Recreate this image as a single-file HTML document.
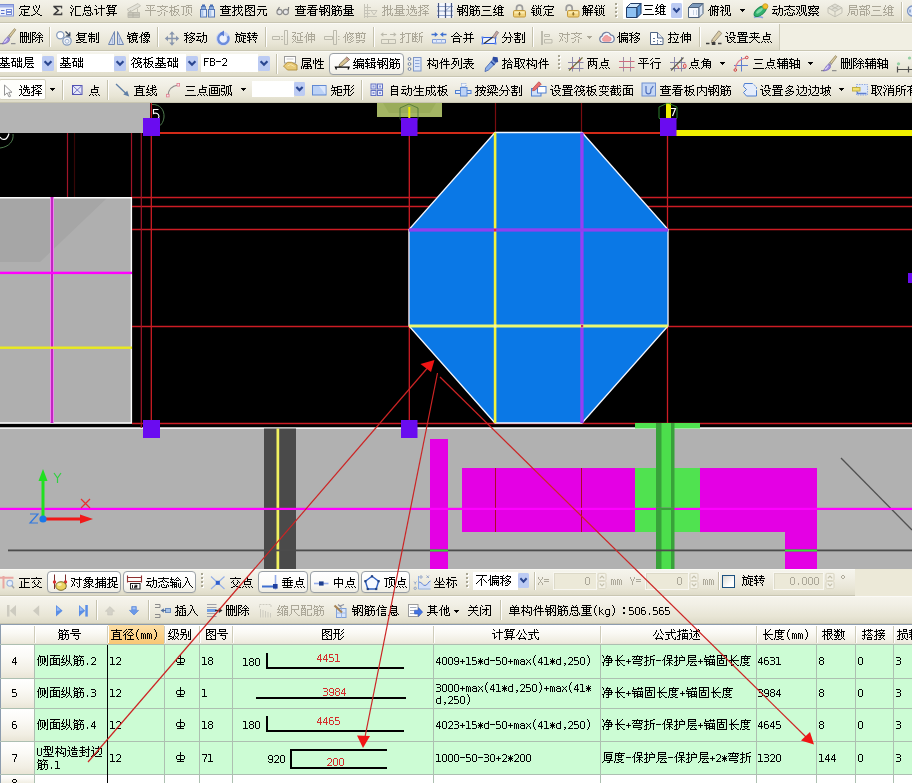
<!DOCTYPE html>
<html lang="zh-CN"><head><meta charset="utf-8"><title>GGJ - 编辑钢筋</title>
<style>
html,body{margin:0;padding:0;background:#ece9d8;overflow:hidden}
body{font-family:"Liberation Sans",sans-serif;font-size:12px}
#app{position:relative;width:912px;height:783px;overflow:hidden;background:#ece9d8}
#app div,#app span,#app svg{position:absolute}
.t{height:12px;font:12px/12px "Liberation Sans",sans-serif;color:transparent;white-space:nowrap;overflow:hidden}
.t svg{left:0;top:0;shape-rendering:crispEdges}
.k svg{fill:#000}.d svg{fill:#aca899}.r svg{fill:#d42c2c}.w svg{fill:#fff}
.i{overflow:visible}
.tb{left:0;width:912px;background:linear-gradient(#f5f4ec,#f1efe5 30%,#e8e5d5 75%,#dedbc8);border-top:1px solid #fbfaf6;border-bottom:1px solid #c9c6b2;box-sizing:border-box}
.tbend{background:#f1efe3;border-left:1px solid #cbc8b5;box-sizing:border-box}
.plain{background:#ece9d8}
.sep{border-left:1px solid #c5c2ae;border-right:1px solid #fff;box-sizing:border-box}
.grip{background:repeating-linear-gradient(#9d9a88 0,#9d9a88 1px,transparent 1px,transparent 2px,#fff 2px,#fff 3px,transparent 3px,transparent 4px);width:2px}
.combo{background:#fff}
.hot{background:linear-gradient(#fff,#fbfaf7 60%,#eeece2);border:1px solid #9aa0a6;border-radius:4px;box-sizing:border-box;box-shadow:0 1px 0 #d8d5c4}
.pressed{background:#fefefb;border:1px solid #d3d0be;border-radius:2px;box-sizing:border-box}
.inp{background:#ece9d8;border:1px solid #f8f7f1;box-sizing:border-box;box-shadow:inset 1px 1px 0 #dcd9c8}
.chk{background:linear-gradient(135deg,#dcdcd4,#fff 70%);border:1px solid #1c5180;box-sizing:border-box}
#canvas{left:0;top:103px}
.ghead{background:linear-gradient(#fff,#faf9f4 40%,#efece0 85%,#e4e0d0);border-top:1px solid #8c9cae;box-sizing:border-box}
.gsel{background:linear-gradient(#fde0a8,#f8c674)}
.gbody{background:#ccfcd4}
.growh{background:linear-gradient(#fff,#fbfaf6 35%,#f1eee3 80%,#e9e5d6)}
.gleft{background:#8c9cae}
.vl{background:#adbfb1}.hvl{background:#cfccba;box-shadow:1px 0 0 #fff}
.hl{background:#adbfb1}
.cur{background:#000}
#anno{left:0;top:0;pointer-events:none}
</style></head>
<body>
<svg width="0" height="0" style="position:absolute" aria-hidden="true"><defs>
<path id="g28" d="M3 0h1v1h-1zm-1 1h1v1h-1zm0 1h1v1h-1zm-1 1h1v1h-1zm0 1h1v1h-1zm0 1h1v1h-1zm0 1h1v1h-1zm0 1h1v1h-1zm1 1h1v1h-1zm0 1h1v1h-1zm1 1h1v1h-1z"/>
<path id="g29" d="M1 0h1v1h-1zm1 1h1v1h-1zm0 1h1v1h-1zm1 1h1v1h-1zm0 1h1v1h-1zm0 1h1v1h-1zm0 1h1v1h-1zm0 1h1v1h-1zm-1 1h1v1h-1zm0 1h1v1h-1zm-1 1h1v1h-1z"/>
<path id="g2a" d="M2 3h1v1h-1zm-2 1h1v1h-1zm2 0h1v1h-1zm2 0h1v1h-1zm-3 1h3v1h-3zm-1 1h5v1h-5zm1 1h3v1h-3zm-1 1h1v1h-1zm2 0h1v1h-1zm2 0h1v1h-1zm-2 1h1v1h-1z"/>
<path id="g2b" d="M2 4h1v1h-1zm0 1h1v1h-1zm-2 1h5v1h-5zm2 1h1v1h-1zm0 1h1v1h-1z"/>
<path id="g2c" d="M2 8h2v1h-2zm1 1h1v1h-1zm-1 1h1v1h-1z"/>
<path id="g2d" d="M0 5h5v1h-5z"/>
<path id="g2e" d="M2 8h1v1h-1zm0 1h1v1h-1z"/>
<path id="g30" d="M1 2h3v1h-3zm-1 1h1v1h-1zm4 0h1v1h-1zm-4 1h1v1h-1zm4 0h1v1h-1zm-4 1h1v1h-1zm4 0h1v1h-1zm-4 1h1v1h-1zm4 0h1v1h-1zm-4 1h1v1h-1zm4 0h1v1h-1zm-4 1h1v1h-1zm4 0h1v1h-1zm-3 1h3v1h-3z"/>
<path id="g31" d="M0 2h3v1h-3zm2 1h1v1h-1zm0 1h1v1h-1zm0 1h1v1h-1zm0 1h1v1h-1zm0 1h1v1h-1zm0 1h1v1h-1zm-2 1h5v1h-5z"/>
<path id="g32" d="M1 2h3v1h-3zm-1 1h1v1h-1zm4 0h1v1h-1zm0 1h1v1h-1zm0 1h1v1h-1zm-1 1h1v1h-1zm-1 1h1v1h-1zm-1 1h1v1h-1zm-1 1h5v1h-5z"/>
<path id="g33" d="M0 2h4v1h-4zm4 1h1v1h-1zm0 1h1v1h-1zm-3 1h3v1h-3zm3 1h1v1h-1zm0 1h1v1h-1zm0 1h1v1h-1zm-4 1h4v1h-4z"/>
<path id="g34" d="M3 2h1v1h-1zm-1 1h2v1h-2zm-1 1h1v1h-1zm2 0h1v1h-1zm-2 1h1v1h-1zm2 0h1v1h-1zm-3 1h1v1h-1zm3 0h1v1h-1zm-3 1h5v1h-5zm3 1h1v1h-1zm0 1h1v1h-1z"/>
<path id="g35" d="M0 2h4v1h-4zm0 1h1v1h-1zm0 1h1v1h-1zm0 1h4v1h-4zm4 1h1v1h-1zm0 1h1v1h-1zm0 1h1v1h-1zm-4 1h4v1h-4z"/>
<path id="g36" d="M1 2h3v1h-3zm-1 1h1v1h-1zm0 1h1v1h-1zm0 1h4v1h-4zm0 1h1v1h-1zm4 0h1v1h-1zm-4 1h1v1h-1zm4 0h1v1h-1zm-4 1h1v1h-1zm4 0h1v1h-1zm-3 1h3v1h-3z"/>
<path id="g37" d="M0 2h5v1h-5zm4 1h1v1h-1zm0 1h1v1h-1zm-1 1h1v1h-1zm0 1h1v1h-1zm-1 1h1v1h-1zm0 1h1v1h-1zm0 1h1v1h-1z"/>
<path id="g38" d="M1 2h3v1h-3zm-1 1h1v1h-1zm4 0h1v1h-1zm-4 1h1v1h-1zm4 0h1v1h-1zm-3 1h3v1h-3zm-1 1h1v1h-1zm4 0h1v1h-1zm-4 1h1v1h-1zm4 0h1v1h-1zm-4 1h1v1h-1zm4 0h1v1h-1zm-3 1h3v1h-3z"/>
<path id="g39" d="M1 2h3v1h-3zm-1 1h1v1h-1zm4 0h1v1h-1zm-4 1h1v1h-1zm4 0h1v1h-1zm-4 1h1v1h-1zm4 0h1v1h-1zm-3 1h4v1h-4zm3 1h1v1h-1zm-4 1h1v1h-1zm4 0h1v1h-1zm-3 1h3v1h-3z"/>
<path id="g3d" d="M0 4h5v1h-5zm0 2h5v1h-5z"/>
<path id="g42" d="M0 2h4v1h-4zm0 1h1v1h-1zm4 0h1v1h-1zm-4 1h1v1h-1zm4 0h1v1h-1zm-4 1h4v1h-4zm0 1h1v1h-1zm4 0h1v1h-1zm-4 1h1v1h-1zm4 0h1v1h-1zm-4 1h1v1h-1zm4 0h1v1h-1zm-4 1h4v1h-4z"/>
<path id="g46" d="M0 2h5v1h-5zm0 1h1v1h-1zm0 1h1v1h-1zm0 1h4v1h-4zm0 1h1v1h-1zm0 1h1v1h-1zm0 1h1v1h-1zm0 1h1v1h-1z"/>
<path id="g55" d="M0 2h1v1h-1zm4 0h1v1h-1zm-4 1h1v1h-1zm4 0h1v1h-1zm-4 1h1v1h-1zm4 0h1v1h-1zm-4 1h1v1h-1zm4 0h1v1h-1zm-4 1h1v1h-1zm4 0h1v1h-1zm-4 1h1v1h-1zm4 0h1v1h-1zm-4 1h1v1h-1zm4 0h1v1h-1zm-3 1h3v1h-3z"/>
<path id="g58" d="M0 2h1v1h-1zm4 0h1v1h-1zm-4 1h1v1h-1zm4 0h1v1h-1zm-3 1h1v1h-1zm2 0h1v1h-1zm-1 1h1v1h-1zm0 1h1v1h-1zm-1 1h1v1h-1zm2 0h1v1h-1zm-3 1h1v1h-1zm4 0h1v1h-1zm-4 1h1v1h-1zm4 0h1v1h-1z"/>
<path id="g59" d="M0 2h1v1h-1zm4 0h1v1h-1zm-4 1h1v1h-1zm4 0h1v1h-1zm-3 1h1v1h-1zm2 0h1v1h-1zm-2 1h1v1h-1zm2 0h1v1h-1zm-1 1h1v1h-1zm0 1h1v1h-1zm0 1h1v1h-1zm0 1h1v1h-1z"/>
<path id="g61" d="M1 4h3v1h-3zm-1 1h1v1h-1zm4 0h1v1h-1zm-3 1h4v1h-4zm-1 1h1v1h-1zm4 0h1v1h-1zm-4 1h1v1h-1zm4 0h1v1h-1zm-3 1h4v1h-4z"/>
<path id="g64" d="M4 2h1v1h-1zm0 1h1v1h-1zm-3 1h4v1h-4zm-1 1h1v1h-1zm4 0h1v1h-1zm-4 1h1v1h-1zm4 0h1v1h-1zm-4 1h1v1h-1zm4 0h1v1h-1zm-4 1h1v1h-1zm4 0h1v1h-1zm-3 1h4v1h-4z"/>
<path id="g67" d="M1 4h4v1h-4zm-1 1h1v1h-1zm4 0h1v1h-1zm-4 1h1v1h-1zm4 0h1v1h-1zm-4 1h1v1h-1zm4 0h1v1h-1zm-4 1h1v1h-1zm4 0h1v1h-1zm-3 1h4v1h-4zm3 1h1v1h-1zm-3 1h3v1h-3z"/>
<path id="g6b" d="M0 2h1v1h-1zm0 1h1v1h-1zm0 1h1v1h-1zm3 0h1v1h-1zm-3 1h1v1h-1zm2 0h1v1h-1zm-2 1h2v1h-2zm0 1h1v1h-1zm2 0h1v1h-1zm-2 1h1v1h-1zm3 0h1v1h-1zm-3 1h1v1h-1zm4 0h1v1h-1z"/>
<path id="g6d" d="M0 4h2v1h-2zm3 0h1v1h-1zm-3 1h1v1h-1zm2 0h1v1h-1zm2 0h1v1h-1zm-4 1h1v1h-1zm2 0h1v1h-1zm2 0h1v1h-1zm-4 1h1v1h-1zm2 0h1v1h-1zm2 0h1v1h-1zm-4 1h1v1h-1zm2 0h1v1h-1zm2 0h1v1h-1zm-4 1h1v1h-1zm2 0h1v1h-1zm2 0h1v1h-1z"/>
<path id="g78" d="M0 4h1v1h-1zm4 0h1v1h-1zm-3 1h1v1h-1zm2 0h1v1h-1zm-1 1h1v1h-1zm-1 1h1v1h-1zm2 0h1v1h-1zm-3 1h1v1h-1zm4 0h1v1h-1zm-4 1h1v1h-1zm4 0h1v1h-1z"/>
<path id="gb0" d="M1 2h2v1h-2zm-1 1h1v1h-1zm3 0h1v1h-1zm-3 1h1v1h-1zm3 0h1v1h-1zm-2 1h2v1h-2z"/>
<path id="g4e09" d="M1 1h9v1h-9zm1 4h7v1h-7zm-2 5h11v1h-11z"/>
<path id="g4e0d" d="M0 0h11v1h-11zm6 1h1v1h-1zm0 1h1v1h-1zm-1 1h1v1h-1zm-1 1h2v1h-2zm3 0h1v1h-1zm-4 1h1v1h-1zm2 0h1v1h-1zm3 0h1v1h-1zm-6 1h1v1h-1zm3 0h1v1h-1zm4 0h1v1h-1zm-8 1h1v1h-1zm4 0h1v1h-1zm5 0h1v1h-1zm-10 1h1v1h-1zm5 0h1v1h-1zm0 1h1v1h-1zm0 1h1v1h-1z"/>
<path id="g4e24" d="M0 0h11v1h-11zm3 1h1v1h-1zm3 0h1v1h-1zm-3 1h1v1h-1zm3 0h1v1h-1zm-5 1h9v1h-9zm0 1h1v1h-1zm2 0h1v1h-1zm3 0h1v1h-1zm3 0h1v1h-1zm-8 1h1v1h-1zm2 0h1v1h-1zm3 0h1v1h-1zm3 0h1v1h-1zm-8 1h1v1h-1zm2 0h2v1h-2zm3 0h2v1h-2zm3 0h1v1h-1zm-8 1h2v1h-2zm4 0h1v1h-1zm3 0h2v1h-2zm-7 1h1v1h-1zm3 0h1v1h-1zm5 0h1v1h-1zm-8 1h1v1h-1zm8 0h1v1h-1zm-8 1h1v1h-1zm7 0h2v1h-2z"/>
<path id="g4e2d" d="M5 0h1v1h-1zm0 1h1v1h-1zm-4 1h9v1h-9zm0 1h1v1h-1zm4 0h1v1h-1zm4 0h1v1h-1zm-8 1h1v1h-1zm4 0h1v1h-1zm4 0h1v1h-1zm-8 1h1v1h-1zm4 0h1v1h-1zm4 0h1v1h-1zm-8 1h9v1h-9zm0 1h1v1h-1zm4 0h1v1h-1zm4 0h1v1h-1zm-4 1h1v1h-1zm0 1h1v1h-1zm0 1h1v1h-1z"/>
<path id="g4e49" d="M4 0h1v1h-1zm4 0h1v1h-1zm-6 1h1v1h-1zm3 0h1v1h-1zm3 0h1v1h-1zm-6 1h1v1h-1zm3 0h1v1h-1zm3 0h1v1h-1zm-6 1h1v1h-1zm5 0h1v1h-1zm-4 1h1v1h-1zm4 0h1v1h-1zm-4 1h1v1h-1zm3 0h1v1h-1zm-2 1h1v1h-1zm2 0h1v1h-1zm-1 1h1v1h-1zm-1 1h1v1h-1zm2 0h1v1h-1zm-4 1h2v1h-2zm5 0h2v1h-2zm-7 1h2v1h-2zm9 0h2v1h-2z"/>
<path id="g4ea4" d="M5 0h1v1h-1zm-5 1h11v1h-11zm3 2h1v1h-1zm4 0h1v1h-1zm-5 1h1v1h-1zm6 0h1v1h-1zm-7 1h1v1h-1zm2 0h1v1h-1zm4 0h1v1h-1zm2 0h1v1h-1zm-6 1h1v1h-1zm4 0h1v1h-1zm-3 1h1v1h-1zm2 0h1v1h-1zm-1 1h1v1h-1zm-2 1h2v1h-2zm3 0h2v1h-2zm-5 1h2v1h-2zm7 0h3v1h-3z"/>
<path id="g4ed6" d="M3 0h1v1h-1zm4 0h1v1h-1zm-4 1h1v1h-1zm4 0h1v1h-1zm-5 1h1v1h-1zm3 0h1v1h-1zm2 0h1v1h-1zm2 0h1v1h-1zm-7 1h1v1h-1zm3 0h1v1h-1zm2 0h3v1h-3zm-6 1h2v1h-2zm3 0h4v1h-4zm5 0h1v1h-1zm-9 1h1v1h-1zm2 0h1v1h-1zm3 0h1v1h-1zm2 0h1v1h-1zm2 0h1v1h-1zm-7 1h1v1h-1zm3 0h1v1h-1zm2 0h1v1h-1zm2 0h1v1h-1zm-7 1h1v1h-1zm3 0h1v1h-1zm2 0h2v1h-2zm-5 1h1v1h-1zm3 0h1v1h-1zm2 0h1v1h-1zm3 0h1v1h-1zm-8 1h1v1h-1zm3 0h1v1h-1zm5 0h1v1h-1zm-8 1h1v1h-1zm4 0h5v1h-5z"/>
<path id="g4ef6" d="M3 0h1v1h-1zm4 0h1v1h-1zm-4 1h1v1h-1zm2 0h1v1h-1zm2 0h1v1h-1zm-5 1h1v1h-1zm3 0h1v1h-1zm2 0h1v1h-1zm-5 1h1v1h-1zm2 0h6v1h-6zm-3 1h3v1h-3zm6 0h1v1h-1zm-7 1h1v1h-1zm2 0h1v1h-1zm5 0h1v1h-1zm-5 1h1v1h-1zm2 0h7v1h-7zm-2 1h1v1h-1zm5 0h1v1h-1zm-5 1h1v1h-1zm5 0h1v1h-1zm-5 1h1v1h-1zm5 0h1v1h-1zm-5 1h1v1h-1zm5 0h1v1h-1z"/>
<path id="g4f38" d="M3 0h1v1h-1zm4 0h1v1h-1zm-4 1h1v1h-1zm4 0h1v1h-1zm-5 1h1v1h-1zm2 0h7v1h-7zm-2 1h1v1h-1zm2 0h1v1h-1zm3 0h1v1h-1zm3 0h1v1h-1zm-9 1h2v1h-2zm3 0h7v1h-7zm-4 1h1v1h-1zm2 0h1v1h-1zm2 0h1v1h-1zm3 0h1v1h-1zm3 0h1v1h-1zm-8 1h1v1h-1zm2 0h1v1h-1zm3 0h1v1h-1zm3 0h1v1h-1zm-8 1h1v1h-1zm2 0h7v1h-7zm-2 1h1v1h-1zm2 0h1v1h-1zm3 0h1v1h-1zm3 0h1v1h-1zm-8 1h1v1h-1zm5 0h1v1h-1zm-5 1h1v1h-1zm5 0h1v1h-1z"/>
<path id="g4fa7" d="M2 0h1v1h-1zm8 0h1v1h-1zm-8 1h6v1h-6zm8 0h1v1h-1zm-9 1h1v1h-1zm2 0h1v1h-1zm4 0h1v1h-1zm3 0h1v1h-1zm-9 1h1v1h-1zm2 0h1v1h-1zm2 0h1v1h-1zm2 0h2v1h-2zm3 0h1v1h-1zm-10 1h2v1h-2zm3 0h1v1h-1zm2 0h1v1h-1zm2 0h2v1h-2zm3 0h1v1h-1zm-9 1h1v1h-1zm2 0h1v1h-1zm2 0h1v1h-1zm2 0h2v1h-2zm3 0h1v1h-1zm-9 1h1v1h-1zm2 0h1v1h-1zm2 0h1v1h-1zm2 0h2v1h-2zm3 0h1v1h-1zm-9 1h1v1h-1zm2 0h1v1h-1zm2 0h1v1h-1zm2 0h1v1h-1zm3 0h1v1h-1zm-9 1h1v1h-1zm4 0h2v1h-2zm5 0h1v1h-1zm-9 1h1v1h-1zm3 0h1v1h-1zm3 0h1v1h-1zm3 0h1v1h-1zm-9 1h1v1h-1zm2 0h1v1h-1zm6 0h2v1h-2z"/>
<path id="g4fdd" d="M3 0h1v1h-1zm2 0h5v1h-5zm-2 1h1v1h-1zm2 0h1v1h-1zm4 0h1v1h-1zm-7 1h1v1h-1zm3 0h1v1h-1zm4 0h1v1h-1zm-7 1h1v1h-1zm3 0h5v1h-5zm-4 1h2v1h-2zm6 0h1v1h-1zm-7 1h1v1h-1zm2 0h1v1h-1zm2 0h7v1h-7zm-2 1h1v1h-1zm5 0h1v1h-1zm-5 1h1v1h-1zm4 0h3v1h-3zm-4 1h1v1h-1zm3 0h1v1h-1zm2 0h1v1h-1zm2 0h1v1h-1zm-7 1h1v1h-1zm2 0h1v1h-1zm3 0h1v1h-1zm3 0h1v1h-1zm-8 1h1v1h-1zm5 0h1v1h-1z"/>
<path id="g4fe1" d="M3 0h1v1h-1zm3 0h1v1h-1zm-3 1h1v1h-1zm4 0h1v1h-1zm-5 1h1v1h-1zm2 0h7v1h-7zm-2 1h1v1h-1zm-1 1h2v1h-2zm4 0h5v1h-5zm-5 1h1v1h-1zm2 0h1v1h-1zm0 1h1v1h-1zm3 0h5v1h-5zm-3 1h1v1h-1zm0 1h1v1h-1zm3 0h5v1h-5zm-3 1h1v1h-1zm3 0h1v1h-1zm4 0h1v1h-1zm-7 1h1v1h-1zm3 0h5v1h-5z"/>
<path id="g4fee" d="M3 0h1v1h-1zm3 0h1v1h-1zm-3 1h1v1h-1zm3 0h5v1h-5zm-4 1h1v1h-1zm2 0h2v1h-2zm3 0h1v1h-1zm2 0h1v1h-1zm-7 1h1v1h-1zm2 0h1v1h-1zm4 0h1v1h-1zm-7 1h2v1h-2zm3 0h1v1h-1zm2 0h2v1h-2zm3 0h1v1h-1zm-9 1h1v1h-1zm2 0h1v1h-1zm2 0h2v1h-2zm4 0h1v1h-1zm2 0h1v1h-1zm-8 1h1v1h-1zm2 0h1v1h-1zm3 0h1v1h-1zm2 0h1v1h-1zm-7 1h1v1h-1zm2 0h1v1h-1zm2 0h1v1h-1zm2 0h1v1h-1zm-6 1h1v1h-1zm2 0h1v1h-1zm3 0h1v1h-1zm3 0h1v1h-1zm-8 1h1v1h-1zm6 0h2v1h-2zm-6 1h1v1h-1zm3 0h3v1h-3z"/>
<path id="g4fef" d="M3 0h1v1h-1zm4 0h1v1h-1zm-4 1h8v1h-8zm-1 1h1v1h-1zm2 0h1v1h-1zm2 0h1v1h-1zm3 0h1v1h-1zm-7 1h1v1h-1zm2 0h1v1h-1zm2 0h1v1h-1zm3 0h1v1h-1zm-8 1h2v1h-2zm3 0h1v1h-1zm2 0h5v1h-5zm-6 1h1v1h-1zm2 0h1v1h-1zm2 0h3v1h-3zm5 0h1v1h-1zm-7 1h1v1h-1zm2 0h1v1h-1zm2 0h2v1h-2zm3 0h1v1h-1zm-7 1h1v1h-1zm2 0h1v1h-1zm2 0h1v1h-1zm2 0h2v1h-2zm-6 1h1v1h-1zm2 0h1v1h-1zm2 0h1v1h-1zm3 0h1v1h-1zm-7 1h1v1h-1zm2 0h1v1h-1zm2 0h1v1h-1zm3 0h1v1h-1zm-7 1h2v1h-2zm4 0h1v1h-1zm2 0h2v1h-2z"/>
<path id="g504f" d="M2 0h1v1h-1zm5 0h1v1h-1zm-5 1h1v1h-1zm2 0h7v1h-7zm-2 1h1v1h-1zm2 0h1v1h-1zm6 0h1v1h-1zm-8 1h1v1h-1zm2 0h7v1h-7zm-3 1h2v1h-2zm3 0h1v1h-1zm-4 1h1v1h-1zm2 0h1v1h-1zm2 0h7v1h-7zm-2 1h1v1h-1zm2 0h1v1h-1zm2 0h1v1h-1zm2 0h1v1h-1zm2 0h1v1h-1zm-8 1h1v1h-1zm2 0h7v1h-7zm-2 1h1v1h-1zm2 0h1v1h-1zm2 0h1v1h-1zm2 0h1v1h-1zm2 0h1v1h-1zm-8 1h3v1h-3zm4 0h1v1h-1zm2 0h1v1h-1zm2 0h1v1h-1zm-8 1h1v1h-1zm2 0h1v1h-1zm5 0h2v1h-2z"/>
<path id="g50cf" d="M3 0h1v1h-1zm3 0h4v1h-4zm-3 1h1v1h-1zm2 0h1v1h-1zm3 0h1v1h-1zm-6 1h1v1h-1zm2 0h7v1h-7zm-2 1h2v1h-2zm3 0h1v1h-1zm2 0h1v1h-1zm3 0h1v1h-1zm-9 1h2v1h-2zm4 0h6v1h-6zm-5 1h1v1h-1zm2 0h1v1h-1zm4 0h1v1h-1zm4 0h1v1h-1zm-8 1h1v1h-1zm2 0h2v1h-2zm3 0h1v1h-1zm2 0h1v1h-1zm-7 1h1v1h-1zm4 0h1v1h-1zm2 0h1v1h-1zm-6 1h1v1h-1zm2 0h2v1h-2zm3 0h3v1h-3zm-5 1h1v1h-1zm4 0h1v1h-1zm2 0h1v1h-1zm2 0h1v1h-1zm-8 1h1v1h-1zm2 0h2v1h-2zm3 0h2v1h-2z"/>
<path id="g5143" d="M2 1h8v1h-8zm-1 3h10v1h-10zm3 1h1v1h-1zm3 0h1v1h-1zm-3 1h1v1h-1zm3 0h1v1h-1zm-4 1h1v1h-1zm4 0h1v1h-1zm-4 1h1v1h-1zm4 0h1v1h-1zm3 0h1v1h-1zm-8 1h1v1h-1zm5 0h1v1h-1zm3 0h1v1h-1zm-9 1h1v1h-1zm7 0h3v1h-3z"/>
<path id="g5165" d="M3 0h2v1h-2zm2 1h1v1h-1zm0 1h1v1h-1zm0 1h1v1h-1zm-1 1h1v1h-1zm2 0h1v1h-1zm-2 1h1v1h-1zm2 0h1v1h-1zm-3 1h1v1h-1zm4 0h1v1h-1zm-4 1h1v1h-1zm4 0h1v1h-1zm-5 1h1v1h-1zm6 0h1v1h-1zm-7 1h1v1h-1zm8 0h1v1h-1zm-9 1h1v1h-1zm10 0h1v1h-1z"/>
<path id="g516c" d="M7 0h1v1h-1zm-4 1h1v1h-1zm4 0h1v1h-1zm-4 1h1v1h-1zm5 0h1v1h-1zm-6 1h1v1h-1zm6 0h1v1h-1zm-6 1h1v1h-1zm3 0h1v1h-1zm4 0h1v1h-1zm-8 1h1v1h-1zm4 0h1v1h-1zm5 0h1v1h-1zm-10 1h1v1h-1zm4 0h1v1h-1zm0 1h1v1h-1zm3 0h1v1h-1zm-4 1h1v1h-1zm5 0h1v1h-1zm-6 1h8v1h-8zm1 1h1v1h-1zm6 0h1v1h-1z"/>
<path id="g5173" d="M2 0h1v1h-1zm6 0h1v1h-1zm-5 1h1v1h-1zm4 0h1v1h-1zm-6 1h9v1h-9zm4 1h1v1h-1zm0 1h1v1h-1zm-5 1h10v1h-10zm5 1h1v1h-1zm-1 1h1v1h-1zm2 0h1v1h-1zm-3 1h1v1h-1zm4 0h1v1h-1zm-5 1h1v1h-1zm6 0h1v1h-1zm-8 1h2v1h-2zm9 0h2v1h-2z"/>
<path id="g5176" d="M3 0h1v1h-1zm4 0h1v1h-1zm-6 1h9v1h-9zm2 1h1v1h-1zm4 0h1v1h-1zm-4 1h5v1h-5zm0 1h1v1h-1zm4 0h1v1h-1zm-4 1h5v1h-5zm0 1h1v1h-1zm4 0h1v1h-1zm-7 1h11v1h-11zm3 1h1v1h-1zm4 0h1v1h-1zm-5 1h1v1h-1zm6 0h1v1h-1zm-8 1h2v1h-2zm9 0h1v1h-1z"/>
<path id="g5185" d="M5 0h1v1h-1zm0 1h1v1h-1zm-4 1h10v1h-10zm0 1h1v1h-1zm4 0h1v1h-1zm5 0h1v1h-1zm-9 1h1v1h-1zm4 0h1v1h-1zm5 0h1v1h-1zm-9 1h1v1h-1zm4 0h2v1h-2zm5 0h1v1h-1zm-9 1h1v1h-1zm3 0h1v1h-1zm3 0h1v1h-1zm3 0h1v1h-1zm-9 1h1v1h-1zm2 0h1v1h-1zm5 0h1v1h-1zm2 0h1v1h-1zm-9 1h1v1h-1zm9 0h1v1h-1zm-9 1h1v1h-1zm9 0h1v1h-1zm-9 1h1v1h-1zm7 0h3v1h-3z"/>
<path id="g51c0" d="M0 0h1v1h-1zm5 0h1v1h-1zm-4 1h1v1h-1zm3 0h5v1h-5zm-3 1h1v1h-1zm3 0h1v1h-1zm3 0h1v1h-1zm-4 1h7v1h-7zm-1 1h1v1h-1zm4 0h1v1h-1zm3 0h1v1h-1zm-7 1h9v1h-9zm0 1h1v1h-1zm4 0h1v1h-1zm3 0h1v1h-1zm-9 1h2v1h-2zm4 0h6v1h-6zm-3 1h1v1h-1zm5 0h1v1h-1zm-5 1h1v1h-1zm5 0h1v1h-1zm-5 1h1v1h-1zm3 0h3v1h-3z"/>
<path id="g5206" d="M3 0h1v1h-1zm4 0h1v1h-1zm-4 1h1v1h-1zm4 0h1v1h-1zm-5 1h1v1h-1zm6 0h1v1h-1zm-6 1h1v1h-1zm6 0h1v1h-1zm-7 1h1v1h-1zm8 0h1v1h-1zm-9 1h1v1h-1zm2 0h7v1h-7zm8 0h1v1h-1zm-6 1h1v1h-1zm4 0h1v1h-1zm-4 1h1v1h-1zm4 0h1v1h-1zm-5 1h1v1h-1zm5 0h1v1h-1zm-6 1h1v1h-1zm6 0h1v1h-1zm-8 1h2v1h-2zm6 0h2v1h-2z"/>
<path id="g5217" d="M1 0h6v1h-6zm9 0h1v1h-1zm-7 1h1v1h-1zm7 0h1v1h-1zm-7 1h1v1h-1zm4 0h1v1h-1zm3 0h1v1h-1zm-8 1h4v1h-4zm5 0h1v1h-1zm3 0h1v1h-1zm-8 1h1v1h-1zm3 0h1v1h-1zm2 0h1v1h-1zm3 0h1v1h-1zm-9 1h2v1h-2zm4 0h1v1h-1zm2 0h1v1h-1zm3 0h1v1h-1zm-10 1h1v1h-1zm3 0h2v1h-2zm4 0h1v1h-1zm3 0h1v1h-1zm-6 1h1v1h-1zm3 0h1v1h-1zm3 0h1v1h-1zm-7 1h1v1h-1zm7 0h1v1h-1zm-8 1h1v1h-1zm8 0h1v1h-1zm-10 1h2v1h-2zm8 0h3v1h-3z"/>
<path id="g5220" d="M0 0h3v1h-3zm4 0h3v1h-3zm6 0h1v1h-1zm-10 1h1v1h-1zm2 0h1v1h-1zm2 0h1v1h-1zm2 0h1v1h-1zm2 0h1v1h-1zm2 0h1v1h-1zm-10 1h1v1h-1zm2 0h1v1h-1zm2 0h1v1h-1zm2 0h1v1h-1zm2 0h1v1h-1zm2 0h1v1h-1zm-10 1h1v1h-1zm2 0h1v1h-1zm2 0h1v1h-1zm2 0h1v1h-1zm2 0h1v1h-1zm2 0h1v1h-1zm-10 1h9v1h-9zm10 0h1v1h-1zm-10 1h1v1h-1zm2 0h1v1h-1zm2 0h1v1h-1zm2 0h1v1h-1zm2 0h1v1h-1zm2 0h1v1h-1zm-10 1h1v1h-1zm2 0h1v1h-1zm2 0h1v1h-1zm2 0h1v1h-1zm2 0h1v1h-1zm2 0h1v1h-1zm-10 1h1v1h-1zm2 0h1v1h-1zm2 0h1v1h-1zm2 0h1v1h-1zm2 0h1v1h-1zm2 0h1v1h-1zm-10 1h1v1h-1zm2 0h1v1h-1zm2 0h1v1h-1zm2 0h1v1h-1zm4 0h1v1h-1zm-10 1h1v1h-1zm2 0h1v1h-1zm2 0h1v1h-1zm2 0h1v1h-1zm4 0h1v1h-1zm-10 1h1v1h-1zm2 0h2v1h-2zm3 0h2v1h-2zm3 0h3v1h-3z"/>
<path id="g522b" d="M1 0h5v1h-5zm9 0h1v1h-1zm-9 1h1v1h-1zm4 0h1v1h-1zm5 0h1v1h-1zm-9 1h1v1h-1zm4 0h1v1h-1zm3 0h1v1h-1zm2 0h1v1h-1zm-9 1h5v1h-5zm7 0h1v1h-1zm2 0h1v1h-1zm-7 1h1v1h-1zm5 0h1v1h-1zm2 0h1v1h-1zm-10 1h7v1h-7zm8 0h1v1h-1zm2 0h1v1h-1zm-7 1h1v1h-1zm3 0h1v1h-1zm2 0h1v1h-1zm2 0h1v1h-1zm-8 1h1v1h-1zm4 0h1v1h-1zm2 0h1v1h-1zm2 0h1v1h-1zm-8 1h1v1h-1zm4 0h1v1h-1zm4 0h1v1h-1zm-9 1h1v1h-1zm5 0h1v1h-1zm4 0h1v1h-1zm-10 1h1v1h-1zm4 0h2v1h-2zm4 0h3v1h-3z"/>
<path id="g5236" d="M3 0h1v1h-1zm7 0h1v1h-1zm-9 1h1v1h-1zm2 0h1v1h-1zm5 0h1v1h-1zm2 0h1v1h-1zm-9 1h6v1h-6zm7 0h1v1h-1zm2 0h1v1h-1zm-10 1h1v1h-1zm3 0h1v1h-1zm5 0h1v1h-1zm2 0h1v1h-1zm-10 1h7v1h-7zm8 0h1v1h-1zm2 0h1v1h-1zm-7 1h1v1h-1zm5 0h1v1h-1zm2 0h1v1h-1zm-9 1h6v1h-6zm7 0h1v1h-1zm2 0h1v1h-1zm-9 1h1v1h-1zm2 0h1v1h-1zm3 0h1v1h-1zm2 0h1v1h-1zm2 0h1v1h-1zm-9 1h1v1h-1zm2 0h1v1h-1zm3 0h1v1h-1zm4 0h1v1h-1zm-9 1h1v1h-1zm2 0h1v1h-1zm2 0h2v1h-2zm5 0h1v1h-1zm-7 1h1v1h-1zm5 0h3v1h-3z"/>
<path id="g526a" d="M3 0h1v1h-1zm4 0h1v1h-1zm-7 1h11v1h-11zm1 1h1v1h-1zm3 0h1v1h-1zm5 0h1v1h-1zm-8 1h4v1h-4zm5 0h1v1h-1zm3 0h1v1h-1zm-8 1h1v1h-1zm3 0h1v1h-1zm2 0h1v1h-1zm3 0h1v1h-1zm-8 1h4v1h-4zm5 0h1v1h-1zm3 0h1v1h-1zm-8 1h1v1h-1zm3 0h1v1h-1zm4 0h2v1h-2zm-7 2h9v1h-9zm3 1h1v1h-1zm5 0h1v1h-1zm-8 1h3v1h-3zm6 0h2v1h-2z"/>
<path id="g5272" d="M3 0h1v1h-1zm7 0h1v1h-1zm-10 1h7v1h-7zm10 0h1v1h-1zm-10 1h1v1h-1zm3 0h1v1h-1zm3 0h1v1h-1zm2 0h1v1h-1zm2 0h1v1h-1zm-9 1h5v1h-5zm7 0h1v1h-1zm2 0h1v1h-1zm-7 1h1v1h-1zm5 0h1v1h-1zm2 0h1v1h-1zm-9 1h5v1h-5zm7 0h1v1h-1zm2 0h1v1h-1zm-7 1h1v1h-1zm5 0h1v1h-1zm2 0h1v1h-1zm-10 1h7v1h-7zm8 0h1v1h-1zm2 0h1v1h-1zm-9 1h1v1h-1zm4 0h1v1h-1zm5 0h1v1h-1zm-9 1h1v1h-1zm4 0h1v1h-1zm5 0h1v1h-1zm-9 1h5v1h-5zm7 0h3v1h-3z"/>
<path id="g52a8" d="M7 0h1v1h-1zm-6 1h4v1h-4zm6 0h1v1h-1zm0 1h1v1h-1zm-1 1h5v1h-5zm-6 1h6v1h-6zm7 0h1v1h-1zm3 0h1v1h-1zm-8 1h1v1h-1zm5 0h1v1h-1zm3 0h1v1h-1zm-8 1h1v1h-1zm5 0h1v1h-1zm3 0h1v1h-1zm-9 1h1v1h-1zm3 0h1v1h-1zm3 0h1v1h-1zm3 0h1v1h-1zm-10 1h5v1h-5zm6 0h1v1h-1zm4 0h1v1h-1zm-6 1h1v1h-1zm2 0h1v1h-1zm4 0h1v1h-1zm-5 1h1v1h-1zm3 0h2v1h-2z"/>
<path id="g5355" d="M3 0h1v1h-1zm4 0h1v1h-1zm-3 1h1v1h-1zm2 0h1v1h-1zm-5 1h9v1h-9zm0 1h1v1h-1zm4 0h1v1h-1zm4 0h1v1h-1zm-8 1h9v1h-9zm0 1h1v1h-1zm4 0h1v1h-1zm4 0h1v1h-1zm-8 1h9v1h-9zm4 1h1v1h-1zm-5 1h11v1h-11zm5 1h1v1h-1zm0 1h1v1h-1z"/>
<path id="g539a" d="M2 0h9v1h-9zm0 1h1v1h-1zm0 1h1v1h-1zm2 0h6v1h-6zm-2 1h1v1h-1zm2 0h1v1h-1zm5 0h1v1h-1zm-7 1h1v1h-1zm2 0h6v1h-6zm-2 1h1v1h-1zm2 0h1v1h-1zm5 0h1v1h-1zm-7 1h1v1h-1zm2 0h6v1h-6zm-2 1h1v1h-1zm6 0h1v1h-1zm-6 1h9v1h-9zm-1 1h1v1h-1zm6 0h1v1h-1zm-7 1h1v1h-1zm5 0h3v1h-3z"/>
<path id="g53d6" d="M0 0h6v1h-6zm1 1h1v1h-1zm3 0h1v1h-1zm2 0h5v1h-5zm-5 1h1v1h-1zm3 0h1v1h-1zm2 0h1v1h-1zm4 0h1v1h-1zm-9 1h4v1h-4zm5 0h1v1h-1zm4 0h1v1h-1zm-9 1h1v1h-1zm3 0h1v1h-1zm3 0h1v1h-1zm2 0h1v1h-1zm-8 1h4v1h-4zm6 0h1v1h-1zm2 0h1v1h-1zm-8 1h1v1h-1zm3 0h1v1h-1zm4 0h1v1h-1zm-7 1h1v1h-1zm3 0h2v1h-2zm4 0h1v1h-1zm-8 1h5v1h-5zm7 0h1v1h-1zm2 0h1v1h-1zm-5 1h1v1h-1zm2 0h1v1h-1zm3 0h1v1h-1zm-5 1h2v1h-2zm6 0h1v1h-1z"/>
<path id="g53d8" d="M5 0h1v1h-1zm-4 1h10v1h-10zm3 1h1v1h-1zm3 0h1v1h-1zm-5 1h1v1h-1zm2 0h1v1h-1zm3 0h1v1h-1zm2 0h1v1h-1zm-8 1h1v1h-1zm3 0h1v1h-1zm3 0h1v1h-1zm3 0h1v1h-1zm-8 2h8v1h-8zm2 1h1v1h-1zm3 0h1v1h-1zm-2 1h2v1h-2zm-1 1h1v1h-1zm3 0h1v1h-1zm-6 1h3v1h-3zm7 0h3v1h-3z"/>
<path id="g53f7" d="M2 0h7v1h-7zm0 1h1v1h-1zm6 0h1v1h-1zm-6 1h7v1h-7zm-2 2h11v1h-11zm4 1h1v1h-1zm-1 1h6v1h-6zm5 1h1v1h-1zm0 1h1v1h-1zm-3 1h1v1h-1zm3 0h1v1h-1zm-2 1h2v1h-2z"/>
<path id="g5408" d="M5 0h1v1h-1zm-1 1h1v1h-1zm2 0h1v1h-1zm-3 1h1v1h-1zm4 0h1v1h-1zm-5 1h1v1h-1zm6 0h1v1h-1zm-8 1h2v1h-2zm3 0h5v1h-5zm6 0h2v1h-2zm-7 2h7v1h-7zm0 1h1v1h-1zm6 0h1v1h-1zm-6 1h1v1h-1zm6 0h1v1h-1zm-6 1h7v1h-7zm0 1h1v1h-1zm6 0h1v1h-1z"/>
<path id="g56fa" d="M1 0h10v1h-10zm0 1h1v1h-1zm4 0h1v1h-1zm5 0h1v1h-1zm-9 1h1v1h-1zm4 0h1v1h-1zm5 0h1v1h-1zm-9 1h8v1h-8zm9 0h1v1h-1zm-9 1h1v1h-1zm4 0h1v1h-1zm5 0h1v1h-1zm-9 1h1v1h-1zm2 0h5v1h-5zm7 0h1v1h-1zm-9 1h1v1h-1zm2 0h1v1h-1zm4 0h1v1h-1zm3 0h1v1h-1zm-9 1h1v1h-1zm2 0h1v1h-1zm4 0h1v1h-1zm3 0h1v1h-1zm-9 1h1v1h-1zm2 0h5v1h-5zm7 0h1v1h-1zm-9 1h1v1h-1zm9 0h1v1h-1zm-9 1h10v1h-10z"/>
<path id="g56fe" d="M1 0h10v1h-10zm0 1h1v1h-1zm3 0h1v1h-1zm6 0h1v1h-1zm-9 1h1v1h-1zm3 0h5v1h-5zm6 0h1v1h-1zm-9 1h1v1h-1zm2 0h2v1h-2zm4 0h1v1h-1zm3 0h1v1h-1zm-9 1h2v1h-2zm4 0h2v1h-2zm5 0h1v1h-1zm-9 1h1v1h-1zm3 0h1v1h-1zm3 0h1v1h-1zm3 0h1v1h-1zm-9 1h3v1h-3zm4 0h1v1h-1zm3 0h3v1h-3zm-7 1h1v1h-1zm5 0h1v1h-1zm4 0h1v1h-1zm-9 1h1v1h-1zm4 0h1v1h-1zm5 0h1v1h-1zm-9 1h1v1h-1zm5 0h1v1h-1zm4 0h1v1h-1zm-9 1h10v1h-10z"/>
<path id="g5750" d="M5 0h1v1h-1zm-3 1h1v1h-1zm3 0h1v1h-1zm3 0h1v1h-1zm-6 1h1v1h-1zm3 0h1v1h-1zm3 0h1v1h-1zm-6 1h1v1h-1zm3 0h1v1h-1zm3 0h1v1h-1zm-7 1h1v1h-1zm2 0h1v1h-1zm2 0h1v1h-1zm2 0h1v1h-1zm2 0h1v1h-1zm-9 1h1v1h-1zm4 0h3v1h-3zm6 0h1v1h-1zm-5 1h1v1h-1zm-4 1h9v1h-9zm4 1h1v1h-1zm0 1h1v1h-1zm-5 1h11v1h-11z"/>
<path id="g5761" d="M2 0h1v1h-1zm6 0h1v1h-1zm-6 1h1v1h-1zm6 0h1v1h-1zm-6 1h1v1h-1zm3 0h6v1h-6zm-5 1h6v1h-6zm8 0h1v1h-1zm2 0h1v1h-1zm-8 1h1v1h-1zm3 0h1v1h-1zm3 0h1v1h-1zm-6 1h1v1h-1zm3 0h5v1h-5zm-3 1h1v1h-1zm2 0h2v1h-2zm3 0h1v1h-1zm2 0h1v1h-1zm-7 1h2v1h-2zm3 0h1v1h-1zm2 0h1v1h-1zm2 0h1v1h-1zm-9 1h3v1h-3zm5 0h1v1h-1zm3 0h1v1h-1zm-4 1h1v1h-1zm3 0h1v1h-1zm2 0h1v1h-1zm-6 1h1v1h-1zm2 0h2v1h-2zm5 0h1v1h-1z"/>
<path id="g5782" d="M7 0h2v1h-2zm-6 1h6v1h-6zm4 1h1v1h-1zm-5 1h11v1h-11zm2 1h1v1h-1zm3 0h1v1h-1zm3 0h1v1h-1zm-8 1h11v1h-11zm2 1h1v1h-1zm3 0h1v1h-1zm3 0h1v1h-1zm-6 1h1v1h-1zm3 0h1v1h-1zm3 0h1v1h-1zm-8 1h11v1h-11zm5 1h1v1h-1zm-4 1h9v1h-9z"/>
<path id="g578b" d="M1 0h6v1h-6zm8 0h1v1h-1zm-7 1h1v1h-1zm2 0h1v1h-1zm3 0h1v1h-1zm2 0h1v1h-1zm-7 1h1v1h-1zm2 0h1v1h-1zm3 0h1v1h-1zm2 0h1v1h-1zm-9 1h8v1h-8zm9 0h1v1h-1zm-7 1h1v1h-1zm2 0h1v1h-1zm3 0h1v1h-1zm2 0h1v1h-1zm-7 1h1v1h-1zm2 0h1v1h-1zm5 0h1v1h-1zm-8 1h1v1h-1zm3 0h2v1h-2zm4 0h2v1h-2zm-3 1h1v1h-1zm-3 1h7v1h-7zm3 1h1v1h-1zm-5 1h11v1h-11z"/>
<path id="g57fa" d="M3 0h1v1h-1zm4 0h1v1h-1zm-6 1h9v1h-9zm2 1h1v1h-1zm4 0h1v1h-1zm-4 1h3v1h-3zm4 0h1v1h-1zm-4 1h1v1h-1zm2 0h3v1h-3zm-2 1h1v1h-1zm4 0h1v1h-1zm-7 1h11v1h-11zm2 1h1v1h-1zm3 0h1v1h-1zm3 0h1v1h-1zm-8 1h2v1h-2zm3 0h5v1h-5zm6 0h2v1h-2zm-4 1h1v1h-1zm-5 1h11v1h-11z"/>
<path id="g590d" d="M2 0h1v1h-1zm0 1h9v1h-9zm-1 1h2v1h-2zm7 0h1v1h-1zm-8 1h1v1h-1zm2 0h7v1h-7zm0 1h1v1h-1zm6 0h1v1h-1zm-6 1h7v1h-7zm1 1h1v1h-1zm-1 1h7v1h-7zm-2 1h2v1h-2zm4 0h1v1h-1zm3 0h1v1h-1zm-2 1h2v1h-2zm-5 1h5v1h-5zm7 0h4v1h-4z"/>
<path id="g591a" d="M5 0h1v1h-1zm-1 1h5v1h-5zm-1 1h1v1h-1zm5 0h1v1h-1zm-6 1h1v1h-1zm2 0h1v1h-1zm3 0h1v1h-1zm-2 1h2v1h-2zm-2 1h2v1h-2zm3 0h1v1h-1zm-5 1h2v1h-2zm4 0h5v1h-5zm-1 1h1v1h-1zm5 0h1v1h-1zm-7 1h2v1h-2zm3 0h1v1h-1zm3 0h1v1h-1zm-2 1h2v1h-2zm-5 1h5v1h-5z"/>
<path id="g5939" d="M5 0h1v1h-1zm-4 1h9v1h-9zm4 1h1v1h-1zm-3 1h1v1h-1zm3 0h1v1h-1zm3 0h1v1h-1zm-5 1h1v1h-1zm2 0h1v1h-1zm2 0h1v1h-1zm-7 1h11v1h-11zm5 1h1v1h-1zm-1 1h1v1h-1zm2 0h1v1h-1zm-3 1h1v1h-1zm4 0h1v1h-1zm-5 1h1v1h-1zm6 0h1v1h-1zm-8 1h2v1h-2zm9 0h2v1h-2z"/>
<path id="g5b9a" d="M5 0h1v1h-1zm-4 1h10v1h-10zm0 1h1v1h-1zm9 0h1v1h-1zm-10 1h1v1h-1zm9 0h1v1h-1zm-7 1h8v1h-8zm3 1h1v1h-1zm-3 1h1v1h-1zm3 0h1v1h-1zm-3 1h1v1h-1zm3 0h4v1h-4zm-3 1h1v1h-1zm3 0h1v1h-1zm-4 1h1v1h-1zm2 0h1v1h-1zm2 0h1v1h-1zm-5 1h1v1h-1zm4 0h7v1h-7z"/>
<path id="g5bdf" d="M5 0h1v1h-1zm-5 1h11v1h-11zm0 1h1v1h-1zm2 0h1v1h-1zm4 0h1v1h-1zm4 0h1v1h-1zm-10 1h1v1h-1zm2 0h4v1h-4zm5 0h4v1h-4zm-6 1h2v1h-2zm3 0h1v1h-1zm3 0h1v1h-1zm2 0h1v1h-1zm-8 1h1v1h-1zm2 0h1v1h-1zm5 0h1v1h-1zm-6 1h1v1h-1zm2 0h4v1h-4zm5 0h1v1h-1zm-9 1h2v1h-2zm10 0h1v1h-1zm-9 1h9v1h-9zm1 1h1v1h-1zm3 0h1v1h-1zm3 0h1v1h-1zm-8 1h2v1h-2zm4 0h2v1h-2zm5 0h2v1h-2z"/>
<path id="g5bf9" d="M8 0h1v1h-1zm-8 1h4v1h-4zm8 0h1v1h-1zm-5 1h8v1h-8zm-3 1h1v1h-1zm3 0h1v1h-1zm5 0h1v1h-1zm-7 1h1v1h-1zm2 0h1v1h-1zm5 0h1v1h-1zm-6 1h1v1h-1zm3 0h1v1h-1zm3 0h1v1h-1zm-6 1h1v1h-1zm4 0h1v1h-1zm2 0h1v1h-1zm-7 1h1v1h-1zm2 0h1v1h-1zm5 0h1v1h-1zm-7 1h1v1h-1zm2 0h1v1h-1zm5 0h1v1h-1zm-8 1h1v1h-1zm6 0h1v1h-1zm2 0h1v1h-1zm-1 1h1v1h-1z"/>
<path id="g5c01" d="M3 0h1v1h-1zm6 0h1v1h-1zm-8 1h5v1h-5zm8 0h1v1h-1zm-6 1h1v1h-1zm6 0h1v1h-1zm-6 1h1v1h-1zm3 0h5v1h-5zm-6 1h6v1h-6zm9 0h1v1h-1zm-6 1h1v1h-1zm3 0h1v1h-1zm3 0h1v1h-1zm-8 1h5v1h-5zm6 0h1v1h-1zm2 0h1v1h-1zm-6 1h1v1h-1zm6 0h1v1h-1zm-6 1h1v1h-1zm6 0h1v1h-1zm-6 1h3v1h-3zm6 0h1v1h-1zm-9 1h3v1h-3zm7 0h3v1h-3z"/>
<path id="g5c3a" d="M2 0h8v1h-8zm0 1h1v1h-1zm7 0h1v1h-1zm-7 1h1v1h-1zm7 0h1v1h-1zm-7 1h1v1h-1zm7 0h1v1h-1zm-7 1h8v1h-8zm0 1h1v1h-1zm3 0h1v1h-1zm-3 1h1v1h-1zm3 0h1v1h-1zm-3 1h1v1h-1zm4 0h1v1h-1zm-4 1h1v1h-1zm5 0h1v1h-1zm-6 1h1v1h-1zm7 0h1v1h-1zm-8 1h1v1h-1zm9 0h2v1h-2z"/>
<path id="g5c40" d="M2 0h8v1h-8zm0 1h1v1h-1zm7 0h1v1h-1zm-7 1h8v1h-8zm0 1h1v1h-1zm0 1h9v1h-9zm0 1h1v1h-1zm8 0h1v1h-1zm-8 1h1v1h-1zm2 0h4v1h-4zm6 0h1v1h-1zm-8 1h1v1h-1zm2 0h1v1h-1zm3 0h1v1h-1zm3 0h1v1h-1zm-9 1h1v1h-1zm3 0h4v1h-4zm6 0h1v1h-1zm-9 1h1v1h-1zm3 0h1v1h-1zm3 0h1v1h-1zm3 0h1v1h-1zm-10 1h1v1h-1zm8 0h2v1h-2z"/>
<path id="g5c42" d="M2 0h8v1h-8zm0 1h1v1h-1zm7 0h1v1h-1zm-7 1h8v1h-8zm0 1h1v1h-1zm0 1h1v1h-1zm2 0h6v1h-6zm-2 1h1v1h-1zm0 1h9v1h-9zm0 1h1v1h-1zm4 0h1v1h-1zm-4 1h1v1h-1zm3 0h1v1h-1zm3 0h1v1h-1zm-7 1h1v1h-1zm3 0h1v1h-1zm5 0h1v1h-1zm-9 1h1v1h-1zm4 0h7v1h-7z"/>
<path id="g5c5e" d="M1 0h9v1h-9zm0 1h1v1h-1zm8 0h1v1h-1zm-8 1h9v1h-9zm0 1h1v1h-1zm8 0h1v1h-1zm-8 1h1v1h-1zm2 0h6v1h-6zm-2 1h1v1h-1zm5 0h1v1h-1zm-5 1h1v1h-1zm2 0h7v1h-7zm-2 1h1v1h-1zm2 0h1v1h-1zm3 0h1v1h-1zm3 0h1v1h-1zm-9 1h1v1h-1zm2 0h9v1h-9zm-2 1h1v1h-1zm2 0h1v1h-1zm4 0h1v1h-1zm4 0h1v1h-1zm-10 1h1v1h-1zm2 0h1v1h-1zm2 0h4v1h-4zm5 0h2v1h-2z"/>
<path id="g5e73" d="M1 0h9v1h-9zm4 1h1v1h-1zm-3 1h1v1h-1zm3 0h1v1h-1zm3 0h1v1h-1zm-5 1h1v1h-1zm2 0h1v1h-1zm2 0h1v1h-1zm-2 1h1v1h-1zm-5 1h11v1h-11zm5 1h1v1h-1zm0 1h1v1h-1zm0 1h1v1h-1zm0 1h1v1h-1zm0 1h1v1h-1z"/>
<path id="g5e76" d="M2 0h1v1h-1zm6 0h1v1h-1zm-5 1h1v1h-1zm4 0h1v1h-1zm-6 1h9v1h-9zm2 1h1v1h-1zm4 0h1v1h-1zm-4 1h1v1h-1zm4 0h1v1h-1zm-4 1h1v1h-1zm4 0h1v1h-1zm-7 1h11v1h-11zm3 1h1v1h-1zm4 0h1v1h-1zm-4 1h1v1h-1zm4 0h1v1h-1zm-5 1h1v1h-1zm5 0h1v1h-1zm-6 1h1v1h-1zm6 0h1v1h-1z"/>
<path id="g5ea6" d="M5 0h1v1h-1zm-4 1h10v1h-10zm0 1h1v1h-1zm3 0h1v1h-1zm3 0h1v1h-1zm-6 1h9v1h-9zm0 1h1v1h-1zm3 0h1v1h-1zm3 0h1v1h-1zm-6 1h1v1h-1zm3 0h4v1h-4zm-3 1h1v1h-1zm0 1h1v1h-1zm2 0h6v1h-6zm-2 1h1v1h-1zm3 0h1v1h-1zm3 0h1v1h-1zm-7 1h1v1h-1zm5 0h2v1h-2zm-5 1h1v1h-1zm2 0h3v1h-3zm5 0h3v1h-3z"/>
<path id="g5ef6" d="M0 0h4v1h-4zm9 0h2v1h-2zm-6 1h1v1h-1zm2 0h4v1h-4zm-3 1h1v1h-1zm6 0h1v1h-1zm-7 1h1v1h-1zm7 0h1v1h-1zm-8 1h4v1h-4zm5 0h1v1h-1zm3 0h3v1h-3zm-5 1h1v1h-1zm2 0h1v1h-1zm3 0h1v1h-1zm-8 1h1v1h-1zm3 0h1v1h-1zm2 0h1v1h-1zm3 0h1v1h-1zm-7 1h1v1h-1zm2 0h1v1h-1zm2 0h1v1h-1zm3 0h1v1h-1zm-6 1h1v1h-1zm3 0h6v1h-6zm-4 1h1v1h-1zm2 0h1v1h-1zm-3 1h1v1h-1zm4 0h7v1h-7z"/>
<path id="g5f0f" d="M6 0h1v1h-1zm2 0h1v1h-1zm-2 1h1v1h-1zm3 0h1v1h-1zm-3 1h1v1h-1zm-6 1h11v1h-11zm6 1h1v1h-1zm-5 1h4v1h-4zm5 0h1v1h-1zm-3 1h1v1h-1zm3 0h1v1h-1zm-3 1h1v1h-1zm4 0h1v1h-1zm-4 1h1v1h-1zm4 0h1v1h-1zm3 0h1v1h-1zm-7 1h2v1h-2zm5 0h1v1h-1zm2 0h1v1h-1zm-10 1h3v1h-3zm9 0h2v1h-2z"/>
<path id="g5f27" d="M0 0h4v1h-4zm8 0h3v1h-3zm-5 1h1v1h-1zm2 0h3v1h-3zm4 0h1v1h-1zm-6 1h1v1h-1zm2 0h1v1h-1zm2 0h1v1h-1zm2 0h1v1h-1zm-9 1h4v1h-4zm5 0h1v1h-1zm2 0h1v1h-1zm2 0h1v1h-1zm-9 1h1v1h-1zm5 0h1v1h-1zm2 0h1v1h-1zm2 0h1v1h-1zm-9 1h1v1h-1zm5 0h1v1h-1zm2 0h1v1h-1zm2 0h1v1h-1zm-9 1h4v1h-4zm5 0h1v1h-1zm2 0h1v1h-1zm2 0h1v1h-1zm-6 1h1v1h-1zm2 0h1v1h-1zm2 0h1v1h-1zm3 0h1v1h-1zm-7 1h1v1h-1zm2 0h1v1h-1zm2 0h2v1h-2zm3 0h1v1h-1zm-10 1h1v1h-1zm2 0h1v1h-1zm2 0h1v1h-1zm3 0h1v1h-1zm2 0h2v1h-2zm-8 1h1v1h-1zm3 0h1v1h-1zm2 0h1v1h-1zm4 0h1v1h-1z"/>
<path id="g5f2f" d="M5 0h1v1h-1zm-5 1h11v1h-11zm2 1h1v1h-1zm2 0h1v1h-1zm3 0h1v1h-1zm2 0h1v1h-1zm-8 1h1v1h-1zm3 0h1v1h-1zm3 0h1v1h-1zm3 0h1v1h-1zm-10 1h1v1h-1zm2 0h8v1h-8zm7 1h1v1h-1zm-8 1h8v1h-8zm0 1h1v1h-1zm0 1h9v1h-9zm8 1h1v1h-1zm-3 1h3v1h-3z"/>
<path id="g5f62" d="M1 0h6v1h-6zm9 0h1v1h-1zm-8 1h1v1h-1zm3 0h1v1h-1zm4 0h1v1h-1zm-7 1h1v1h-1zm3 0h1v1h-1zm3 0h1v1h-1zm-6 1h1v1h-1zm3 0h1v1h-1zm5 0h1v1h-1zm-10 1h7v1h-7zm9 0h1v1h-1zm-7 1h1v1h-1zm3 0h1v1h-1zm3 0h1v1h-1zm-6 1h1v1h-1zm3 0h1v1h-1zm2 0h1v1h-1zm-5 1h1v1h-1zm3 0h1v1h-1zm5 0h1v1h-1zm-8 1h1v1h-1zm3 0h1v1h-1zm4 0h1v1h-1zm-8 1h1v1h-1zm4 0h1v1h-1zm3 0h1v1h-1zm-8 1h1v1h-1zm5 0h3v1h-3z"/>
<path id="g5f84" d="M3 0h1v1h-1zm2 0h5v1h-5zm-3 1h1v1h-1zm6 0h1v1h-1zm-7 1h1v1h-1zm3 0h1v1h-1zm3 0h1v1h-1zm-7 1h1v1h-1zm3 0h1v1h-1zm3 0h1v1h-1zm2 0h1v1h-1zm-6 1h1v1h-1zm3 0h1v1h-1zm4 0h1v1h-1zm-8 1h2v1h-2zm3 0h1v1h-1zm6 0h1v1h-1zm-10 1h1v1h-1zm2 0h1v1h-1zm3 0h5v1h-5zm-3 1h1v1h-1zm5 0h1v1h-1zm-5 1h1v1h-1zm5 0h1v1h-1zm-5 1h1v1h-1zm5 0h1v1h-1zm-5 1h1v1h-1zm2 0h7v1h-7z"/>
<path id="g6001" d="M5 0h1v1h-1zm-5 1h11v1h-11zm5 1h1v1h-1zm-1 1h1v1h-1zm2 0h1v1h-1zm-4 1h3v1h-3zm5 0h2v1h-2zm-7 1h2v1h-2zm5 0h1v1h-1zm4 0h2v1h-2zm-6 2h1v1h-1zm2 0h1v1h-1zm4 0h1v1h-1zm-8 1h1v1h-1zm2 0h1v1h-1zm3 0h1v1h-1zm2 0h1v1h-1zm2 0h1v1h-1zm-9 1h1v1h-1zm2 0h1v1h-1zm5 0h1v1h-1zm2 0h1v1h-1zm-10 1h1v1h-1zm4 0h5v1h-5z"/>
<path id="g6027" d="M2 0h1v1h-1zm5 0h1v1h-1zm-5 1h1v1h-1zm3 0h1v1h-1zm2 0h1v1h-1zm-7 1h1v1h-1zm2 0h2v1h-2zm3 0h1v1h-1zm2 0h1v1h-1zm-7 1h1v1h-1zm2 0h1v1h-1zm2 0h7v1h-7zm-4 1h1v1h-1zm2 0h1v1h-1zm2 0h1v1h-1zm3 0h1v1h-1zm-7 1h1v1h-1zm2 0h2v1h-2zm5 0h1v1h-1zm-5 1h1v1h-1zm3 0h5v1h-5zm-3 1h1v1h-1zm5 0h1v1h-1zm-5 1h1v1h-1zm5 0h1v1h-1zm-5 1h1v1h-1zm5 0h1v1h-1zm-5 1h1v1h-1zm2 0h7v1h-7z"/>
<path id="g603b" d="M3 0h1v1h-1zm4 0h1v1h-1zm-3 1h1v1h-1zm2 0h1v1h-1zm-4 1h7v1h-7zm0 1h1v1h-1zm6 0h1v1h-1zm-6 1h1v1h-1zm6 0h1v1h-1zm-6 1h7v1h-7zm0 1h1v1h-1zm6 0h1v1h-1zm-3 1h1v1h-1zm4 0h1v1h-1zm-8 1h1v1h-1zm2 0h1v1h-1zm3 0h1v1h-1zm2 0h1v1h-1zm2 0h1v1h-1zm-9 1h1v1h-1zm2 0h1v1h-1zm5 0h1v1h-1zm2 0h1v1h-1zm-10 1h1v1h-1zm4 0h5v1h-5z"/>
<path id="g606f" d="M4 0h1v1h-1zm-2 1h7v1h-7zm0 1h1v1h-1zm6 0h1v1h-1zm-6 1h7v1h-7zm0 1h1v1h-1zm6 0h1v1h-1zm-6 1h7v1h-7zm0 1h1v1h-1zm6 0h1v1h-1zm-6 1h7v1h-7zm-1 1h1v1h-1zm2 0h1v1h-1zm2 0h1v1h-1zm4 0h1v1h-1zm-8 1h1v1h-1zm2 0h1v1h-1zm3 0h1v1h-1zm2 0h1v1h-1zm2 0h1v1h-1zm-10 1h1v1h-1zm4 0h5v1h-5z"/>
<path id="g6210" d="M6 0h1v1h-1zm2 0h1v1h-1zm-2 1h1v1h-1zm3 0h1v1h-1zm-8 1h10v1h-10zm0 1h1v1h-1zm5 0h1v1h-1zm-5 1h1v1h-1zm5 0h1v1h-1zm-5 1h4v1h-4zm5 0h1v1h-1zm3 0h1v1h-1zm-8 1h1v1h-1zm3 0h1v1h-1zm2 0h1v1h-1zm3 0h1v1h-1zm-8 1h1v1h-1zm3 0h1v1h-1zm2 0h1v1h-1zm2 0h1v1h-1zm-7 1h1v1h-1zm3 0h1v1h-1zm3 0h1v1h-1zm3 0h1v1h-1zm-9 1h1v1h-1zm2 0h1v1h-1zm3 0h1v1h-1zm2 0h1v1h-1zm2 0h1v1h-1zm-10 1h1v1h-1zm5 0h1v1h-1zm4 0h2v1h-2z"/>
<path id="g622a" d="M3 0h1v1h-1zm4 0h1v1h-1zm2 0h1v1h-1zm-8 1h5v1h-5zm6 0h1v1h-1zm3 0h1v1h-1zm-7 1h1v1h-1zm4 0h1v1h-1zm-7 1h11v1h-11zm2 1h1v1h-1zm2 0h1v1h-1zm3 0h1v1h-1zm-6 1h5v1h-5zm6 0h1v1h-1zm3 0h1v1h-1zm-10 1h2v1h-2zm4 0h1v1h-1zm3 0h1v1h-1zm3 0h1v1h-1zm-9 1h5v1h-5zm6 0h1v1h-1zm2 0h1v1h-1zm-8 1h1v1h-1zm3 0h1v1h-1zm4 0h1v1h-1zm-7 1h5v1h-5zm6 0h2v1h-2zm3 0h1v1h-1zm-9 1h1v1h-1zm5 0h1v1h-1zm3 0h2v1h-2z"/>
<path id="g6240" d="M3 0h2v1h-2zm6 0h2v1h-2zm-8 1h2v1h-2zm5 0h3v1h-3zm-5 1h1v1h-1zm5 0h1v1h-1zm-5 1h4v1h-4zm5 0h1v1h-1zm-5 1h1v1h-1zm3 0h1v1h-1zm2 0h5v1h-5zm-5 1h1v1h-1zm3 0h1v1h-1zm2 0h1v1h-1zm3 0h1v1h-1zm-8 1h4v1h-4zm5 0h1v1h-1zm3 0h1v1h-1zm-8 1h1v1h-1zm5 0h1v1h-1zm3 0h1v1h-1zm-8 1h1v1h-1zm5 0h1v1h-1zm3 0h1v1h-1zm-8 1h1v1h-1zm4 0h1v1h-1zm4 0h1v1h-1zm-9 1h1v1h-1zm4 0h1v1h-1zm5 0h1v1h-1z"/>
<path id="g6253" d="M2 0h1v1h-1zm0 1h1v1h-1zm3 0h6v1h-6zm-5 1h5v1h-5zm8 0h1v1h-1zm-6 1h1v1h-1zm6 0h1v1h-1zm-6 1h1v1h-1zm2 0h1v1h-1zm4 0h1v1h-1zm-6 1h2v1h-2zm6 0h1v1h-1zm-7 1h2v1h-2zm7 0h1v1h-1zm-8 1h1v1h-1zm2 0h1v1h-1zm6 0h1v1h-1zm-6 1h1v1h-1zm6 0h1v1h-1zm-6 1h1v1h-1zm6 0h1v1h-1zm-8 1h3v1h-3zm6 0h3v1h-3z"/>
<path id="g6279" d="M2 0h1v1h-1zm3 0h1v1h-1zm3 0h1v1h-1zm-6 1h1v1h-1zm3 0h1v1h-1zm3 0h1v1h-1zm-8 1h6v1h-6zm8 0h1v1h-1zm-6 1h1v1h-1zm3 0h1v1h-1zm3 0h1v1h-1zm2 0h1v1h-1zm-8 1h1v1h-1zm2 0h6v1h-6zm-2 1h2v1h-2zm3 0h1v1h-1zm3 0h1v1h-1zm-7 1h2v1h-2zm4 0h1v1h-1zm3 0h1v1h-1zm-8 1h1v1h-1zm2 0h1v1h-1zm3 0h1v1h-1zm3 0h1v1h-1zm-6 1h1v1h-1zm3 0h1v1h-1zm2 0h2v1h-2zm3 0h1v1h-1zm-8 1h1v1h-1zm3 0h2v1h-2zm3 0h1v1h-1zm2 0h1v1h-1zm-10 1h3v1h-3zm5 0h1v1h-1zm4 0h2v1h-2z"/>
<path id="g627e" d="M2 0h1v1h-1zm4 0h1v1h-1zm2 0h1v1h-1zm-6 1h1v1h-1zm4 0h1v1h-1zm3 0h1v1h-1zm-9 1h11v1h-11zm2 1h1v1h-1zm4 0h1v1h-1zm-4 1h1v1h-1zm2 0h1v1h-1zm2 0h1v1h-1zm3 0h1v1h-1zm-7 1h2v1h-2zm4 0h1v1h-1zm3 0h1v1h-1zm-8 1h2v1h-2zm5 0h1v1h-1zm2 0h1v1h-1zm-8 1h1v1h-1zm2 0h1v1h-1zm5 0h1v1h-1zm-5 1h1v1h-1zm4 0h2v1h-2zm4 0h1v1h-1zm-8 1h1v1h-1zm3 0h1v1h-1zm3 0h1v1h-1zm2 0h1v1h-1zm-10 1h3v1h-3zm4 0h1v1h-1zm5 0h2v1h-2z"/>
<path id="g6298" d="M2 0h1v1h-1zm7 0h2v1h-2zm-7 1h1v1h-1zm4 0h3v1h-3zm-6 1h5v1h-5zm6 0h1v1h-1zm-4 1h1v1h-1zm4 0h1v1h-1zm-4 1h1v1h-1zm4 0h5v1h-5zm-4 1h3v1h-3zm4 0h1v1h-1zm3 0h1v1h-1zm-8 1h2v1h-2zm5 0h1v1h-1zm3 0h1v1h-1zm-9 1h1v1h-1zm2 0h1v1h-1zm4 0h1v1h-1zm3 0h1v1h-1zm-7 1h1v1h-1zm4 0h1v1h-1zm3 0h1v1h-1zm-7 1h1v1h-1zm3 0h1v1h-1zm4 0h1v1h-1zm-9 1h3v1h-3zm4 0h1v1h-1zm5 0h1v1h-1z"/>
<path id="g62a4" d="M2 0h1v1h-1zm5 0h1v1h-1zm-5 1h1v1h-1zm6 0h1v1h-1zm-8 1h4v1h-4zm5 0h6v1h-6zm-3 1h1v1h-1zm3 0h1v1h-1zm5 0h1v1h-1zm-8 1h1v1h-1zm3 0h1v1h-1zm5 0h1v1h-1zm-8 1h2v1h-2zm3 0h6v1h-6zm-4 1h2v1h-2zm4 0h1v1h-1zm-5 1h1v1h-1zm2 0h1v1h-1zm3 0h1v1h-1zm-3 1h1v1h-1zm3 0h1v1h-1zm-3 1h1v1h-1zm2 0h1v1h-1zm-4 1h4v1h-4z"/>
<path id="g62c9" d="M2 0h1v1h-1zm4 0h1v1h-1zm-4 1h1v1h-1zm5 0h1v1h-1zm-7 1h11v1h-11zm2 1h1v1h-1zm0 1h1v1h-1zm7 0h1v1h-1zm-7 1h2v1h-2zm3 0h1v1h-1zm4 0h1v1h-1zm-8 1h2v1h-2zm5 0h1v1h-1zm3 0h1v1h-1zm-9 1h1v1h-1zm2 0h1v1h-1zm4 0h1v1h-1zm2 0h1v1h-1zm-6 1h1v1h-1zm6 0h1v1h-1zm-6 1h1v1h-1zm5 0h1v1h-1zm-7 1h3v1h-3zm4 0h7v1h-7z"/>
<path id="g62e9" d="M2 0h1v1h-1zm2 0h7v1h-7zm-2 1h1v1h-1zm4 0h1v1h-1zm3 0h1v1h-1zm-9 1h5v1h-5zm7 0h2v1h-2zm-5 1h1v1h-1zm4 0h1v1h-1zm3 0h1v1h-1zm-7 1h1v1h-1zm2 0h2v1h-2zm6 0h1v1h-1zm-8 1h2v1h-2zm5 0h1v1h-1zm-6 1h2v1h-2zm4 0h5v1h-5zm-5 1h1v1h-1zm2 0h1v1h-1zm5 0h1v1h-1zm-5 1h1v1h-1zm2 0h7v1h-7zm-2 1h1v1h-1zm5 0h1v1h-1zm-7 1h3v1h-3zm7 0h1v1h-1z"/>
<path id="g62fe" d="M2 0h1v1h-1zm5 0h1v1h-1zm-5 1h1v1h-1zm5 0h1v1h-1zm-7 1h5v1h-5zm6 0h1v1h-1zm2 0h1v1h-1zm-6 1h1v1h-1zm3 0h1v1h-1zm4 0h1v1h-1zm-7 1h1v1h-1zm2 0h1v1h-1zm2 0h3v1h-3zm4 0h1v1h-1zm-8 1h2v1h-2zm-1 1h2v1h-2zm4 0h5v1h-5zm-5 1h1v1h-1zm2 0h1v1h-1zm3 0h1v1h-1zm4 0h1v1h-1zm-7 1h1v1h-1zm3 0h1v1h-1zm4 0h1v1h-1zm-7 1h1v1h-1zm3 0h5v1h-5zm-5 1h3v1h-3zm5 0h1v1h-1zm4 0h1v1h-1z"/>
<path id="g6309" d="M2 0h1v1h-1zm5 0h1v1h-1zm-5 1h1v1h-1zm6 0h1v1h-1zm-8 1h11v1h-11zm2 1h1v1h-1zm3 0h1v1h-1zm2 0h1v1h-1zm3 0h1v1h-1zm-8 1h1v1h-1zm2 0h1v1h-1zm3 0h1v1h-1zm-5 1h2v1h-2zm3 0h6v1h-6zm-4 1h2v1h-2zm5 0h1v1h-1zm3 0h1v1h-1zm-9 1h1v1h-1zm2 0h1v1h-1zm3 0h2v1h-2zm4 0h1v1h-1zm-7 1h1v1h-1zm5 0h2v1h-2zm-5 1h1v1h-1zm4 0h1v1h-1zm2 0h1v1h-1zm-8 1h3v1h-3zm4 0h2v1h-2zm5 0h2v1h-2z"/>
<path id="g6349" d="M2 0h1v1h-1zm3 0h5v1h-5zm-3 1h1v1h-1zm3 0h1v1h-1zm4 0h1v1h-1zm-9 1h6v1h-6zm9 0h1v1h-1zm-7 1h1v1h-1zm3 0h1v1h-1zm4 0h1v1h-1zm-7 1h1v1h-1zm2 0h6v1h-6zm-2 1h2v1h-2zm5 0h1v1h-1zm-6 1h2v1h-2zm4 0h1v1h-1zm2 0h1v1h-1zm-7 1h1v1h-1zm2 0h1v1h-1zm3 0h1v1h-1zm2 0h4v1h-4zm-5 1h1v1h-1zm3 0h1v1h-1zm2 0h1v1h-1zm-5 1h1v1h-1zm2 0h1v1h-1zm2 0h2v1h-2zm-6 1h4v1h-4zm7 0h4v1h-4z"/>
<path id="g6355" d="M2 0h1v1h-1zm5 0h1v1h-1zm2 0h1v1h-1zm-7 1h1v1h-1zm5 0h1v1h-1zm3 0h1v1h-1zm-10 1h11v1h-11zm2 1h1v1h-1zm5 0h1v1h-1zm-5 1h1v1h-1zm2 0h7v1h-7zm-2 1h3v1h-3zm5 0h1v1h-1zm3 0h1v1h-1zm-9 1h2v1h-2zm3 0h7v1h-7zm-4 1h1v1h-1zm2 0h1v1h-1zm2 0h1v1h-1zm3 0h1v1h-1zm3 0h1v1h-1zm-8 1h1v1h-1zm2 0h7v1h-7zm-2 1h1v1h-1zm2 0h1v1h-1zm3 0h1v1h-1zm3 0h1v1h-1zm-10 1h3v1h-3zm4 0h1v1h-1zm3 0h1v1h-1zm2 0h2v1h-2z"/>
<path id="g635f" d="M2 0h1v1h-1zm4 0h4v1h-4zm-4 1h1v1h-1zm4 0h1v1h-1zm3 0h1v1h-1zm-9 1h5v1h-5zm6 0h4v1h-4zm-4 1h1v1h-1zm0 1h1v1h-1zm2 0h7v1h-7zm-2 1h2v1h-2zm3 0h1v1h-1zm5 0h1v1h-1zm-9 1h2v1h-2zm4 0h1v1h-1zm2 0h1v1h-1zm3 0h1v1h-1zm-10 1h1v1h-1zm2 0h1v1h-1zm3 0h1v1h-1zm2 0h1v1h-1zm3 0h1v1h-1zm-8 1h1v1h-1zm3 0h1v1h-1zm2 0h1v1h-1zm3 0h1v1h-1zm-8 1h1v1h-1zm4 0h1v1h-1zm2 0h1v1h-1zm-8 1h3v1h-3zm4 0h2v1h-2zm5 0h2v1h-2z"/>
<path id="g63a5" d="M2 0h1v1h-1zm5 0h1v1h-1zm-5 1h1v1h-1zm2 0h7v1h-7zm-4 1h4v1h-4zm5 0h1v1h-1zm4 0h1v1h-1zm-7 1h1v1h-1zm4 0h1v1h-1zm2 0h1v1h-1zm-6 1h1v1h-1zm2 0h7v1h-7zm-2 1h2v1h-2zm5 0h1v1h-1zm-6 1h2v1h-2zm3 0h7v1h-7zm-4 1h1v1h-1zm2 0h1v1h-1zm4 0h1v1h-1zm3 0h1v1h-1zm-7 1h1v1h-1zm3 0h2v1h-2zm3 0h1v1h-1zm-6 1h1v1h-1zm5 0h1v1h-1zm2 0h1v1h-1zm-9 1h3v1h-3zm4 0h3v1h-3zm6 0h1v1h-1z"/>
<path id="g63cf" d="M2 0h1v1h-1zm4 0h1v1h-1zm2 0h1v1h-1zm-6 1h1v1h-1zm2 0h7v1h-7zm-4 1h4v1h-4zm6 0h1v1h-1zm2 0h1v1h-1zm-6 1h1v1h-1zm0 1h1v1h-1zm3 0h6v1h-6zm-3 1h2v1h-2zm3 0h1v1h-1zm2 0h1v1h-1zm3 0h1v1h-1zm-9 1h2v1h-2zm4 0h1v1h-1zm2 0h1v1h-1zm3 0h1v1h-1zm-10 1h1v1h-1zm2 0h1v1h-1zm3 0h6v1h-6zm-3 1h1v1h-1zm3 0h1v1h-1zm2 0h1v1h-1zm3 0h1v1h-1zm-8 1h1v1h-1zm3 0h6v1h-6zm-5 1h3v1h-3zm5 0h1v1h-1zm5 0h1v1h-1z"/>
<path id="g63d2" d="M2 0h1v1h-1zm6 0h2v1h-2zm-6 1h1v1h-1zm3 0h3v1h-3zm-5 1h4v1h-4zm7 0h1v1h-1zm-5 1h1v1h-1zm2 0h7v1h-7zm-2 1h1v1h-1zm5 0h1v1h-1zm-5 1h2v1h-2zm3 0h1v1h-1zm2 0h1v1h-1zm2 0h2v1h-2zm-8 1h2v1h-2zm3 0h1v1h-1zm3 0h1v1h-1zm3 0h1v1h-1zm-10 1h1v1h-1zm2 0h1v1h-1zm2 0h2v1h-2zm3 0h1v1h-1zm2 0h2v1h-2zm-7 1h1v1h-1zm2 0h1v1h-1zm3 0h1v1h-1zm3 0h1v1h-1zm-8 1h1v1h-1zm2 0h1v1h-1zm3 0h1v1h-1zm3 0h1v1h-1zm-10 1h3v1h-3zm4 0h7v1h-7z"/>
<path id="g642d" d="M2 0h1v1h-1zm4 0h1v1h-1zm2 0h1v1h-1zm-6 1h1v1h-1zm2 0h7v1h-7zm-4 1h4v1h-4zm6 0h1v1h-1zm2 0h1v1h-1zm-6 1h1v1h-1zm5 0h1v1h-1zm-5 1h1v1h-1zm4 0h1v1h-1zm2 0h1v1h-1zm-6 1h2v1h-2zm3 0h1v1h-1zm4 0h1v1h-1zm-9 1h3v1h-3zm4 0h1v1h-1zm2 0h3v1h-3zm4 0h1v1h-1zm-8 1h1v1h-1zm0 1h1v1h-1zm3 0h5v1h-5zm-5 1h1v1h-1zm2 0h1v1h-1zm3 0h1v1h-1zm4 0h1v1h-1zm-8 1h1v1h-1zm4 0h5v1h-5z"/>
<path id="g6570" d="M0 0h1v1h-1zm3 0h1v1h-1zm2 0h1v1h-1zm2 0h1v1h-1zm-6 1h1v1h-1zm2 0h2v1h-2zm4 0h1v1h-1zm-7 1h6v1h-6zm7 0h4v1h-4zm-5 1h2v1h-2zm4 0h2v1h-2zm3 0h1v1h-1zm-8 1h1v1h-1zm2 0h2v1h-2zm4 0h1v1h-1zm2 0h1v1h-1zm-9 1h1v1h-1zm3 0h1v1h-1zm2 0h1v1h-1zm2 0h1v1h-1zm2 0h1v1h-1zm-9 1h6v1h-6zm7 0h1v1h-1zm2 0h1v1h-1zm-7 1h1v1h-1zm2 0h1v1h-1zm3 0h1v1h-1zm2 0h1v1h-1zm-8 1h2v1h-2zm3 0h1v1h-1zm4 0h1v1h-1zm-5 1h1v1h-1zm4 0h1v1h-1zm2 0h1v1h-1zm-9 1h3v1h-3zm4 0h3v1h-3zm6 0h1v1h-1z"/>
<path id="g65ad" d="M3 0h1v1h-1zm6 0h2v1h-2zm-9 1h2v1h-2zm3 0h1v1h-1zm2 0h1v1h-1zm2 0h2v1h-2zm-7 1h1v1h-1zm2 0h3v1h-3zm5 0h1v1h-1zm-7 1h1v1h-1zm3 0h1v1h-1zm4 0h1v1h-1zm-7 1h6v1h-6zm7 0h4v1h-4zm-7 1h1v1h-1zm2 0h2v1h-2zm5 0h1v1h-1zm2 0h1v1h-1zm-9 1h2v1h-2zm3 0h2v1h-2zm4 0h1v1h-1zm2 0h1v1h-1zm-9 1h2v1h-2zm3 0h1v1h-1zm2 0h1v1h-1zm2 0h1v1h-1zm2 0h1v1h-1zm-9 1h1v1h-1zm3 0h1v1h-1zm4 0h1v1h-1zm2 0h1v1h-1zm-9 1h5v1h-5zm6 0h1v1h-1zm3 0h1v1h-1zm-4 1h1v1h-1zm4 0h1v1h-1z"/>
<path id="g65cb" d="M1 0h1v1h-1zm5 0h1v1h-1zm-4 1h1v1h-1zm4 0h5v1h-5zm-6 1h6v1h-6zm1 1h1v1h-1zm4 0h6v1h-6zm-4 1h4v1h-4zm7 0h1v1h-1zm2 0h1v1h-1zm-9 1h1v1h-1zm3 0h1v1h-1zm2 0h1v1h-1zm2 0h1v1h-1zm-7 1h1v1h-1zm3 0h1v1h-1zm2 0h1v1h-1zm2 0h3v1h-3zm-7 1h1v1h-1zm3 0h1v1h-1zm2 0h1v1h-1zm2 0h1v1h-1zm-7 1h1v1h-1zm3 0h1v1h-1zm2 0h1v1h-1zm2 0h1v1h-1zm-8 1h1v1h-1zm2 0h1v1h-1zm2 0h2v1h-2zm3 0h2v1h-2zm-7 1h1v1h-1zm3 0h1v1h-1zm5 0h3v1h-3z"/>
<path id="g6709" d="M4 0h1v1h-1zm-4 1h11v1h-11zm3 1h1v1h-1zm0 1h6v1h-6zm-1 1h2v1h-2zm6 0h1v1h-1zm-7 1h1v1h-1zm2 0h6v1h-6zm-3 1h1v1h-1zm3 0h1v1h-1zm5 0h1v1h-1zm-5 1h6v1h-6zm0 1h1v1h-1zm5 0h1v1h-1zm-5 1h1v1h-1zm5 0h1v1h-1zm-5 1h1v1h-1zm4 0h2v1h-2z"/>
<path id="g677f" d="M2 0h1v1h-1zm6 0h2v1h-2zm-6 1h1v1h-1zm3 0h3v1h-3zm-5 1h6v1h-6zm2 1h1v1h-1zm3 0h1v1h-1zm-3 1h1v1h-1zm3 0h5v1h-5zm-4 1h3v1h-3zm4 0h1v1h-1zm4 0h1v1h-1zm-8 1h2v1h-2zm3 0h3v1h-3zm5 0h1v1h-1zm-9 1h1v1h-1zm2 0h1v1h-1zm3 0h1v1h-1zm2 0h2v1h-2zm-5 1h1v1h-1zm2 0h1v1h-1zm4 0h1v1h-1zm-6 1h1v1h-1zm2 0h1v1h-1zm3 0h1v1h-1zm2 0h1v1h-1zm-7 1h2v1h-2zm3 0h2v1h-2zm5 0h1v1h-1z"/>
<path id="g6784" d="M2 0h1v1h-1zm4 0h1v1h-1zm-4 1h1v1h-1zm4 0h1v1h-1zm-6 1h5v1h-5zm6 0h5v1h-5zm-4 1h1v1h-1zm3 0h1v1h-1zm5 0h1v1h-1zm-8 1h1v1h-1zm4 0h1v1h-1zm4 0h1v1h-1zm-9 1h3v1h-3zm5 0h1v1h-1zm4 0h1v1h-1zm-9 1h2v1h-2zm3 0h2v1h-2zm4 0h1v1h-1zm2 0h1v1h-1zm-10 1h1v1h-1zm2 0h1v1h-1zm3 0h4v1h-4zm5 0h1v1h-1zm-8 1h1v1h-1zm6 0h1v1h-1zm2 0h1v1h-1zm-8 1h1v1h-1zm8 0h1v1h-1zm-8 1h1v1h-1zm6 0h2v1h-2z"/>
<path id="g67e5" d="M5 0h1v1h-1zm-5 1h11v1h-11zm3 1h1v1h-1zm2 0h1v1h-1zm2 0h1v1h-1zm-5 1h1v1h-1zm3 0h1v1h-1zm3 0h1v1h-1zm-8 1h11v1h-11zm2 1h1v1h-1zm6 0h1v1h-1zm-6 1h7v1h-7zm0 1h1v1h-1zm6 0h1v1h-1zm-6 1h7v1h-7zm-2 2h11v1h-11z"/>
<path id="g6807" d="M2 0h1v1h-1zm3 0h5v1h-5zm-3 1h1v1h-1zm-2 1h5v1h-5zm2 1h1v1h-1zm2 0h7v1h-7zm-2 1h1v1h-1zm5 0h1v1h-1zm-6 1h3v1h-3zm6 0h1v1h-1zm-6 1h2v1h-2zm4 0h1v1h-1zm2 0h1v1h-1zm2 0h1v1h-1zm-9 1h1v1h-1zm2 0h1v1h-1zm3 0h1v1h-1zm2 0h1v1h-1zm3 0h1v1h-1zm-8 1h1v1h-1zm2 0h1v1h-1zm3 0h1v1h-1zm3 0h1v1h-1zm-8 1h1v1h-1zm5 0h1v1h-1zm-5 1h1v1h-1zm4 0h2v1h-2z"/>
<path id="g6839" d="M2 0h1v1h-1zm3 0h5v1h-5zm-3 1h1v1h-1zm3 0h1v1h-1zm4 0h1v1h-1zm-9 1h10v1h-10zm2 1h1v1h-1zm3 0h1v1h-1zm4 0h1v1h-1zm-7 1h1v1h-1zm3 0h5v1h-5zm-3 1h2v1h-2zm3 0h1v1h-1zm2 0h1v1h-1zm3 0h1v1h-1zm-9 1h2v1h-2zm3 0h2v1h-2zm3 0h1v1h-1zm2 0h1v1h-1zm-9 1h1v1h-1zm2 0h1v1h-1zm3 0h1v1h-1zm3 0h1v1h-1zm-6 1h1v1h-1zm3 0h1v1h-1zm3 0h1v1h-1zm-6 1h1v1h-1zm3 0h1v1h-1zm2 0h1v1h-1zm2 0h1v1h-1zm-7 1h1v1h-1zm3 0h2v1h-2zm5 0h1v1h-1z"/>
<path id="g6881" d="M1 0h1v1h-1zm2 0h6v1h-6zm-3 1h1v1h-1zm2 0h1v1h-1zm4 0h1v1h-1zm2 0h1v1h-1zm-7 1h1v1h-1zm3 0h1v1h-1zm2 0h1v1h-1zm2 0h2v1h-2zm-6 1h1v1h-1zm2 0h1v1h-1zm2 0h1v1h-1zm2 0h1v1h-1zm2 0h1v1h-1zm-10 1h2v1h-2zm3 0h1v1h-1zm2 0h1v1h-1zm3 0h1v1h-1zm2 0h1v1h-1zm-9 1h1v1h-1zm3 0h1v1h-1zm3 0h2v1h-2zm-6 1h1v1h-1zm2 0h1v1h-1zm2 0h1v1h-1zm-5 1h11v1h-11zm3 1h1v1h-1zm2 0h1v1h-1zm2 0h1v1h-1zm-5 1h1v1h-1zm3 0h1v1h-1zm3 0h1v1h-1zm-8 1h2v1h-2zm5 0h1v1h-1zm4 0h2v1h-2z"/>
<path id="g6b63" d="M0 1h11v1h-11zm5 1h1v1h-1zm0 1h1v1h-1zm-3 1h1v1h-1zm3 0h1v1h-1zm-3 1h1v1h-1zm3 0h5v1h-5zm-3 1h1v1h-1zm3 0h1v1h-1zm-3 1h1v1h-1zm3 0h1v1h-1zm-3 1h1v1h-1zm3 0h1v1h-1zm-3 1h1v1h-1zm3 0h1v1h-1zm-5 1h11v1h-11z"/>
<path id="g6c47" d="M1 0h1v1h-1zm1 1h1v1h-1zm3 0h6v1h-6zm-5 1h1v1h-1zm5 0h1v1h-1zm-4 1h1v1h-1zm2 0h1v1h-1zm2 0h1v1h-1zm-2 1h1v1h-1zm2 0h1v1h-1zm-3 1h1v1h-1zm3 0h1v1h-1zm-3 1h1v1h-1zm3 0h1v1h-1zm-5 1h2v1h-2zm5 0h1v1h-1zm-4 1h1v1h-1zm4 0h1v1h-1zm-4 1h1v1h-1zm4 0h1v1h-1zm-4 1h1v1h-1zm4 0h6v1h-6z"/>
<path id="g6d88" d="M1 0h1v1h-1zm3 0h1v1h-1zm3 0h1v1h-1zm3 0h1v1h-1zm-8 1h1v1h-1zm3 0h1v1h-1zm2 0h1v1h-1zm2 0h1v1h-1zm-9 1h1v1h-1zm7 0h1v1h-1zm-6 1h1v1h-1zm2 0h1v1h-1zm2 0h6v1h-6zm-2 1h1v1h-1zm2 0h1v1h-1zm5 0h1v1h-1zm-8 1h1v1h-1zm3 0h6v1h-6zm-3 1h1v1h-1zm3 0h1v1h-1zm5 0h1v1h-1zm-10 1h2v1h-2zm5 0h6v1h-6zm-4 1h1v1h-1zm4 0h1v1h-1zm5 0h1v1h-1zm-9 1h1v1h-1zm4 0h1v1h-1zm5 0h1v1h-1zm-9 1h1v1h-1zm4 0h1v1h-1zm4 0h2v1h-2z"/>
<path id="g70b9" d="M5 0h1v1h-1zm0 1h1v1h-1zm0 1h5v1h-5zm0 1h1v1h-1zm-3 1h7v1h-7zm0 1h1v1h-1zm6 0h1v1h-1zm-6 1h1v1h-1zm6 0h1v1h-1zm-6 1h7v1h-7zm-1 2h1v1h-1zm2 0h1v1h-1zm3 0h1v1h-1zm3 0h1v1h-1zm-9 1h1v1h-1zm4 0h1v1h-1zm3 0h1v1h-1zm3 0h1v1h-1z"/>
<path id="g751f" d="M6 0h1v1h-1zm-4 1h1v1h-1zm4 0h1v1h-1zm-4 1h1v1h-1zm4 0h1v1h-1zm-4 1h9v1h-9zm-1 1h1v1h-1zm5 0h1v1h-1zm-6 1h1v1h-1zm6 0h1v1h-1zm-3 1h7v1h-7zm3 1h1v1h-1zm0 1h1v1h-1zm0 1h1v1h-1zm-5 1h10v1h-10z"/>
<path id="g753b" d="M0 0h11v1h-11zm2 2h7v1h-7zm-2 1h1v1h-1zm2 0h1v1h-1zm3 0h1v1h-1zm3 0h1v1h-1zm2 0h1v1h-1zm-10 1h1v1h-1zm2 0h1v1h-1zm3 0h1v1h-1zm3 0h1v1h-1zm2 0h1v1h-1zm-10 1h1v1h-1zm2 0h7v1h-7zm8 0h1v1h-1zm-10 1h1v1h-1zm2 0h1v1h-1zm3 0h1v1h-1zm3 0h1v1h-1zm2 0h1v1h-1zm-10 1h1v1h-1zm2 0h1v1h-1zm3 0h1v1h-1zm3 0h1v1h-1zm2 0h1v1h-1zm-10 1h1v1h-1zm2 0h7v1h-7zm8 0h1v1h-1zm-10 1h1v1h-1zm10 0h1v1h-1zm-10 1h11v1h-11z"/>
<path id="g76f4" d="M5 0h1v1h-1zm-5 1h11v1h-11zm5 1h1v1h-1zm-3 1h7v1h-7zm0 1h1v1h-1zm6 0h1v1h-1zm-6 1h7v1h-7zm0 1h1v1h-1zm6 0h1v1h-1zm-6 1h7v1h-7zm0 1h1v1h-1zm6 0h1v1h-1zm-6 1h1v1h-1zm6 0h1v1h-1zm-8 1h11v1h-11z"/>
<path id="g770b" d="M1 0h9v1h-9zm4 1h1v1h-1zm-4 1h8v1h-8zm3 1h1v1h-1zm-4 1h11v1h-11zm3 1h1v1h-1zm5 0h1v1h-1zm-6 1h7v1h-7zm-1 1h1v1h-1zm2 0h1v1h-1zm5 0h1v1h-1zm-8 1h1v1h-1zm3 0h6v1h-6zm0 1h1v1h-1zm5 0h1v1h-1zm-5 1h6v1h-6z"/>
<path id="g77e9" d="M1 0h1v1h-1zm0 1h1v1h-1zm5 0h5v1h-5zm-5 1h6v1h-6zm-1 1h1v1h-1zm3 0h1v1h-1zm3 0h1v1h-1zm-3 1h1v1h-1zm3 0h5v1h-5zm-6 1h7v1h-7zm10 0h1v1h-1zm-7 1h1v1h-1zm3 0h1v1h-1zm4 0h1v1h-1zm-8 1h1v1h-1zm2 0h1v1h-1zm2 0h5v1h-5zm-4 1h1v1h-1zm2 0h1v1h-1zm2 0h1v1h-1zm-5 1h1v1h-1zm3 0h1v1h-1zm2 0h1v1h-1zm-6 1h1v1h-1zm6 0h5v1h-5z"/>
<path id="g7840" d="M8 0h1v1h-1zm-8 1h5v1h-5zm6 0h1v1h-1zm2 0h1v1h-1zm2 0h1v1h-1zm-8 1h1v1h-1zm4 0h1v1h-1zm2 0h1v1h-1zm2 0h1v1h-1zm-8 1h1v1h-1zm4 0h1v1h-1zm2 0h1v1h-1zm2 0h1v1h-1zm-9 1h4v1h-4zm5 0h5v1h-5zm-6 1h2v1h-2zm4 0h1v1h-1zm4 0h1v1h-1zm-7 1h1v1h-1zm3 0h1v1h-1zm2 0h1v1h-1zm2 0h1v1h-1zm2 0h1v1h-1zm-9 1h1v1h-1zm3 0h1v1h-1zm2 0h1v1h-1zm2 0h1v1h-1zm2 0h1v1h-1zm-9 1h4v1h-4zm5 0h1v1h-1zm2 0h1v1h-1zm2 0h1v1h-1zm-9 1h1v1h-1zm3 0h1v1h-1zm2 0h5v1h-5zm0 1h1v1h-1zm4 0h1v1h-1z"/>
<path id="g79fb" d="M3 0h1v1h-1zm4 0h1v1h-1zm-7 1h3v1h-3zm6 0h5v1h-5zm-4 1h1v1h-1zm3 0h1v1h-1zm5 0h1v1h-1zm-10 1h5v1h-5zm6 0h1v1h-1zm3 0h1v1h-1zm-7 1h1v1h-1zm5 0h2v1h-2zm-5 1h2v1h-2zm3 0h2v1h-2zm3 0h1v1h-1zm-6 1h1v1h-1zm2 0h1v1h-1zm3 0h4v1h-4zm-6 1h2v1h-2zm5 0h1v1h-1zm4 0h1v1h-1zm-10 1h1v1h-1zm2 0h1v1h-1zm3 0h1v1h-1zm2 0h1v1h-1zm2 0h1v1h-1zm-7 1h1v1h-1zm6 0h1v1h-1zm-6 1h1v1h-1zm3 0h3v1h-3z"/>
<path id="g7b4b" d="M1 0h1v1h-1zm5 0h1v1h-1zm-5 1h4v1h-4zm5 0h5v1h-5zm-5 1h1v1h-1zm2 0h1v1h-1zm2 0h1v1h-1zm3 0h1v1h-1zm-8 1h1v1h-1zm4 0h1v1h-1zm3 0h1v1h-1zm2 0h1v1h-1zm-8 1h4v1h-4zm6 0h1v1h-1zm-6 1h1v1h-1zm3 0h7v1h-7zm-3 1h4v1h-4zm6 0h1v1h-1zm3 0h1v1h-1zm-9 1h1v1h-1zm3 0h1v1h-1zm3 0h1v1h-1zm3 0h1v1h-1zm-9 1h4v1h-4zm6 0h1v1h-1zm3 0h1v1h-1zm-9 1h1v1h-1zm3 0h1v1h-1zm2 0h1v1h-1zm4 0h1v1h-1zm-10 1h1v1h-1zm3 0h3v1h-3zm5 0h2v1h-2z"/>
<path id="g7b4f" d="M2 0h1v1h-1zm5 0h1v1h-1zm-5 1h3v1h-3zm4 0h5v1h-5zm-5 1h1v1h-1zm3 0h2v1h-2zm5 0h1v1h-1zm-9 1h1v1h-1zm3 0h1v1h-1zm3 0h1v1h-1zm2 0h1v1h-1zm-5 1h1v1h-1zm3 0h1v1h-1zm3 0h1v1h-1zm-7 1h1v1h-1zm4 0h5v1h-5zm-5 1h2v1h-2zm3 0h3v1h-3zm5 0h1v1h-1zm-9 1h1v1h-1zm2 0h1v1h-1zm5 0h2v1h-2zm-5 1h1v1h-1zm5 0h1v1h-1zm3 0h1v1h-1zm-8 1h1v1h-1zm4 0h1v1h-1zm2 0h1v1h-1zm2 0h1v1h-1zm-8 1h1v1h-1zm2 0h2v1h-2zm5 0h2v1h-2z"/>
<path id="g7b97" d="M1 0h4v1h-4zm5 0h5v1h-5zm-5 1h1v1h-1zm2 0h1v1h-1zm3 0h1v1h-1zm3 0h1v1h-1zm-9 1h1v1h-1zm2 0h7v1h-7zm0 1h1v1h-1zm6 0h1v1h-1zm-6 1h7v1h-7zm0 1h1v1h-1zm6 0h1v1h-1zm-6 1h7v1h-7zm1 1h1v1h-1zm4 0h1v1h-1zm-7 1h11v1h-11zm3 1h1v1h-1zm4 0h1v1h-1zm-6 1h2v1h-2zm6 0h1v1h-1z"/>
<path id="g7ea7" d="M2 0h1v1h-1zm2 0h6v1h-6zm-2 1h1v1h-1zm4 0h1v1h-1zm3 0h1v1h-1zm-8 1h1v1h-1zm3 0h1v1h-1zm2 0h1v1h-1zm3 0h1v1h-1zm-8 1h1v1h-1zm2 0h1v1h-1zm3 0h1v1h-1zm2 0h1v1h-1zm-8 1h3v1h-3zm6 0h1v1h-1zm2 0h3v1h-3zm-6 1h1v1h-1zm4 0h1v1h-1zm4 0h1v1h-1zm-9 1h1v1h-1zm5 0h1v1h-1zm4 0h1v1h-1zm-10 1h4v1h-4zm5 0h1v1h-1zm2 0h1v1h-1zm2 0h1v1h-1zm-5 1h2v1h-2zm4 0h1v1h-1zm-6 1h2v1h-2zm3 0h1v1h-1zm2 0h1v1h-1zm2 0h1v1h-1zm-9 1h2v1h-2zm4 0h1v1h-1zm2 0h1v1h-1zm4 0h1v1h-1z"/>
<path id="g7eb5" d="M2 0h1v1h-1zm3 0h1v1h-1zm3 0h1v1h-1zm-6 1h1v1h-1zm3 0h1v1h-1zm3 0h1v1h-1zm-7 1h1v1h-1zm4 0h1v1h-1zm3 0h1v1h-1zm-7 1h1v1h-1zm2 0h1v1h-1zm2 0h1v1h-1zm3 0h1v1h-1zm-8 1h3v1h-3zm5 0h1v1h-1zm3 0h1v1h-1zm-6 1h1v1h-1zm3 0h2v1h-2zm3 0h1v1h-1zm-7 1h1v1h-1zm4 0h1v1h-1zm2 0h2v1h-2zm-7 1h5v1h-5zm8 0h1v1h-1zm-4 1h1v1h-1zm3 0h1v1h-1zm2 0h1v1h-1zm-7 1h2v1h-2zm4 0h1v1h-1zm4 0h1v1h-1zm-10 1h2v1h-2zm5 0h1v1h-1zm5 0h1v1h-1z"/>
<path id="g7ebf" d="M2 0h1v1h-1zm4 0h1v1h-1zm2 0h1v1h-1zm-6 1h1v1h-1zm4 0h1v1h-1zm3 0h1v1h-1zm-8 1h1v1h-1zm5 0h4v1h-4zm-5 1h1v1h-1zm3 0h3v1h-3zm-4 1h3v1h-3zm6 0h5v1h-5zm-4 1h1v1h-1zm2 0h3v1h-3zm-3 1h1v1h-1zm5 0h1v1h-1zm3 0h1v1h-1zm-9 1h4v1h-4zm6 0h1v1h-1zm2 0h1v1h-1zm-4 1h1v1h-1zm3 0h1v1h-1zm3 0h1v1h-1zm-8 1h2v1h-2zm4 0h1v1h-1zm2 0h1v1h-1zm2 0h1v1h-1zm-10 1h2v1h-2zm4 0h2v1h-2zm5 0h2v1h-2z"/>
<path id="g7ef4" d="M2 0h1v1h-1zm4 0h2v1h-2zm-4 1h1v1h-1zm3 0h1v1h-1zm3 0h1v1h-1zm-7 1h1v1h-1zm3 0h7v1h-7zm-3 1h1v1h-1zm2 0h1v1h-1zm2 0h1v1h-1zm3 0h1v1h-1zm-8 1h3v1h-3zm5 0h5v1h-5zm-3 1h1v1h-1zm3 0h1v1h-1zm3 0h1v1h-1zm-7 1h1v1h-1zm4 0h1v1h-1zm3 0h1v1h-1zm-8 1h4v1h-4zm5 0h5v1h-5zm-1 1h2v1h-2zm4 0h1v1h-1zm-6 1h2v1h-2zm3 0h1v1h-1zm3 0h1v1h-1zm-8 1h2v1h-2zm5 0h6v1h-6z"/>
<path id="g7f16" d="M2 0h1v1h-1zm5 0h1v1h-1zm-5 1h1v1h-1zm2 0h7v1h-7zm-3 1h1v1h-1zm3 0h1v1h-1zm6 0h1v1h-1zm-9 1h1v1h-1zm2 0h8v1h-8zm-3 1h3v1h-3zm4 0h1v1h-1zm-2 1h1v1h-1zm2 0h7v1h-7zm-3 1h1v1h-1zm3 0h1v1h-1zm2 0h1v1h-1zm2 0h1v1h-1zm2 0h1v1h-1zm-10 1h11v1h-11zm4 1h1v1h-1zm2 0h1v1h-1zm2 0h1v1h-1zm2 0h1v1h-1zm-8 1h3v1h-3zm4 0h1v1h-1zm2 0h1v1h-1zm2 0h1v1h-1zm-10 1h2v1h-2zm4 0h1v1h-1zm5 0h2v1h-2z"/>
<path id="g7f29" d="M2 0h1v1h-1zm5 0h1v1h-1zm-5 1h1v1h-1zm2 0h7v1h-7zm-3 1h1v1h-1zm3 0h1v1h-1zm2 0h1v1h-1zm4 0h1v1h-1zm-9 1h1v1h-1zm2 0h1v1h-1zm2 0h1v1h-1zm2 0h4v1h-4zm-7 1h3v1h-3zm5 0h1v1h-1zm3 0h1v1h-1zm-6 1h1v1h-1zm2 0h2v1h-2zm3 0h4v1h-4zm-6 1h1v1h-1zm4 0h1v1h-1zm2 0h1v1h-1zm3 0h1v1h-1zm-10 1h4v1h-4zm5 0h1v1h-1zm2 0h4v1h-4zm-3 1h2v1h-2zm3 0h1v1h-1zm3 0h1v1h-1zm-8 1h2v1h-2zm3 0h1v1h-1zm2 0h4v1h-4zm-7 1h2v1h-2zm5 0h1v1h-1zm2 0h1v1h-1zm3 0h1v1h-1z"/>
<path id="g7f6e" d="M1 0h9v1h-9zm0 1h1v1h-1zm3 0h1v1h-1zm2 0h1v1h-1zm3 0h1v1h-1zm-8 1h9v1h-9zm4 1h1v1h-1zm-5 1h11v1h-11zm2 1h1v1h-1zm6 0h1v1h-1zm-6 1h7v1h-7zm0 1h1v1h-1zm6 0h1v1h-1zm-6 1h7v1h-7zm0 1h1v1h-1zm6 0h1v1h-1zm-8 1h11v1h-11z"/>
<path id="g8017" d="M2 0h1v1h-1zm6 0h2v1h-2zm-8 1h8v1h-8zm2 1h1v1h-1zm5 0h1v1h-1zm-7 1h5v1h-5zm7 0h3v1h-3zm-5 1h1v1h-1zm3 0h3v1h-3zm-5 1h5v1h-5zm7 0h1v1h-1zm2 0h2v1h-2zm-7 1h1v1h-1zm3 0h4v1h-4zm-4 1h3v1h-3zm6 0h1v1h-1zm-7 1h1v1h-1zm2 0h1v1h-1zm2 0h1v1h-1zm3 0h1v1h-1zm3 0h1v1h-1zm-8 1h1v1h-1zm5 0h1v1h-1zm3 0h1v1h-1zm-8 1h1v1h-1zm6 0h3v1h-3z"/>
<path id="g81ea" d="M4 0h1v1h-1zm-2 1h7v1h-7zm0 1h1v1h-1zm6 0h1v1h-1zm-6 1h1v1h-1zm6 0h1v1h-1zm-6 1h7v1h-7zm0 1h1v1h-1zm6 0h1v1h-1zm-6 1h7v1h-7zm0 1h1v1h-1zm6 0h1v1h-1zm-6 1h1v1h-1zm6 0h1v1h-1zm-6 1h7v1h-7zm0 1h1v1h-1zm6 0h1v1h-1z"/>
<path id="g884c" d="M2 0h1v1h-1zm3 0h5v1h-5zm-4 1h1v1h-1zm-1 1h1v1h-1zm3 1h1v1h-1zm-1 1h1v1h-1zm2 0h7v1h-7zm-3 1h2v1h-2zm7 0h1v1h-1zm-8 1h1v1h-1zm2 0h1v1h-1zm6 0h1v1h-1zm-6 1h1v1h-1zm6 0h1v1h-1zm-6 1h1v1h-1zm6 0h1v1h-1zm-6 1h1v1h-1zm6 0h1v1h-1zm-6 1h1v1h-1zm4 0h3v1h-3z"/>
<path id="g8868" d="M5 0h1v1h-1zm-4 1h9v1h-9zm4 1h1v1h-1zm-3 1h7v1h-7zm3 1h1v1h-1zm-5 1h11v1h-11zm4 1h1v1h-1zm2 0h1v1h-1zm3 0h1v1h-1zm-6 1h1v1h-1zm3 0h1v1h-1zm2 0h1v1h-1zm-6 1h2v1h-2zm5 0h1v1h-1zm-7 1h2v1h-2zm3 0h1v1h-1zm2 0h1v1h-1zm3 0h1v1h-1zm-5 1h2v1h-2zm6 0h2v1h-2z"/>
<path id="g89c2" d="M5 0h5v1h-5zm-5 1h4v1h-4zm5 0h1v1h-1zm4 0h1v1h-1zm-6 1h1v1h-1zm2 0h1v1h-1zm2 0h1v1h-1zm2 0h1v1h-1zm-9 1h1v1h-1zm3 0h1v1h-1zm2 0h1v1h-1zm2 0h1v1h-1zm2 0h1v1h-1zm-8 1h1v1h-1zm2 0h1v1h-1zm2 0h1v1h-1zm2 0h1v1h-1zm2 0h1v1h-1zm-7 1h1v1h-1zm3 0h1v1h-1zm2 0h1v1h-1zm2 0h1v1h-1zm-7 1h1v1h-1zm3 0h1v1h-1zm2 0h1v1h-1zm2 0h1v1h-1zm-8 1h1v1h-1zm2 0h1v1h-1zm4 0h2v1h-2zm-6 1h1v1h-1zm2 0h1v1h-1zm3 0h1v1h-1zm2 0h1v1h-1zm2 0h1v1h-1zm-10 1h1v1h-1zm5 0h1v1h-1zm3 0h1v1h-1zm2 0h1v1h-1zm-7 1h2v1h-2zm6 0h2v1h-2z"/>
<path id="g89c6" d="M1 0h1v1h-1zm4 0h5v1h-5zm-3 1h1v1h-1zm3 0h1v1h-1zm4 0h1v1h-1zm-9 1h4v1h-4zm5 0h1v1h-1zm2 0h1v1h-1zm2 0h1v1h-1zm-6 1h1v1h-1zm2 0h1v1h-1zm2 0h1v1h-1zm2 0h1v1h-1zm-7 1h1v1h-1zm3 0h1v1h-1zm2 0h1v1h-1zm2 0h1v1h-1zm-8 1h3v1h-3zm4 0h1v1h-1zm2 0h1v1h-1zm2 0h1v1h-1zm-9 1h1v1h-1zm2 0h1v1h-1zm3 0h1v1h-1zm2 0h1v1h-1zm2 0h1v1h-1zm-7 1h1v1h-1zm5 0h1v1h-1zm-5 1h1v1h-1zm4 0h2v1h-2zm4 0h1v1h-1zm-8 1h1v1h-1zm3 0h1v1h-1zm2 0h1v1h-1zm3 0h1v1h-1zm-8 1h1v1h-1zm2 0h1v1h-1zm4 0h3v1h-3z"/>
<path id="g89d2" d="M3 0h1v1h-1zm0 1h5v1h-5zm-1 1h1v1h-1zm4 0h1v1h-1zm-5 1h9v1h-9zm-1 1h1v1h-1zm2 0h1v1h-1zm3 0h1v1h-1zm4 0h1v1h-1zm-7 1h8v1h-8zm0 1h1v1h-1zm3 0h1v1h-1zm4 0h1v1h-1zm-7 1h8v1h-8zm0 1h1v1h-1zm3 0h1v1h-1zm4 0h1v1h-1zm-8 1h1v1h-1zm4 0h1v1h-1zm2 0h1v1h-1zm2 0h1v1h-1zm-9 1h1v1h-1zm8 0h1v1h-1z"/>
<path id="g89e3" d="M2 0h1v1h-1zm4 0h5v1h-5zm-5 1h4v1h-4zm6 0h1v1h-1zm3 0h1v1h-1zm-9 1h1v1h-1zm2 0h1v1h-1zm3 0h1v1h-1zm4 0h1v1h-1zm-10 1h6v1h-6zm8 0h2v1h-2zm-7 1h1v1h-1zm2 0h1v1h-1zm2 0h2v1h-2zm3 0h1v1h-1zm-7 1h10v1h-10zm0 1h1v1h-1zm2 0h1v1h-1zm2 0h1v1h-1zm3 0h1v1h-1zm-7 1h10v1h-10zm0 1h1v1h-1zm2 0h1v1h-1zm2 0h1v1h-1zm3 0h1v1h-1zm-7 1h1v1h-1zm2 0h1v1h-1zm2 0h1v1h-1zm3 0h1v1h-1zm-8 1h1v1h-1zm4 0h2v1h-2zm4 0h1v1h-1z"/>
<path id="g8ba1" d="M1 0h1v1h-1zm6 0h1v1h-1zm-5 1h1v1h-1zm5 0h1v1h-1zm0 1h1v1h-1zm-3 1h7v1h-7zm-4 1h3v1h-3zm7 0h1v1h-1zm-5 1h1v1h-1zm5 0h1v1h-1zm-5 1h1v1h-1zm5 0h1v1h-1zm-5 1h1v1h-1zm2 0h1v1h-1zm3 0h1v1h-1zm-5 1h2v1h-2zm5 0h1v1h-1zm-5 1h1v1h-1zm5 0h1v1h-1zm0 1h1v1h-1z"/>
<path id="g8bbe" d="M1 0h1v1h-1zm4 0h4v1h-4zm-3 1h1v1h-1zm3 0h1v1h-1zm3 0h1v1h-1zm-3 1h1v1h-1zm3 0h1v1h-1zm-4 1h1v1h-1zm4 0h3v1h-3zm-8 1h3v1h-3zm2 1h1v1h-1zm2 0h6v1h-6zm-2 1h1v1h-1zm3 0h1v1h-1zm4 0h1v1h-1zm-7 1h1v1h-1zm4 0h1v1h-1zm2 0h1v1h-1zm-6 1h2v1h-2zm5 0h1v1h-1zm-5 1h1v1h-1zm4 0h1v1h-1zm2 0h1v1h-1zm-5 1h3v1h-3zm6 0h2v1h-2z"/>
<path id="g8c61" d="M3 0h5v1h-5zm-1 1h1v1h-1zm4 0h1v1h-1zm-5 1h9v1h-9zm-1 1h1v1h-1zm2 0h1v1h-1zm3 0h1v1h-1zm4 0h1v1h-1zm-7 1h8v1h-8zm1 1h1v1h-1zm2 0h1v1h-1zm4 0h1v1h-1zm-8 1h2v1h-2zm3 0h3v1h-3zm4 0h1v1h-1zm-5 1h1v1h-1zm3 0h2v1h-2zm-5 1h2v1h-2zm4 0h2v1h-2zm3 0h1v1h-1zm-5 1h2v1h-2zm3 0h1v1h-1zm3 0h2v1h-2zm-9 1h3v1h-3zm5 0h2v1h-2z"/>
<path id="g8f6c" d="M2 0h1v1h-1zm5 0h1v1h-1zm-7 1h4v1h-4zm5 0h5v1h-5zm-4 1h1v1h-1zm6 0h1v1h-1zm-6 1h2v1h-2zm3 0h7v1h-7zm-4 1h1v1h-1zm2 0h1v1h-1zm4 0h1v1h-1zm-6 1h4v1h-4zm5 0h5v1h-5zm-3 1h1v1h-1zm7 0h1v1h-1zm-7 1h3v1h-3zm4 0h1v1h-1zm2 0h1v1h-1zm-8 1h3v1h-3zm7 0h1v1h-1zm-5 1h1v1h-1zm6 0h1v1h-1zm-6 1h1v1h-1zm6 0h1v1h-1z"/>
<path id="g8f74" d="M2 0h1v1h-1zm6 0h1v1h-1zm-8 1h5v1h-5zm8 0h1v1h-1zm-7 1h1v1h-1zm4 0h6v1h-6zm-4 1h2v1h-2zm4 0h1v1h-1zm3 0h1v1h-1zm2 0h1v1h-1zm-10 1h1v1h-1zm2 0h1v1h-1zm3 0h1v1h-1zm3 0h1v1h-1zm2 0h1v1h-1zm-10 1h6v1h-6zm8 0h1v1h-1zm2 0h1v1h-1zm-8 1h1v1h-1zm3 0h6v1h-6zm-3 1h4v1h-4zm6 0h1v1h-1zm2 0h1v1h-1zm-10 1h3v1h-3zm5 0h1v1h-1zm3 0h1v1h-1zm2 0h1v1h-1zm-8 1h1v1h-1zm3 0h6v1h-6zm-3 1h1v1h-1zm3 0h1v1h-1zm5 0h1v1h-1z"/>
<path id="g8f85" d="M2 0h1v1h-1zm5 0h1v1h-1zm2 0h1v1h-1zm-9 1h11v1h-11zm1 1h1v1h-1zm6 0h1v1h-1zm-6 1h2v1h-2zm4 0h6v1h-6zm-5 1h1v1h-1zm2 0h1v1h-1zm3 0h1v1h-1zm2 0h1v1h-1zm3 0h1v1h-1zm-10 1h11v1h-11zm2 1h1v1h-1zm3 0h1v1h-1zm2 0h1v1h-1zm3 0h1v1h-1zm-8 1h9v1h-9zm-2 1h3v1h-3zm5 0h1v1h-1zm2 0h1v1h-1zm3 0h1v1h-1zm-8 1h1v1h-1zm3 0h1v1h-1zm2 0h1v1h-1zm3 0h1v1h-1zm-8 1h1v1h-1zm3 0h1v1h-1zm2 0h1v1h-1zm2 0h2v1h-2z"/>
<path id="g8f91" d="M2 0h1v1h-1zm4 0h4v1h-4zm-6 1h5v1h-5zm6 0h1v1h-1zm3 0h1v1h-1zm-8 1h1v1h-1zm5 0h4v1h-4zm-5 1h2v1h-2zm-1 1h1v1h-1zm2 0h1v1h-1zm3 0h6v1h-6zm-5 1h5v1h-5zm6 0h1v1h-1zm3 0h1v1h-1zm-7 1h1v1h-1zm4 0h2v1h-2zm3 0h1v1h-1zm-7 1h3v1h-3zm4 0h1v1h-1zm2 0h2v1h-2zm-8 1h3v1h-3zm6 0h1v1h-1zm3 0h2v1h-2zm-7 1h1v1h-1zm2 0h6v1h-6zm-2 1h1v1h-1zm7 0h1v1h-1z"/>
<path id="g8f93" d="M1 0h1v1h-1zm6 0h1v1h-1zm-6 1h1v1h-1zm5 0h1v1h-1zm2 0h1v1h-1zm-8 1h4v1h-4zm5 0h1v1h-1zm4 0h1v1h-1zm-8 1h1v1h-1zm3 0h1v1h-1zm2 0h3v1h-3zm4 0h1v1h-1zm-10 1h1v1h-1zm2 0h1v1h-1zm-2 1h7v1h-7zm10 0h1v1h-1zm-8 1h1v1h-1zm2 0h1v1h-1zm2 0h1v1h-1zm2 0h1v1h-1zm2 0h1v1h-1zm-8 1h5v1h-5zm6 0h1v1h-1zm2 0h1v1h-1zm-10 1h3v1h-3zm4 0h1v1h-1zm2 0h1v1h-1zm2 0h1v1h-1zm2 0h1v1h-1zm-8 1h1v1h-1zm2 0h3v1h-3zm4 0h1v1h-1zm2 0h1v1h-1zm-8 1h1v1h-1zm2 0h1v1h-1zm2 0h1v1h-1zm3 0h2v1h-2z"/>
<path id="g8fb9" d="M1 0h1v1h-1zm6 0h1v1h-1zm-5 1h1v1h-1zm5 0h1v1h-1zm-5 1h1v1h-1zm2 0h7v1h-7zm3 1h1v1h-1zm3 0h1v1h-1zm-10 1h3v1h-3zm7 0h1v1h-1zm3 0h1v1h-1zm-8 1h1v1h-1zm5 0h1v1h-1zm3 0h1v1h-1zm-8 1h1v1h-1zm4 0h1v1h-1zm4 0h1v1h-1zm-8 1h1v1h-1zm3 0h1v1h-1zm5 0h1v1h-1zm-8 1h1v1h-1zm2 0h1v1h-1zm4 0h2v1h-2zm-7 1h1v1h-1zm2 0h1v1h-1zm-3 1h1v1h-1zm4 0h7v1h-7z"/>
<path id="g8ff0" d="M1 0h1v1h-1zm6 0h1v1h-1zm2 0h1v1h-1zm-7 1h1v1h-1zm5 0h1v1h-1zm3 0h1v1h-1zm-8 1h1v1h-1zm2 0h7v1h-7zm3 1h1v1h-1zm-7 1h3v1h-3zm6 0h3v1h-3zm-4 1h1v1h-1zm3 0h1v1h-1zm2 0h1v1h-1zm2 0h1v1h-1zm-7 1h1v1h-1zm3 0h1v1h-1zm2 0h1v1h-1zm2 0h1v1h-1zm-7 1h1v1h-1zm2 0h1v1h-1zm3 0h1v1h-1zm3 0h1v1h-1zm-8 1h1v1h-1zm5 0h1v1h-1zm-6 1h1v1h-1zm2 0h1v1h-1zm-3 1h1v1h-1zm4 0h7v1h-7z"/>
<path id="g9009" d="M1 0h1v1h-1zm4 0h1v1h-1zm2 0h1v1h-1zm-5 1h1v1h-1zm3 0h1v1h-1zm2 0h1v1h-1zm-5 1h1v1h-1zm3 0h5v1h-5zm-1 1h1v1h-1zm3 0h1v1h-1zm-7 1h3v1h-3zm4 0h7v1h-7zm-2 1h1v1h-1zm4 0h1v1h-1zm2 0h1v1h-1zm-6 1h1v1h-1zm4 0h1v1h-1zm2 0h1v1h-1zm2 0h1v1h-1zm-8 1h1v1h-1zm3 0h1v1h-1zm3 0h1v1h-1zm2 0h1v1h-1zm-8 1h1v1h-1zm2 0h1v1h-1zm5 0h2v1h-2zm-8 1h1v1h-1zm2 0h1v1h-1zm-3 1h1v1h-1zm4 0h7v1h-7z"/>
<path id="g9020" d="M1 0h1v1h-1zm6 0h1v1h-1zm-5 1h1v1h-1zm3 0h1v1h-1zm2 0h1v1h-1zm-5 1h1v1h-1zm3 0h5v1h-5zm-1 1h1v1h-1zm3 0h1v1h-1zm-7 1h3v1h-3zm4 0h7v1h-7zm-2 1h1v1h-1zm0 1h1v1h-1zm3 0h5v1h-5zm-3 1h1v1h-1zm3 0h1v1h-1zm4 0h1v1h-1zm-7 1h1v1h-1zm3 0h5v1h-5zm-4 1h1v1h-1zm2 0h1v1h-1zm-3 1h1v1h-1zm4 0h7v1h-7z"/>
<path id="g90e8" d="M3 0h1v1h-1zm4 0h4v1h-4zm-7 1h8v1h-8zm10 0h1v1h-1zm-9 1h1v1h-1zm4 0h1v1h-1zm2 0h1v1h-1zm3 0h1v1h-1zm-8 1h1v1h-1zm2 0h1v1h-1zm3 0h1v1h-1zm2 0h1v1h-1zm-9 1h9v1h-9zm7 1h1v1h-1zm2 0h1v1h-1zm-8 1h5v1h-5zm6 0h1v1h-1zm3 0h1v1h-1zm-9 1h1v1h-1zm4 0h1v1h-1zm2 0h1v1h-1zm3 0h1v1h-1zm-9 1h1v1h-1zm4 0h1v1h-1zm2 0h2v1h-2zm3 0h1v1h-1zm-9 1h5v1h-5zm6 0h1v1h-1zm2 0h1v1h-1zm-8 1h1v1h-1zm4 0h1v1h-1zm2 0h1v1h-1z"/>
<path id="g914d" d="M0 0h5v1h-5zm6 0h5v1h-5zm-5 1h1v1h-1zm2 0h1v1h-1zm7 0h1v1h-1zm-9 1h1v1h-1zm2 0h1v1h-1zm7 0h1v1h-1zm-10 1h5v1h-5zm10 0h1v1h-1zm-10 1h1v1h-1zm2 0h1v1h-1zm2 0h1v1h-1zm2 0h5v1h-5zm-6 1h2v1h-2zm3 0h2v1h-2zm3 0h1v1h-1zm-6 1h1v1h-1zm4 0h1v1h-1zm2 0h1v1h-1zm-6 1h5v1h-5zm6 0h1v1h-1zm-6 1h1v1h-1zm4 0h1v1h-1zm2 0h1v1h-1zm4 0h1v1h-1zm-10 1h5v1h-5zm6 0h1v1h-1zm4 0h1v1h-1zm-10 1h1v1h-1zm4 0h1v1h-1zm2 0h5v1h-5z"/>
<path id="g91cd" d="M1 0h9v1h-9zm4 1h1v1h-1zm-5 1h11v1h-11zm2 1h1v1h-1zm3 0h1v1h-1zm3 0h1v1h-1zm-6 1h7v1h-7zm0 1h1v1h-1zm3 0h1v1h-1zm3 0h1v1h-1zm-6 1h7v1h-7zm3 1h1v1h-1zm-4 1h9v1h-9zm4 1h1v1h-1zm-5 1h11v1h-11z"/>
<path id="g91cf" d="M2 0h7v1h-7zm0 1h1v1h-1zm6 0h1v1h-1zm-6 1h7v1h-7zm0 1h1v1h-1zm6 0h1v1h-1zm-8 1h11v1h-11zm2 1h1v1h-1zm3 0h1v1h-1zm3 0h1v1h-1zm-6 1h7v1h-7zm0 1h1v1h-1zm3 0h1v1h-1zm3 0h1v1h-1zm-7 1h9v1h-9zm4 1h1v1h-1zm-5 1h11v1h-11z"/>
<path id="g94a2" d="M1 0h1v1h-1zm4 0h6v1h-6zm-4 1h1v1h-1zm4 0h1v1h-1zm5 0h1v1h-1zm-9 1h5v1h-5zm7 0h1v1h-1zm2 0h1v1h-1zm-10 1h1v1h-1zm5 0h2v1h-2zm3 0h1v1h-1zm2 0h1v1h-1zm-10 1h6v1h-6zm7 0h1v1h-1zm3 0h1v1h-1zm-8 1h1v1h-1zm3 0h1v1h-1zm2 0h1v1h-1zm3 0h1v1h-1zm-10 1h6v1h-6zm7 0h2v1h-2zm3 0h1v1h-1zm-8 1h1v1h-1zm3 0h2v1h-2zm4 0h2v1h-2zm-7 1h1v1h-1zm2 0h2v1h-2zm6 0h1v1h-1zm-8 1h2v1h-2zm3 0h1v1h-1zm5 0h1v1h-1zm-8 1h1v1h-1zm3 0h1v1h-1zm3 0h3v1h-3z"/>
<path id="g9501" d="M2 0h1v1h-1zm2 0h1v1h-1zm3 0h1v1h-1zm3 0h1v1h-1zm-8 1h1v1h-1zm3 0h1v1h-1zm2 0h1v1h-1zm2 0h1v1h-1zm-8 1h1v1h-1zm6 0h1v1h-1zm-6 1h3v1h-3zm4 0h5v1h-5zm-5 1h1v1h-1zm5 0h1v1h-1zm4 0h1v1h-1zm-8 1h3v1h-3zm4 0h1v1h-1zm2 0h1v1h-1zm2 0h1v1h-1zm-7 1h1v1h-1zm3 0h1v1h-1zm2 0h1v1h-1zm2 0h1v1h-1zm-9 1h4v1h-4zm5 0h1v1h-1zm2 0h1v1h-1zm2 0h1v1h-1zm-7 1h1v1h-1zm3 0h1v1h-1zm2 0h1v1h-1zm2 0h1v1h-1zm-7 1h2v1h-2zm4 0h1v1h-1zm2 0h1v1h-1zm-6 1h1v1h-1zm2 0h2v1h-2zm5 0h2v1h-2z"/>
<path id="g951a" d="M1 0h1v1h-1zm5 0h1v1h-1zm3 0h1v1h-1zm-8 1h1v1h-1zm4 0h6v1h-6zm-4 1h4v1h-4zm5 0h1v1h-1zm3 0h1v1h-1zm-9 1h1v1h-1zm0 1h11v1h-11zm2 1h1v1h-1zm3 0h1v1h-1zm3 0h1v1h-1zm2 0h1v1h-1zm-10 1h6v1h-6zm8 0h1v1h-1zm2 0h1v1h-1zm-8 1h1v1h-1zm3 0h6v1h-6zm-3 1h1v1h-1zm2 0h2v1h-2zm4 0h1v1h-1zm2 0h1v1h-1zm-8 1h2v1h-2zm3 0h6v1h-6zm-3 1h1v1h-1zm3 0h1v1h-1zm5 0h1v1h-1z"/>
<path id="g955c" d="M1 0h1v1h-1zm6 0h1v1h-1zm-6 1h1v1h-1zm3 0h7v1h-7zm-3 1h3v1h-3zm5 0h1v1h-1zm2 0h1v1h-1zm-8 1h1v1h-1zm4 0h7v1h-7zm-4 1h4v1h-4zm5 0h1v1h-1zm4 0h1v1h-1zm-7 1h1v1h-1zm3 0h5v1h-5zm-5 1h4v1h-4zm5 0h1v1h-1zm4 0h1v1h-1zm-7 1h1v1h-1zm3 0h5v1h-5zm-3 1h1v1h-1zm2 0h1v1h-1zm2 0h1v1h-1zm2 0h1v1h-1zm-6 1h2v1h-2zm4 0h1v1h-1zm2 0h1v1h-1zm2 0h1v1h-1zm-8 1h1v1h-1zm2 0h2v1h-2zm5 0h2v1h-2z"/>
<path id="g957f" d="M3 0h1v1h-1zm5 0h1v1h-1zm-5 1h1v1h-1zm4 0h1v1h-1zm-4 1h1v1h-1zm3 0h1v1h-1zm-3 1h1v1h-1zm2 0h1v1h-1zm-2 1h2v1h-2zm-2 1h10v1h-10zm2 1h1v1h-1zm2 0h1v1h-1zm-2 1h1v1h-1zm3 0h1v1h-1zm-3 1h1v1h-1zm4 0h1v1h-1zm-4 1h1v1h-1zm2 0h1v1h-1zm3 0h1v1h-1zm-5 1h2v1h-2zm6 0h2v1h-2z"/>
<path id="g95ed" d="M1 0h1v1h-1zm4 0h6v1h-6zm-3 1h1v1h-1zm8 0h1v1h-1zm-10 1h1v1h-1zm6 0h1v1h-1zm4 0h1v1h-1zm-10 1h1v1h-1zm6 0h1v1h-1zm4 0h1v1h-1zm-10 1h1v1h-1zm2 0h7v1h-7zm8 0h1v1h-1zm-10 1h1v1h-1zm5 0h2v1h-2zm5 0h1v1h-1zm-10 1h1v1h-1zm4 0h1v1h-1zm2 0h1v1h-1zm4 0h1v1h-1zm-10 1h1v1h-1zm3 0h1v1h-1zm3 0h1v1h-1zm4 0h1v1h-1zm-10 1h1v1h-1zm2 0h1v1h-1zm4 0h1v1h-1zm4 0h1v1h-1zm-10 1h1v1h-1zm5 0h2v1h-2zm5 0h1v1h-1zm-10 1h1v1h-1zm8 0h3v1h-3z"/>
<path id="g9664" d="M0 0h4v1h-4zm7 0h1v1h-1zm-7 1h1v1h-1zm3 0h1v1h-1zm3 0h1v1h-1zm2 0h1v1h-1zm-8 1h1v1h-1zm2 0h1v1h-1zm3 0h1v1h-1zm4 0h1v1h-1zm-9 1h2v1h-2zm4 0h1v1h-1zm2 0h3v1h-3zm4 0h1v1h-1zm-10 1h1v1h-1zm2 0h1v1h-1zm5 0h1v1h-1zm-7 1h1v1h-1zm3 0h8v1h-8zm-3 1h1v1h-1zm3 0h1v1h-1zm4 0h1v1h-1zm-7 1h3v1h-3zm5 0h1v1h-1zm2 0h1v1h-1zm2 0h1v1h-1zm-9 1h1v1h-1zm4 0h1v1h-1zm3 0h1v1h-1zm3 0h1v1h-1zm-10 1h1v1h-1zm3 0h1v1h-1zm4 0h1v1h-1zm3 0h1v1h-1zm-10 1h1v1h-1zm6 0h2v1h-2z"/>
<path id="g9762" d="M1 0h10v1h-10zm4 1h1v1h-1zm-1 1h1v1h-1zm-3 1h10v1h-10zm0 1h1v1h-1zm3 0h1v1h-1zm3 0h1v1h-1zm3 0h1v1h-1zm-9 1h1v1h-1zm3 0h4v1h-4zm6 0h1v1h-1zm-9 1h1v1h-1zm3 0h1v1h-1zm3 0h1v1h-1zm3 0h1v1h-1zm-9 1h1v1h-1zm3 0h4v1h-4zm6 0h1v1h-1zm-9 1h1v1h-1zm3 0h1v1h-1zm3 0h1v1h-1zm3 0h1v1h-1zm-9 1h10v1h-10zm0 1h1v1h-1zm9 0h1v1h-1z"/>
<path id="g9876" d="M5 0h6v1h-6zm-5 1h5v1h-5zm7 0h1v1h-1zm-5 1h1v1h-1zm3 0h6v1h-6zm-3 1h1v1h-1zm3 0h1v1h-1zm5 0h1v1h-1zm-8 1h1v1h-1zm3 0h1v1h-1zm2 0h1v1h-1zm3 0h1v1h-1zm-8 1h1v1h-1zm3 0h1v1h-1zm2 0h1v1h-1zm3 0h1v1h-1zm-8 1h1v1h-1zm3 0h1v1h-1zm2 0h1v1h-1zm3 0h1v1h-1zm-8 1h1v1h-1zm3 0h1v1h-1zm2 0h1v1h-1zm3 0h1v1h-1zm-8 1h1v1h-1zm5 0h2v1h-2zm-6 1h2v1h-2zm5 0h1v1h-1zm3 0h1v1h-1zm-5 1h2v1h-2zm6 0h1v1h-1z"/>
<path id="g9f50" d="M5 0h1v1h-1zm-5 1h11v1h-11zm3 1h1v1h-1zm5 0h1v1h-1zm-4 1h1v1h-1zm3 0h1v1h-1zm-2 1h2v1h-2zm-2 1h2v1h-2zm4 0h2v1h-2zm-7 1h3v1h-3zm9 0h2v1h-2zm-5 1h1v1h-1zm3 0h1v1h-1zm-3 1h1v1h-1zm3 0h1v1h-1zm-4 1h1v1h-1zm4 0h1v1h-1zm-6 1h2v1h-2zm6 0h1v1h-1z"/>
<path id="gff1a" d="M6 2h2v1h-2zm0 1h2v1h-2zm0 4h2v1h-2zm0 1h2v1h-2z"/>
</defs></svg>
<div id="app">
<div id="tbars">
<div class="tb" style="top:-5px;height:28px"></div>
<div class="tb" style="top:23px;height:28px"></div>
<div class="tb" style="top:51px;height:26px"></div>
<div class="tb" style="top:77px;height:26px"></div>
<svg class="i" style="left:0px;top:3px" width="16" height="16" viewBox="0 3 16 16"><rect x="-2.500" y="4.500" width="16" height="11.500" fill="#eef1fb" stroke="#7f90d4"/><rect x="-2" y="5" width="15" height="2.500" fill="#a3b3ea"/><path d="M1 10.500h3.500M1 13.500h3.500" stroke="#5a70cc"/><rect x="6.500" y="9.500" width="5" height="2" fill="#fff" stroke="#7a8ed8"/><rect x="6.500" y="12.500" width="5" height="2" fill="#fff" stroke="#7a8ed8"/></svg>
<span class="t k" style="left:19px;top:5px;width:24px">定义<svg width="24" height="12"><use href="#g5b9a"/><use href="#g4e49" x="12"/></svg></span>
<svg class="i" style="left:52px;top:3px" width="16" height="16" viewBox="52 3 16 16"><path d="M53.300 5.800h8.900v2.700h-1.100v-1.300h-5l3.300 3.300-3.500 3.200h5.300v-1.300h1.100v2.800h-9v-1.300l4-3.500-4-3.500z" fill="#3c3c3c"/></svg>
<span class="t k" style="left:70px;top:5px;width:48px">汇总计算<svg width="48" height="12"><use href="#g6c47"/><use href="#g603b" x="12"/><use href="#g8ba1" x="24"/><use href="#g7b97" x="36"/></svg></span>
<svg class="i" style="left:125px;top:2px" width="18" height="18" viewBox="125 2 18 18"><path d="M127 9.500L138 3.500l2.500 2.500L130 12z" fill="#e3e2d8" stroke="#c3c1b5"/><path d="M128 12.500h11.500v5H128z" fill="#cac8bc" stroke="#bdbbaf"/><path d="M133 12.500v5M128 15h11" stroke="#b3b1a5"/><path d="M130.500 12v-2M137.500 8.500v4" stroke="#c3c1b5"/></svg>
<span class="t d" style="left:145px;top:5px;width:48px">平齐板顶<svg width="48" height="12"><use href="#g5e73"/><use href="#g9f50" x="12"/><use href="#g677f" x="24"/><use href="#g9876" x="36"/></svg></span>
<svg class="i" style="left:199px;top:3px" width="18" height="16" viewBox="199 3 18 16"><rect x="202.0" y="4.500" width="3" height="2.500" fill="#456bb0"/><rect x="201.5" y="6.500" width="4" height="3" fill="#8fb1e2" stroke="#5577b6" stroke-width=".8"/><rect x="200.5" y="9.500" width="6" height="7.500" fill="#e3ecfb" stroke="#5577b6"/><rect x="201.3" y="10.300" width="2" height="6" fill="#a9c3ec"/><rect x="210.0" y="4.500" width="3" height="2.500" fill="#456bb0"/><rect x="209.5" y="6.500" width="4" height="3" fill="#8fb1e2" stroke="#5577b6" stroke-width=".8"/><rect x="208.5" y="9.500" width="6" height="7.500" fill="#e3ecfb" stroke="#5577b6"/><rect x="209.3" y="10.300" width="2" height="6" fill="#a9c3ec"/></svg>
<span class="t k" style="left:220px;top:5px;width:48px">查找图元<svg width="48" height="12"><use href="#g67e5"/><use href="#g627e" x="12"/><use href="#g56fe" x="24"/><use href="#g5143" x="36"/></svg></span>
<svg class="i" style="left:275px;top:3px" width="16" height="16" viewBox="275 3 16 16"><circle cx="279.500" cy="12" r="2.600" fill="#e8e8e8" stroke="#8c8c8c" stroke-width="1.100"/><circle cx="285.800" cy="12" r="2.600" fill="#e8e8e8" stroke="#8c8c8c" stroke-width="1.100"/><path d="M277.300 10.500L279.500 7M288.300 10.500L288.600 7M282 12h1.400" stroke="#7c7c7c" stroke-width="1.200" fill="none"/></svg>
<span class="t k" style="left:295px;top:5px;width:60px">查看钢筋量<svg width="60" height="12"><use href="#g67e5"/><use href="#g770b" x="12"/><use href="#g94a2" x="24"/><use href="#g7b4b" x="36"/><use href="#g91cf" x="48"/></svg></span>
<svg class="i" style="left:361px;top:2px" width="18" height="18" viewBox="361 2 18 18"><path d="M364.500 4v14M367.500 4v14M364 7.500h7M364 10.500h13M364 13.500h6M364 16.500h13M371 10.500l3 4.500 3-4.500" stroke="#c6c4b8" fill="none"/></svg>
<span class="t d" style="left:382px;top:5px;width:48px">批量选择<svg width="48" height="12"><use href="#g6279"/><use href="#g91cf" x="12"/><use href="#g9009" x="24"/><use href="#g62e9" x="36"/></svg></span>
<svg class="i" style="left:436px;top:2px" width="18" height="18" viewBox="436 2 18 18"><rect x="437" y="3" width="16.500" height="15" fill="#f4f7fd"/><path d="M437 6.500h16M437 11h16M437 15.500h16M444 12l8-7" stroke="#8fa3cb" fill="none"/><path d="M438.500 3v15M445.500 3v15M451.500 3v15" stroke="#46557c" stroke-width="1.200"/></svg>
<span class="t k" style="left:457px;top:5px;width:48px">钢筋三维<svg width="48" height="12"><use href="#g94a2"/><use href="#g7b4b" x="12"/><use href="#g4e09" x="24"/><use href="#g7ef4" x="36"/></svg></span>
<svg class="i" style="left:512px;top:3px" width="16" height="16" viewBox="512 3 16 16"><path d="M516.500 11V8.200a3 3 0 0 1 6 0V11" stroke="#9c9c9c" stroke-width="1.700" fill="none"/><rect x="513.500" y="10.500" width="12" height="6.500" rx="1.200" fill="#f1d27c" stroke="#c19638"/><rect x="514.500" y="11.500" width="10" height="2" fill="#fbebb0"/><path d="M519.500 12v3.500M518.300 14h2.400" stroke="#8c6c22" stroke-width="1.100"/></svg>
<span class="t k" style="left:531px;top:5px;width:24px">锁定<svg width="24" height="12"><use href="#g9501"/><use href="#g5b9a" x="12"/></svg></span>
<svg class="i" style="left:563px;top:3px" width="18" height="16" viewBox="563 3 18 16"><path d="M566.200 11V8.200a3 3 0 0 1 6 0V10" stroke="#9c9c9c" stroke-width="1.700" fill="none"/><rect x="567.500" y="10.500" width="11.500" height="6.500" rx="1.200" fill="#f1d27c" stroke="#c19638"/><rect x="568.500" y="11.500" width="9.500" height="2" fill="#fbebb0"/><path d="M573.300 12v3.500M572.100 14h2.400" stroke="#8c6c22" stroke-width="1.100"/></svg>
<span class="t k" style="left:582px;top:5px;width:24px">解锁<svg width="24" height="12"><use href="#g89e3"/><use href="#g9501" x="12"/></svg></span>
<svg class="i" style="left:615px;top:3px" width="3" height="18" shape-rendering="crispEdges"><rect x="1" y="1" width="2" height="2" fill="#fff"/><rect x="0" y="0" width="2" height="2" fill="#a8a592"/><rect x="1" y="5" width="2" height="2" fill="#fff"/><rect x="0" y="4" width="2" height="2" fill="#a8a592"/><rect x="1" y="9" width="2" height="2" fill="#fff"/><rect x="0" y="8" width="2" height="2" fill="#a8a592"/><rect x="1" y="13" width="2" height="2" fill="#fff"/><rect x="0" y="12" width="2" height="2" fill="#a8a592"/></svg>
<div class="combo" style="left:623px;top:0px;width:60px;height:19px"></div>
<svg class="i" style="left:625px;top:2px" width="18" height="18" viewBox="625 2 18 18"><path d="M626.5 7.500h10.500v10h-10.500z" fill="#8ec1f2" stroke="#1f3b66"/><path d="M626.5 7.500l4-4h10.500l-4 4z" fill="#d2e8fb" stroke="#1f3b66"/><path d="M637.0 7.500l4-4v10l-4 4z" fill="#5795d6" stroke="#1f3b66"/></svg>
<span class="t k" style="left:643px;top:4px;width:24px">三维<svg width="24" height="12"><use href="#g4e09"/><use href="#g7ef4" x="12"/></svg></span>
<svg class="i" style="left:671px;top:3px" width="11" height="15" viewBox="0 0 12 15" preserveAspectRatio="none"><rect x="0" y="0" width="12" height="15" rx="1.500" fill="#bccbf3"/><path d="M2.600 5.300L6 8.700 9.400 5.300" fill="none" stroke="#2a4690" stroke-width="2.300"/></svg>
<svg class="i" style="left:687px;top:2px" width="18" height="18" viewBox="687 2 18 18"><path d="M688.5 7.500h10.500v10h-10.500z" fill="#f6f9fe" stroke="#4d627c"/><path d="M688.5 7.500l4-4h10.500l-4 4z" fill="#7c9abb" stroke="#4d627c"/><path d="M699.0 7.500l4-4v10l-4 4z" fill="#dde6f3" stroke="#4d627c"/><path d="M693.500 10v5M696.500 10v5" stroke="#c9d5e6"/></svg>
<span class="t k" style="left:708px;top:5px;width:24px">俯视<svg width="24" height="12"><use href="#g4fef"/><use href="#g89c6" x="12"/></svg></span>
<svg class="i" style="left:740px;top:9px" width="5" height="3"><path d="M0 0h5v1h-5zM1 1h3v1h-3zM2 2h1v1h-1z" fill="#000"/></svg>
<svg class="i" style="left:752px;top:2px" width="18" height="18" viewBox="752 2 18 18"><path d="M754 17.500c2-1.500 6.500-1 9 .3" stroke="#8aa4e4" stroke-width="1.600" fill="none"/><ellipse cx="760.200" cy="11.200" rx="7.200" ry="3.700" transform="rotate(-38 760.200 11.200)" fill="#32b46f" stroke="#1f8a52"/><ellipse cx="759.500" cy="10.800" rx="4" ry="1.500" transform="rotate(-38 759.500 10.800)" fill="#7fd9a6"/><circle cx="765.300" cy="6.300" r="2.600" fill="#f2c12e" stroke="#c9951c" stroke-width=".8"/></svg>
<span class="t k" style="left:772px;top:5px;width:48px">动态观察<svg width="48" height="12"><use href="#g52a8"/><use href="#g6001" x="12"/><use href="#g89c2" x="24"/><use href="#g5bdf" x="36"/></svg></span>
<svg class="i" style="left:826px;top:2px" width="18" height="18" viewBox="826 2 18 18"><path d="M835 4l7 3.800-7 3.800-7-3.800z" fill="#e0dfd5" stroke="#c3c1b5"/><path d="M828 7.800v5l7 4 7-4v-5M835 11.600v5M831.500 5.900l7 3.800M838.500 5.900l-7 3.800" fill="none" stroke="#c3c1b5"/></svg>
<span class="t d" style="left:847px;top:5px;width:48px">局部三维<svg width="48" height="12"><use href="#g5c40"/><use href="#g90e8" x="12"/><use href="#g4e09" x="24"/><use href="#g7ef4" x="36"/></svg></span>
<div class="sep" style="left:901px;top:2px;width:2px;height:19px"></div>
<svg class="i" style="left:904px;top:3px" width="8" height="16" viewBox="904 3 8 16"><circle cx="912.500" cy="11" r="5" fill="#dfe9fb" stroke="#7f97c4" stroke-width="1.300"/><path d="M910 9.500v3" stroke="#4f6fa8"/></svg>
<div class="tbend" style="left:779px;top:24px;width:133px;height:26px"></div>
<svg class="i" style="left:0px;top:28px" width="17" height="18" viewBox="0 28 17 18"><path d="M0 43.7h3.500M11 43.7h4.500" stroke="#8f8f8f" stroke-width="1.300"/><polygon points="14.5,28.6 15.8,29.8 10.5,36.9 8.7,35.6" fill="#d8caa0" stroke="#8c7d55" stroke-width=".7"/><polygon points="8.7,35.6 10.5,36.9 9.4,38.5 7.5,37.2" fill="#bcbcc8" stroke="#77778a" stroke-width=".6"/><path d="M7.5 37.2l1.900 1.300c1 3.200-3.200 5.700-7.400 5.200 2.200-1.300 2.400-4.700 5.500-6.500z" fill="#9c8bdc" stroke="#6a5ab0" stroke-width=".6"/><path d="M4 42.3c1.600-.8 2.300-2.400 3.300-3.600" stroke="#ddd5f8" stroke-width="1.200" fill="none"/></svg>
<span class="t k" style="left:20px;top:32px;width:24px">删除<svg width="24" height="12"><use href="#g5220"/><use href="#g9664" x="12"/></svg></span>
<div class="sep" style="left:49px;top:27px;width:2px;height:20px"></div>
<svg class="i" style="left:55px;top:29px" width="18" height="18" viewBox="55 29 18 18"><circle cx="60.300" cy="35.300" r="3.600" fill="#fff" stroke="#8399bb" stroke-width="1.200"/><circle cx="67" cy="41" r="4.200" fill="#f2f5fb" stroke="#8399bb" stroke-width="1.200"/><circle cx="67" cy="41.300" r="2" fill="none" stroke="#9fb2cf"/><path d="M65.500 31.500l4.300 4.200M69.800 32.200v3.600h-3.600" stroke="#39475f" stroke-width="1.200" fill="none"/></svg>
<span class="t k" style="left:76px;top:32px;width:24px">复制<svg width="24" height="12"><use href="#g590d"/><use href="#g5236" x="12"/></svg></span>
<svg class="i" style="left:107px;top:30px" width="18" height="16" viewBox="107 30 18 16"><path d="M114.500 31.500V44.500H108.500z" fill="#d3ddf1" stroke="#6f86b0"/><path d="M117.500 31.500V44.500H123.500z" fill="#d3ddf1" stroke="#6f86b0"/><path d="M112.500 38v5.500M119.500 38v5.500" stroke="#a9b9d8"/></svg>
<span class="t k" style="left:127px;top:32px;width:24px">镜像<svg width="24" height="12"><use href="#g955c"/><use href="#g50cf" x="12"/></svg></span>
<div class="sep" style="left:157px;top:27px;width:2px;height:20px"></div>
<svg class="i" style="left:164px;top:30px" width="16" height="16" viewBox="164 30 16 16"><path d="M172 33.500v10M167 38.500h10" stroke="#8795ad" stroke-width="1.400"/><path d="M172 31.300l-2.800 3.200h5.600zM172 45.700l-2.800-3.200h5.600zM164.800 38.500l3.200-2.800v5.600zM179.200 38.500l-3.200-2.800v5.600z" fill="#8795ad"/></svg>
<span class="t k" style="left:184px;top:32px;width:24px">移动<svg width="24" height="12"><use href="#g79fb"/><use href="#g52a8" x="12"/></svg></span>
<svg class="i" style="left:215px;top:30px" width="16" height="16" viewBox="215 30 16 16"><circle cx="223" cy="38.700" r="5.400" fill="#eef2fc" stroke="#c9d5f5" stroke-width="3.400"/><path d="M223.300 33.500a5.200 5.200 0 1 0 4.600 2.600" fill="none" stroke="#6c8cdc" stroke-width="2.300"/><path d="M219.600 33.500l4.400-3v5.800z" fill="#5a7cd4"/></svg>
<span class="t k" style="left:235px;top:32px;width:24px">旋转<svg width="24" height="12"><use href="#g65cb"/><use href="#g8f6c" x="12"/></svg></span>
<div class="sep" style="left:265px;top:27px;width:2px;height:20px"></div>
<svg class="i" style="left:271px;top:29px" width="18" height="18" viewBox="271 29 18 18"><path d="M272.500 36.500h7v3h-7zM281 36.500h2M281 39.500h2M284.500 30.500h3v14h-3z" fill="none" stroke="#bcbaad"/></svg>
<span class="t d" style="left:292px;top:32px;width:24px">延伸<svg width="24" height="12"><use href="#g5ef6"/><use href="#g4f38" x="12"/></svg></span>
<svg class="i" style="left:323px;top:29px" width="18" height="18" viewBox="323 29 18 18"><path d="M324.500 36.500h8v3h-8zM333.500 30.500h3v14h-3zM338 36.500h1.500M338 39.500h1.500" fill="none" stroke="#bcbaad"/></svg>
<span class="t d" style="left:343px;top:32px;width:24px">修剪<svg width="24" height="12"><use href="#g4fee"/><use href="#g526a" x="12"/></svg></span>
<div class="sep" style="left:373px;top:27px;width:2px;height:20px"></div>
<svg class="i" style="left:379px;top:30px" width="18" height="16" viewBox="379 30 18 16"><path d="M381.500 34.500h5.500M390 34.500h5.500" stroke="#bcbaad" stroke-width="1.200"/><path d="M380.500 34.500l2.800-2.300v4.600zM396.500 34.500l-2.800-2.300v4.600z" fill="#bcbaad"/><path d="M381.500 39.500h14v4h-14zM388.500 39.500v4" fill="none" stroke="#bcbaad"/></svg>
<span class="t d" style="left:400px;top:32px;width:24px">打断<svg width="24" height="12"><use href="#g6253"/><use href="#g65ad" x="12"/></svg></span>
<svg class="i" style="left:430px;top:30px" width="18" height="16" viewBox="430 30 18 16"><path d="M431.500 34.500h4M446.500 34.500h-4" stroke="#3f6fd0" stroke-width="1.300"/><path d="M438 34.500l-3.200-2.400v4.800zM440 34.500l3.200-2.400v4.800z" fill="#3f6fd0"/><path d="M432.500 39.500h13v3.500h-13z" fill="#e3ebfb" stroke="#7f9bd8"/><path d="M436.500 39.500v3.500M441.500 39.500v3.500" stroke="#a9bfe8"/></svg>
<span class="t k" style="left:451px;top:32px;width:24px">合并<svg width="24" height="12"><use href="#g5408"/><use href="#g5e76" x="12"/></svg></span>
<svg class="i" style="left:480px;top:29px" width="19" height="18" viewBox="480 29 19 18"><rect x="482.500" y="37.500" width="13" height="6" fill="#eef3ff" stroke="#2f5fe0"/><path d="M481.500 36.500h2v2h-2zM494.500 36.500h2v2h-2zM481.500 42.500h2v2h-2zM494.500 42.500h2v2h-2z" fill="#5f86ee"/><path d="M484 43.500L493 37" stroke="#2b2b2b" stroke-width="1.200"/><polygon points="492.500,37 496.600,31 498.600,32.600 494.500,38.300" fill="#cba9a3" stroke="#7a7070" stroke-width=".7"/></svg>
<span class="t k" style="left:502px;top:32px;width:24px">分割<svg width="24" height="12"><use href="#g5206"/><use href="#g5272" x="12"/></svg></span>
<div class="sep" style="left:532px;top:27px;width:2px;height:20px"></div>
<svg class="i" style="left:539px;top:30px" width="16" height="16" viewBox="539 30 16 16"><rect x="541" y="31" width="2" height="14" fill="#bcbaad"/><path d="M544.500 34.500h5v2h-5zM544.500 39.500h7.500v3.500h-7.500z" fill="none" stroke="#bcbaad"/></svg>
<span class="t d" style="left:559px;top:32px;width:24px">对齐<svg width="24" height="12"><use href="#g5bf9"/><use href="#g9f50" x="12"/></svg></span>
<svg class="i" style="left:587px;top:36px" width="5" height="3"><path d="M0 0h5v1h-5zM1 1h3v1h-3zM2 2h1v1h-1z" fill="#aca899"/></svg>
<svg class="i" style="left:598px;top:30px" width="17" height="16" viewBox="598 30 17 16"><path d="M602.600 42.500a3.300 3.300 0 0 1-.6-6.400a4.600 4.600 0 0 1 8.700-1.200a3.900 3.900 0 0 1 .8 7.600z" fill="#f3f5fb" stroke="#6d7da0" stroke-width="1.200"/><path d="M604 41.300a1.900 1.900 0 0 1-.3-3.700a2.700 2.700 0 0 1 5.100-.7a2.200 2.200 0 0 1 .5 4.400z" fill="#f1a2a2" stroke="#e07f86" stroke-width=".6"/></svg>
<span class="t k" style="left:617px;top:32px;width:24px">偏移<svg width="24" height="12"><use href="#g504f"/><use href="#g79fb" x="12"/></svg></span>
<svg class="i" style="left:649px;top:30px" width="16" height="16" viewBox="649 30 16 16"><path d="M650.500 32.500h7l5.500 5.500v6.500h-12.500z" fill="#fff" stroke="#4f6383"/><path d="M657.500 32.500v5.500h5.500" fill="#e3e9f4" stroke="#4f6383"/><path d="M653 38.500h2M653 41.500h2M657.500 40v1.500M657.500 42.500v1.500M660 41.500h1.500" stroke="#5f7395"/></svg>
<span class="t k" style="left:668px;top:32px;width:24px">拉伸<svg width="24" height="12"><use href="#g62c9"/><use href="#g4f38" x="12"/></svg></span>
<div class="sep" style="left:699px;top:27px;width:2px;height:20px"></div>
<svg class="i" style="left:704px;top:29px" width="19" height="18" viewBox="704 29 19 18"><polygon points="718.800,30.800 721.800,33.300 714.200,42 711.400,42.800 711.800,40" fill="#d9cba6" stroke="#8c8270" stroke-width=".8"/><path d="M712 40l2.200 2" stroke="#8c8270" stroke-width=".7"/><path d="M706 43.500h3.500M718 43.500h3.500" stroke="#3c3c3c" stroke-width="1.300"/><rect x="711.800" y="42" width="3.600" height="3" fill="#3c3c3c"/></svg>
<span class="t k" style="left:725px;top:32px;width:48px">设置夹点<svg width="48" height="12"><use href="#g8bbe"/><use href="#g7f6e" x="12"/><use href="#g5939" x="24"/><use href="#g70b9" x="36"/></svg></span>
<div class="combo" style="left:-2px;top:54px;width:44px;height:18px"></div>
<span class="t k" style="left:-1px;top:57px;width:36px">基础层<svg width="36" height="12"><use href="#g57fa"/><use href="#g7840" x="12"/><use href="#g5c42" x="24"/></svg></span>
<svg class="i" style="left:42px;top:56px" width="12" height="15" viewBox="0 0 12 15" preserveAspectRatio="none"><rect x="0" y="0" width="12" height="15" rx="1.500" fill="#bccbf3"/><path d="M2.600 5.300L6 8.700 9.400 5.300" fill="none" stroke="#2a4690" stroke-width="2.300"/></svg>
<div class="combo" style="left:57px;top:54px;width:57px;height:18px"></div>
<span class="t k" style="left:60px;top:57px;width:24px">基础<svg width="24" height="12"><use href="#g57fa"/><use href="#g7840" x="12"/></svg></span>
<svg class="i" style="left:114px;top:56px" width="12" height="15" viewBox="0 0 12 15" preserveAspectRatio="none"><rect x="0" y="0" width="12" height="15" rx="1.500" fill="#bccbf3"/><path d="M2.600 5.300L6 8.700 9.400 5.300" fill="none" stroke="#2a4690" stroke-width="2.300"/></svg>
<div class="combo" style="left:129px;top:54px;width:57px;height:18px"></div>
<span class="t k" style="left:131px;top:57px;width:48px">筏板基础<svg width="48" height="12"><use href="#g7b4f"/><use href="#g677f" x="12"/><use href="#g57fa" x="24"/><use href="#g7840" x="36"/></svg></span>
<svg class="i" style="left:186px;top:56px" width="12" height="15" viewBox="0 0 12 15" preserveAspectRatio="none"><rect x="0" y="0" width="12" height="15" rx="1.500" fill="#bccbf3"/><path d="M2.600 5.300L6 8.700 9.400 5.300" fill="none" stroke="#2a4690" stroke-width="2.300"/></svg>
<div class="combo" style="left:201px;top:54px;width:57px;height:18px"></div>
<span class="t k" style="left:204px;top:56px;width:24px">FB-2<svg width="24" height="12"><use href="#g46"/><use href="#g42" x="6"/><use href="#g2d" x="12"/><use href="#g32" x="18"/></svg></span>
<svg class="i" style="left:258px;top:56px" width="12" height="15" viewBox="0 0 12 15" preserveAspectRatio="none"><rect x="0" y="0" width="12" height="15" rx="1.500" fill="#bccbf3"/><path d="M2.600 5.300L6 8.700 9.400 5.300" fill="none" stroke="#2a4690" stroke-width="2.300"/></svg>
<div class="sep" style="left:276px;top:54px;width:2px;height:20px"></div>
<svg class="i" style="left:282px;top:55px" width="17" height="16" viewBox="282 55 17 16"><rect x="284.500" y="56.500" width="11" height="6.500" fill="#fff" stroke="#9a9a9a"/><path d="M286.500 59h7" stroke="#c9c9c9"/><path d="M283.500 66l4.200-3.700h3.800l5.500 2.700v5h-9.500z" fill="#e8ca78" stroke="#b08d3a" stroke-width=".9"/><path d="M287.500 66l3-1.500 4 2" stroke="#f7e7ae" fill="none"/></svg>
<span class="t k" style="left:301px;top:58px;width:24px">属性<svg width="24" height="12"><use href="#g5c5e"/><use href="#g6027" x="12"/></svg></span>
<div class="hot" style="left:329px;top:53px;width:75px;height:22px"></div>
<svg class="i" style="left:333px;top:55px" width="18" height="16" viewBox="333 55 18 16"><polygon points="346.800,57 349.600,59.600 342,66 339,66.800 339.600,64" fill="#d9c592" stroke="#6f6650" stroke-width=".8"/><path d="M346 58l2.600 2.400" stroke="#c98f8f" stroke-width="1.500"/><path d="M336.500 69.500l-1-2.300h13.500l-1 2.300" stroke="#000" stroke-width="1.300" fill="none"/></svg>
<span class="t k" style="left:353px;top:58px;width:48px">编辑钢筋<svg width="48" height="12"><use href="#g7f16"/><use href="#g8f91" x="12"/><use href="#g94a2" x="24"/><use href="#g7b4b" x="36"/></svg></span>
<svg class="i" style="left:407px;top:55px" width="16" height="17" viewBox="407 55 16 17"><circle cx="409.500" cy="59" r="1.400" fill="#fff" stroke="#6f7f9f"/><circle cx="409.500" cy="64" r="1.400" fill="#fff" stroke="#6f7f9f"/><circle cx="409.500" cy="69" r="1.400" fill="#fff" stroke="#6f7f9f"/><rect x="413.500" y="57.500" width="7.500" height="13.500" fill="#dde7fa" stroke="#7f97c9"/><path d="M415 60.500h4.500M415 63.500h4.500M415 66.500h4.500" stroke="#8fa6d6"/></svg>
<span class="t k" style="left:427px;top:58px;width:48px">构件列表<svg width="48" height="12"><use href="#g6784"/><use href="#g4ef6" x="12"/><use href="#g5217" x="24"/><use href="#g8868" x="36"/></svg></span>
<svg class="i" style="left:483px;top:55px" width="17" height="18" viewBox="483 55 17 18"><polygon points="492.500,60 495.600,63 488.500,70 485,71.600 485.600,68" fill="#8fb2ea" stroke="#3f5fae" stroke-width=".8"/><polygon points="493,56.800 497.600,57.300 498.200,62 495.600,62.800 492.300,59.600" fill="#2c4ba2"/><path d="M491 61.500l3.500 3.500" stroke="#2c4ba2" stroke-width="1.600"/></svg>
<span class="t k" style="left:502px;top:58px;width:48px">拾取构件<svg width="48" height="12"><use href="#g62fe"/><use href="#g53d6" x="12"/><use href="#g6784" x="24"/><use href="#g4ef6" x="36"/></svg></span>
<svg class="i" style="left:558px;top:55px" width="3" height="18" shape-rendering="crispEdges"><rect x="1" y="1" width="2" height="2" fill="#fff"/><rect x="0" y="0" width="2" height="2" fill="#a8a592"/><rect x="1" y="5" width="2" height="2" fill="#fff"/><rect x="0" y="4" width="2" height="2" fill="#a8a592"/><rect x="1" y="9" width="2" height="2" fill="#fff"/><rect x="0" y="8" width="2" height="2" fill="#a8a592"/><rect x="1" y="13" width="2" height="2" fill="#fff"/><rect x="0" y="12" width="2" height="2" fill="#a8a592"/></svg>
<svg class="i" style="left:567px;top:55px" width="18" height="18" viewBox="567 55 18 18"><path d="M572.500 57v14.500M579.500 57v14.500M568 62.500h15.500M568 68.500h15.500" stroke="#8a86a8"/><path d="M569 70.500L582.500 57.500" stroke="#6b6b3a" stroke-width="1.100"/><circle cx="572.500" cy="67.500" r="1.100" fill="#c95050"/><circle cx="579.500" cy="60.500" r="1.100" fill="#c95050"/></svg>
<span class="t k" style="left:587px;top:58px;width:24px">两点<svg width="24" height="12"><use href="#g4e24"/><use href="#g70b9" x="12"/></svg></span>
<svg class="i" style="left:618px;top:55px" width="18" height="18" viewBox="618 55 18 18"><path d="M623.500 57v14.500M630.500 57v14.500" stroke="#9b8ca4"/><path d="M619 61.500h15.500M619 67.500h15.500" stroke="#cf6c7f"/></svg>
<span class="t k" style="left:638px;top:58px;width:24px">平行<svg width="24" height="12"><use href="#g5e73"/><use href="#g884c" x="12"/></svg></span>
<svg class="i" style="left:669px;top:55px" width="18" height="18" viewBox="669 55 18 18"><path d="M674.500 57v14.500M681.500 57v14.500M670 62.500h15.500M670 68.500h15.500" stroke="#8a86a8"/><path d="M671 70.500L683.500 57.500" stroke="#5b5b4a" stroke-width="1.100"/><path d="M678.500 68.500a4 4 0 0 0-1.800-3.300" stroke="#e0404a" fill="none"/><ellipse cx="684.800" cy="66" rx="1.300" ry="2" fill="none" stroke="#e0404a"/></svg>
<span class="t k" style="left:689px;top:58px;width:24px">点角<svg width="24" height="12"><use href="#g70b9"/><use href="#g89d2" x="12"/></svg></span>
<svg class="i" style="left:720px;top:62px" width="5" height="3"><path d="M0 0h5v1h-5zM1 1h3v1h-3zM2 2h1v1h-1z" fill="#000"/></svg>
<svg class="i" style="left:732px;top:55px" width="18" height="18" viewBox="732 55 18 18"><path d="M741.500 57v14.500M734 65.500h14" stroke="#5f7fd0"/><path d="M735.500 69Q736 59.500 746 57.800" stroke="#e07f8f" stroke-width="1.200" fill="none"/><circle cx="735.300" cy="70" r="1.300" fill="none" stroke="#d04040"/><circle cx="746.800" cy="57.500" r="1.300" fill="none" stroke="#d04040"/></svg>
<span class="t k" style="left:753px;top:58px;width:48px">三点辅轴<svg width="48" height="12"><use href="#g4e09"/><use href="#g70b9" x="12"/><use href="#g8f85" x="24"/><use href="#g8f74" x="36"/></svg></span>
<svg class="i" style="left:808px;top:62px" width="5" height="3"><path d="M0 0h5v1h-5zM1 1h3v1h-3zM2 2h1v1h-1z" fill="#000"/></svg>
<svg class="i" style="left:820px;top:54px" width="18" height="18" viewBox="820 54 18 18"><path d="M821 70.7h3.500M832 70.7h4.500" stroke="#8f8f8f" stroke-width="1.300"/><polygon points="835.5,55.6 836.8,56.8 831.5,63.9 829.7,62.6" fill="#d8caa0" stroke="#8c7d55" stroke-width=".7"/><polygon points="829.7,62.6 831.5,63.9 830.4,65.5 828.5,64.2" fill="#bcbcc8" stroke="#77778a" stroke-width=".6"/><path d="M828.5 64.2l1.900 1.300c1 3.200-3.200 5.700-7.400 5.200 2.200-1.300 2.400-4.700 5.500-6.500z" fill="#9c8bdc" stroke="#6a5ab0" stroke-width=".6"/><path d="M825 69.3c1.600-.8 2.300-2.400 3.300-3.600" stroke="#ddd5f8" stroke-width="1.200" fill="none"/></svg>
<span class="t k" style="left:841px;top:58px;width:48px">删除辅轴<svg width="48" height="12"><use href="#g5220"/><use href="#g9664" x="12"/><use href="#g8f85" x="24"/><use href="#g8f74" x="36"/></svg></span>
<svg class="i" style="left:896px;top:55px" width="16" height="18" viewBox="896 55 16 18"><path d="M897.500 66.500v6M908.500 66.500v6M897.500 69.500h15" stroke="#4f4f4f" stroke-width="1.200"/><circle cx="898.500" cy="63.800" r="1.600" fill="#93d0a3"/><circle cx="909.500" cy="58" r="1.600" fill="#93d0a3"/></svg>
<div class="pressed" style="left:-1px;top:79px;width:47px;height:21px"></div>
<svg class="i" style="left:2px;top:83px" width="12" height="16" viewBox="2 83 12 16"><path d="M4.500 85v10.300l2.600-2.400 1.900 4 1.600-.7-1.900-3.900h3.300z" fill="#fff" stroke="#8a8a8a" stroke-width=".9"/></svg>
<span class="t k" style="left:19px;top:85px;width:24px">选择<svg width="24" height="12"><use href="#g9009"/><use href="#g62e9" x="12"/></svg></span>
<svg class="i" style="left:50px;top:88px" width="5" height="3"><path d="M0 0h5v1h-5zM1 1h3v1h-3zM2 2h1v1h-1z" fill="#000"/></svg>
<div class="sep" style="left:62px;top:80px;width:2px;height:20px"></div>
<svg class="i" style="left:71px;top:83px" width="14" height="14" viewBox="71 83 14 14"><rect x="72.500" y="85.500" width="9.500" height="9" fill="#e6e9fa" stroke="#5252b2"/><path d="M73 86l8.500 8M81.500 86l-8.500 8" stroke="#7676c6"/></svg>
<span class="t k" style="left:89px;top:85px;width:12px">点<svg width="12" height="12"><use href="#g70b9"/></svg></span>
<div class="sep" style="left:107px;top:80px;width:2px;height:20px"></div>
<svg class="i" style="left:114px;top:82px" width="17" height="16" viewBox="114 82 17 16"><path d="M116 84l10.500 10" stroke="#5f7fa6" stroke-width="1.300"/><polygon points="129.200,96.600 123.300,94.600 127.200,90.800" fill="#5f7fa6"/></svg>
<span class="t k" style="left:134px;top:85px;width:24px">直线<svg width="24" height="12"><use href="#g76f4"/><use href="#g7ebf" x="12"/></svg></span>
<svg class="i" style="left:165px;top:82px" width="17" height="16" viewBox="165 82 17 16"><path d="M168 95.500Q168.500 86.500 178 85" stroke="#8a8a8a" stroke-width="1.200" fill="none"/><rect x="166.500" y="94.300" width="2.600" height="2.600" fill="#fbe3ea" stroke="#e07f8f" stroke-width=".8"/><rect x="177" y="83.500" width="2.600" height="2.600" fill="#fbe3ea" stroke="#e07f8f" stroke-width=".8"/></svg>
<span class="t k" style="left:185px;top:85px;width:48px">三点画弧<svg width="48" height="12"><use href="#g4e09"/><use href="#g70b9" x="12"/><use href="#g753b" x="24"/><use href="#g5f27" x="36"/></svg></span>
<svg class="i" style="left:241px;top:88px" width="5" height="3"><path d="M0 0h5v1h-5zM1 1h3v1h-3zM2 2h1v1h-1z" fill="#000"/></svg>
<div class="combo" style="left:252px;top:81px;width:42px;height:16px"></div>
<svg class="i" style="left:294px;top:82px" width="11" height="14" viewBox="0 0 12 15" preserveAspectRatio="none"><rect x="0" y="0" width="12" height="15" rx="1.500" fill="#bccbf3"/><path d="M2.600 5.300L6 8.700 9.400 5.300" fill="none" stroke="#2a4690" stroke-width="2.300"/></svg>
<svg class="i" style="left:311px;top:84px" width="17" height="13" viewBox="311 84 17 13"><rect x="312.500" y="85.500" width="13.500" height="9.500" fill="#bcd2f6" stroke="#6189d3"/><path d="M319 86l6.500 0v8.500z" fill="#dbe7fc"/></svg>
<span class="t k" style="left:331px;top:85px;width:24px">矩形<svg width="24" height="12"><use href="#g77e9"/><use href="#g5f62" x="12"/></svg></span>
<div class="sep" style="left:361px;top:80px;width:2px;height:20px"></div>
<svg class="i" style="left:369px;top:82px" width="17" height="16" viewBox="369 82 17 16"><rect x="371" y="84" width="5" height="5" fill="#e8ebfb" stroke="#6272c4"/><rect x="372.5" y="85.5" width="2" height="2" fill="#8a97d8"/><rect x="377.5" y="84" width="5" height="5" fill="#e8ebfb" stroke="#6272c4"/><rect x="379.0" y="85.5" width="2" height="2" fill="#8a97d8"/><rect x="371" y="90.5" width="5" height="5" fill="#e8ebfb" stroke="#6272c4"/><rect x="372.5" y="92.0" width="2" height="2" fill="#8a97d8"/><rect x="377.5" y="90.5" width="5" height="5" fill="#e8ebfb" stroke="#6272c4"/><rect x="379.0" y="92.0" width="2" height="2" fill="#8a97d8"/></svg>
<span class="t k" style="left:389px;top:85px;width:60px">自动生成板<svg width="60" height="12"><use href="#g81ea"/><use href="#g52a8" x="12"/><use href="#g751f" x="24"/><use href="#g6210" x="36"/><use href="#g677f" x="48"/></svg></span>
<svg class="i" style="left:454px;top:82px" width="18" height="16" viewBox="454 82 18 16"><rect x="461.500" y="83.500" width="4.500" height="3" fill="#eef3fc" stroke="#8aa6da" stroke-dasharray="1 1"/><rect x="455.500" y="90.500" width="15.500" height="3" fill="#e1eafb" stroke="#4f7fd0"/><rect x="460.500" y="87.500" width="6.500" height="8.500" fill="#bed3f5" stroke="#5f8ad6"/></svg>
<span class="t k" style="left:475px;top:85px;width:48px">按梁分割<svg width="48" height="12"><use href="#g6309"/><use href="#g6881" x="12"/><use href="#g5206" x="24"/><use href="#g5272" x="36"/></svg></span>
<svg class="i" style="left:529px;top:81px" width="18" height="17" viewBox="529 81 18 17"><rect x="531.500" y="88.500" width="9.500" height="7.500" fill="#cfe0f8" stroke="#4f7fd0"/><rect x="537.500" y="86.500" width="8.500" height="6.500" fill="#fff" stroke="#4f7fd0"/><polygon points="538.800,81.800 541.300,84 535.200,90.200 532.600,90.800 533,88.200" fill="#ea6f6f" stroke="#b24545" stroke-width=".7"/></svg>
<span class="t k" style="left:550px;top:85px;width:84px">设置筏板变截面<svg width="84" height="12"><use href="#g8bbe"/><use href="#g7f6e" x="12"/><use href="#g7b4f" x="24"/><use href="#g677f" x="36"/><use href="#g53d8" x="48"/><use href="#g622a" x="60"/><use href="#g9762" x="72"/></svg></span>
<svg class="i" style="left:641px;top:82px" width="16" height="16" viewBox="641 82 16 16"><rect x="642" y="83" width="13.500" height="13" fill="#c5d7f5" stroke="#6f8fd0"/><path d="M646 86v5.500a2.400 2.400 0 0 0 4.800 0v-2l2.500-3.500" stroke="#4f6fbc" stroke-width="1.200" fill="none"/></svg>
<span class="t k" style="left:660px;top:85px;width:72px">查看板内钢筋<svg width="72" height="12"><use href="#g67e5"/><use href="#g770b" x="12"/><use href="#g677f" x="24"/><use href="#g5185" x="36"/><use href="#g94a2" x="48"/><use href="#g7b4b" x="60"/></svg></span>
<svg class="i" style="left:740px;top:82px" width="18" height="16" viewBox="740 82 18 16"><path d="M744.500 83.500h8l4 3.500v9h-10l-3-3.500 3-3-3-3z" fill="#e5edfb" stroke="#4f7fd0" stroke-dasharray="9 1.500 1.500 1.500 1.500 1.500 40"/></svg>
<span class="t k" style="left:760px;top:85px;width:72px">设置多边边坡<svg width="72" height="12"><use href="#g8bbe"/><use href="#g7f6e" x="12"/><use href="#g591a" x="24"/><use href="#g8fb9" x="36"/><use href="#g8fb9" x="48"/><use href="#g5761" x="60"/></svg></span>
<svg class="i" style="left:839px;top:88px" width="5" height="3"><path d="M0 0h5v1h-5zM1 1h3v1h-3zM2 2h1v1h-1z" fill="#000"/></svg>
<svg class="i" style="left:851px;top:83px" width="18" height="14" viewBox="851 83 18 14"><rect x="856.500" y="84.500" width="11" height="10.500" fill="#dde8fa" stroke="#93abdd" stroke-dasharray="1.500 1"/><path d="M857.500 91.500v2h9" stroke="#5f7fd0" stroke-width="1.300" fill="none"/><rect x="852.500" y="87.500" width="7.500" height="3.500" fill="#f2e274" stroke="#c4b040"/></svg>
<span class="t k" style="left:871px;top:85px;width:48px">取消所有<svg width="48" height="12"><use href="#g53d6"/><use href="#g6d88" x="12"/><use href="#g6240" x="24"/><use href="#g6709" x="36"/></svg></span>
</div>
<svg id="canvas" width="912" height="466" viewBox="0 103 912 466">
<rect x="0" y="103" width="912" height="466" fill="#000"/>
<rect x="0" y="428" width="912" height="141" fill="#b1b1b1"/>
<rect x="0" y="427.300" width="912" height="1.500" fill="#ffffff"/>
<rect x="0" y="103" width="150" height="30" fill="#b4b4b4"/>
<rect x="0" y="197" width="132" height="226.500" fill="#afafaf"/>
<path d="M0 197H108L40 262H0z" fill="#a6a6a6"/>
<path d="M0 197.700H131.400V423H0" fill="none" stroke="#fafafa" stroke-width="1.400"/>
<rect x="377" y="103" width="65" height="14" fill="#a4b564"/>
<path d="M383 103H436L430 113H389z" fill="#9aac5a"/>
<g stroke="#cc1c24" stroke-width="1.300" fill="none">
<path d="M132 197.500H912M132 206.500H912M132 229.500H912M132 326.500H912M132 423.500H912"/>
<path d="M151.300 103V428M409.300 136V423M667.500 136V423"/>
<path d="M150 133H912" stroke="#d22a18" stroke-width="2"/>
</g>
<g stroke="#a01428" stroke-width="1.200" fill="none">
<path d="M67.500 133V197M131.500 133V197M141.300 133V428" />
<path d="M74.500 133V197" stroke="#360606"/>
<path d="M495.500 103V132M581.500 103V132" stroke="#7a0c10"/>
</g>
<path d="M495 132.500H582L668 229.500V326L582 423H495L409 326V229.500z" fill="#0a78e6" stroke="#f2f6ff" stroke-width="1.300"/>
<rect x="493.800" y="132.500" width="2.600" height="290.500" fill="#f2f23c"/>
<rect x="580.300" y="132.500" width="3.300" height="290.500" fill="#9640f5"/>
<rect x="409" y="228.300" width="259" height="3.300" fill="#9040f0"/>
<rect x="409" y="324.500" width="259" height="3" fill="#ecf870"/>
<rect x="493.800" y="324.500" width="2.600" height="3" fill="#f6f6a0"/>
<rect x="494" y="229" width="2.200" height="2.200" fill="#e82030"/>
<rect x="581" y="325" width="2.200" height="2.200" fill="#d02060"/>
<rect x="666" y="103" width="5" height="16" fill="#f0f000"/>
<rect x="676" y="130" width="236" height="6" fill="#f0f000"/>
<rect x="408.300" y="107" width="2" height="11" fill="#f0f000"/>
<g fill="none" stroke="#4e7a4e" stroke-width="1">
<path d="M152 104.500C160 104 164.500 110 164 117C163.500 123 160 126 158 127"/>
<path d="M13 134C14 141 9 147 0 148"/>
<path d="M400 108L409 104L418 108V119L414 124M404 124L400 119V108" stroke="#3d6a2c" stroke-opacity=".7"/>
<path d="M659 107L668 103L677 107V118L672 123M664 123L659 118V107" stroke="#2c7e2c"/>
</g>
<g fill="none" stroke="#fff" stroke-width="1.200">
<path d="M158.500 109.500H153.500V113.500C156 112.500 159 113.500 159 116.500C159 119.500 155 120 153 118.500"/>
<path d="M9 133.500C7 141 2 140.500 0 137"/>
<path d="M671 108.500H675.500L672.500 116"/>
</g>
<rect x="143" y="118" width="17" height="18" fill="#6a0cf0"/>
<rect x="401" y="118" width="16.5" height="18" fill="#6a0cf0"/>
<rect x="660" y="118" width="16.5" height="18" fill="#6a0cf0"/>
<rect x="143" y="420" width="17" height="18" fill="#6a0cf0"/>
<rect x="401" y="420" width="16.5" height="18" fill="#6a0cf0"/>
<rect x="908" y="273" width="4" height="10" fill="#6a0cf0"/>
<rect x="50" y="197" width="4" height="226" fill="#ee84ee"/><rect x="51" y="197" width="2" height="226" fill="#c226c2"/>
<rect x="0" y="271.700" width="132" height="2.400" fill="#ff00ff"/>
<rect x="0" y="346.500" width="132" height="2.400" fill="#eaea20"/>
<rect x="264" y="428.500" width="32" height="140.500" fill="#4a4a4a"/>
<rect x="276.500" y="428.500" width="2.700" height="140.500" fill="#f2f260"/>
<rect x="430" y="439" width="18" height="130" fill="#e400e4"/>
<rect x="462" y="468" width="173" height="64" fill="#e400e4"/>
<path d="M495.500 468V532M581.500 468V532" stroke="#b00828" stroke-width="1"/>
<rect x="700" y="468" width="117" height="64" fill="#e400e4"/>
<rect x="785" y="531" width="32" height="38" fill="#e400e4"/>
<rect x="635" y="468" width="65" height="64" fill="#50e250"/>
<rect x="635" y="423" width="65" height="5.500" fill="#50e250"/>
<rect x="656" y="423" width="18.500" height="146" fill="#38a23a"/>
<rect x="661.500" y="423" width="9.500" height="146" fill="#4cde4c"/>
<rect x="8" y="549.500" width="904" height="1.800" fill="#4c4c4c"/>
<rect x="430" y="549.500" width="18" height="2" fill="#38d038"/>
<rect x="785" y="549.500" width="32" height="2" fill="#38e038"/>
<path d="M841 458L912 530" stroke="#505050" stroke-width="1.300"/>
<rect x="0" y="507.800" width="912" height="2.200" fill="#ff00ff"/>
<rect x="656" y="507.800" width="18.500" height="2.200" fill="#38a23a"/>
<path d="M43 519V480" stroke="#20e020" stroke-width="3"/><path d="M43 469L38.500 481H47.500z" fill="#20e020"/>
<path d="M43 519H80" stroke="#f01818" stroke-width="3"/><path d="M93 519L80 514.500V523.500z" fill="#f01818"/>
<circle cx="43" cy="519" r="3.600" fill="#1878e8"/>
<path d="M54 473L57.500 478L61 473M57.500 478V483" stroke="#30d040" stroke-width="1.200" fill="none"/>
<path d="M81 499L90 508M90 499L81 508" stroke="#e83030" stroke-width="1.200" fill="none"/>
<path d="M30 514H38L30 523H38" stroke="#3078e0" stroke-width="1.200" fill="none"/>
</svg>
<div id="snap">
<div class="plain" style="left:0px;top:569px;width:912px;height:28px"></div>
<div class="tb" style="top:569px;height:27px;width:855px"></div>
<svg class="i" style="left:0px;top:575px" width="16" height="15" viewBox="0 575 16 15"><path d="M3.500 576v12.500M0 577.800h13.500" stroke="#e9a7a2" stroke-width="2"/><circle cx="9.800" cy="583.300" r="2.900" fill="#e6effb" stroke="#9fb6dc" stroke-width="1.100"/><path d="M11.800 585.500l2.300 2.700" stroke="#a2a2a2" stroke-width="1.400"/></svg>
<span class="t k" style="left:19px;top:577px;width:24px">正交<svg width="24" height="12"><use href="#g6b63"/><use href="#g4ea4" x="12"/></svg></span>
<div class="hot" style="left:47px;top:571px;width:74px;height:22px"></div>
<svg class="i" style="left:50px;top:573px" width="19" height="19" viewBox="50 573 19 19"><path d="M54.500 574.500v14.500M65.500 574.500v14.500" stroke="#7a2a2a" stroke-width="1"/><circle cx="54.500" cy="582" r="1.700" fill="#d83030"/><circle cx="65.500" cy="582" r="1.700" fill="#d83030"/><ellipse cx="61" cy="586" rx="5.300" ry="4.300" fill="#ecd462" stroke="#6f6120" stroke-width=".9"/><ellipse cx="59.500" cy="584.500" rx="2.300" ry="1.400" fill="#faf0b2"/></svg>
<span class="t k" style="left:71px;top:577px;width:48px">对象捕捉<svg width="48" height="12"><use href="#g5bf9"/><use href="#g8c61" x="12"/><use href="#g6355" x="24"/><use href="#g6349" x="36"/></svg></span>
<div class="hot" style="left:123px;top:571px;width:73px;height:22px"></div>
<svg class="i" style="left:126px;top:574px" width="18" height="17" viewBox="126 574 18 17"><path d="M127.500 575.500v7M141.500 575.500v7M127.500 577.500h14M127.500 581.500h14" stroke="#8f2f2f" stroke-width="1.100"/><rect x="130.500" y="583.500" width="9.500" height="5.500" fill="#fff" stroke="#1c1c1c"/><path d="M132.500 585v3M134.500 585.300h2.500v1.200h-2.500v1.300h2.800" stroke="#000" stroke-width=".9" fill="none"/></svg>
<span class="t k" style="left:146px;top:577px;width:48px">动态输入<svg width="48" height="12"><use href="#g52a8"/><use href="#g6001" x="12"/><use href="#g8f93" x="24"/><use href="#g5165" x="36"/></svg></span>
<svg class="i" style="left:201px;top:573px" width="3" height="18" shape-rendering="crispEdges"><rect x="1" y="1" width="2" height="2" fill="#fff"/><rect x="0" y="0" width="2" height="2" fill="#a8a592"/><rect x="1" y="5" width="2" height="2" fill="#fff"/><rect x="0" y="4" width="2" height="2" fill="#a8a592"/><rect x="1" y="9" width="2" height="2" fill="#fff"/><rect x="0" y="8" width="2" height="2" fill="#a8a592"/><rect x="1" y="13" width="2" height="2" fill="#fff"/><rect x="0" y="12" width="2" height="2" fill="#a8a592"/></svg>
<svg class="i" style="left:209px;top:575px" width="17" height="15" viewBox="209 575 17 15"><path d="M211 576.500l13.500 12.500M224.500 576.500l-13.500 12.500" stroke="#93aee8" stroke-width="1.100"/><rect x="215.800" y="580.800" width="4" height="4" fill="#2f5fcf"/></svg>
<span class="t k" style="left:230px;top:577px;width:24px">交点<svg width="24" height="12"><use href="#g4ea4"/><use href="#g70b9" x="12"/></svg></span>
<div class="hot" style="left:258px;top:571px;width:50px;height:22px"></div>
<svg class="i" style="left:261px;top:574px" width="18" height="17" viewBox="261 574 18 17"><path d="M275.500 575v14.500" stroke="#93abea" stroke-width="1.600"/><path d="M262 586.500h13" stroke="#3f6fd0" stroke-width="2"/><rect x="273" y="584" width="4.600" height="4.600" fill="#1f3f9f"/></svg>
<span class="t k" style="left:282px;top:577px;width:24px">垂点<svg width="24" height="12"><use href="#g5782"/><use href="#g70b9" x="12"/></svg></span>
<div class="hot" style="left:310px;top:571px;width:49px;height:22px"></div>
<svg class="i" style="left:313px;top:579px" width="17" height="8" viewBox="313 579 17 8"><path d="M314 583.500h14.500" stroke="#93abea" stroke-width="1.600"/><rect x="319" y="581.400" width="4.600" height="4.200" fill="#1f3f8f"/></svg>
<span class="t k" style="left:333px;top:577px;width:24px">中点<svg width="24" height="12"><use href="#g4e2d"/><use href="#g70b9" x="12"/></svg></span>
<div class="hot" style="left:361px;top:571px;width:49px;height:22px"></div>
<svg class="i" style="left:363px;top:574px" width="18" height="17" viewBox="363 574 18 17"><polygon points="372,576.3 378.6,581.2 376.2,589 367.8,589 365.4,581.2" fill="#f6f9ff" stroke="#2f5fc0" stroke-width="1.400"/><rect x="370.9" y="575.1999999999999" width="2.200" height="2.200" fill="#1f3f7f"/><rect x="377.5" y="580.1" width="2.200" height="2.200" fill="#1f3f7f"/><rect x="375.09999999999997" y="587.9" width="2.200" height="2.200" fill="#1f3f7f"/><rect x="366.7" y="587.9" width="2.200" height="2.200" fill="#1f3f7f"/><rect x="364.29999999999995" y="580.1" width="2.200" height="2.200" fill="#1f3f7f"/></svg>
<span class="t k" style="left:384px;top:577px;width:24px">顶点<svg width="24" height="12"><use href="#g9876"/><use href="#g70b9" x="12"/></svg></span>
<svg class="i" style="left:413px;top:574px" width="19" height="17" viewBox="413 574 19 17"><path d="M419 582c3 0 3.500 3.500 6 3.500s3-4 5.500-4.500v7.500h-11.500z" fill="#d5e0f7"/><path d="M418.500 576v13h12" stroke="#8fb0e6" fill="none"/><path d="M419 582c3 0 3.500 3.500 6 3.500s3-4 5.500-4.500" stroke="#5f83d6" fill="none"/><path d="M426.500 575.500l2.500 2.500M429 575.500l-2.500 2.500M414 581.500l1.200 1.500 1.300-1.500M415.200 583v1.500" stroke="#7f95c0" stroke-width=".8" fill="none"/><circle cx="415.200" cy="588.300" r="1.200" fill="none" stroke="#7f95c0" stroke-width=".8"/><circle cx="421" cy="577" r="1.200" fill="none" stroke="#7f95c0" stroke-width=".8"/></svg>
<span class="t k" style="left:434px;top:577px;width:24px">坐标<svg width="24" height="12"><use href="#g5750"/><use href="#g6807" x="12"/></svg></span>
<svg class="i" style="left:466px;top:573px" width="3" height="18" shape-rendering="crispEdges"><rect x="1" y="1" width="2" height="2" fill="#fff"/><rect x="0" y="0" width="2" height="2" fill="#a8a592"/><rect x="1" y="5" width="2" height="2" fill="#fff"/><rect x="0" y="4" width="2" height="2" fill="#a8a592"/><rect x="1" y="9" width="2" height="2" fill="#fff"/><rect x="0" y="8" width="2" height="2" fill="#a8a592"/><rect x="1" y="13" width="2" height="2" fill="#fff"/><rect x="0" y="12" width="2" height="2" fill="#a8a592"/></svg>
<div class="combo" style="left:473px;top:572px;width:45px;height:18px"></div>
<span class="t k" style="left:476px;top:575px;width:36px">不偏移<svg width="36" height="12"><use href="#g4e0d"/><use href="#g504f" x="12"/><use href="#g79fb" x="24"/></svg></span>
<svg class="i" style="left:518px;top:573px" width="11" height="15" viewBox="0 0 12 15" preserveAspectRatio="none"><rect x="0" y="0" width="12" height="15" rx="1.500" fill="#bccbf3"/><path d="M2.600 5.300L6 8.700 9.400 5.300" fill="none" stroke="#2a4690" stroke-width="2.300"/></svg>
<div class="sep" style="left:534px;top:572px;width:2px;height:18px"></div>
<span class="t d" style="left:538px;top:575px;width:12px">X=<svg width="12" height="12"><use href="#g58"/><use href="#g3d" x="6"/></svg></span>
<div class="inp" style="left:553px;top:572px;width:44px;height:18px"></div>
<span class="t d" style="left:585px;top:575px;width:6px">0<svg width="6" height="12"><use href="#g30"/></svg></span>
<svg class="i" style="left:597px;top:573px" width="10" height="16" viewBox="0 0 10 18"><rect width="10" height="18" fill="#ebe8d8"/><rect x="0.5" y="0.5" width="9" height="8" rx="1.500" fill="#f3f1e6" stroke="#d6d2bf"/><rect x="0.5" y="9.500" width="9" height="8" rx="1.500" fill="#f3f1e6" stroke="#d6d2bf"/><path d="M2.500 6L5 3.500 7.500 6M2.500 12L5 14.500 7.500 12" stroke="#c2beaa" stroke-width="1.300" fill="none"/></svg>
<span class="t d" style="left:611px;top:575px;width:12px">mm<svg width="12" height="12"><use href="#g6d"/><use href="#g6d" x="6"/></svg></span>
<span class="t d" style="left:630px;top:575px;width:12px">Y=<svg width="12" height="12"><use href="#g59"/><use href="#g3d" x="6"/></svg></span>
<div class="inp" style="left:645px;top:572px;width:44px;height:18px"></div>
<span class="t d" style="left:677px;top:575px;width:6px">0<svg width="6" height="12"><use href="#g30"/></svg></span>
<svg class="i" style="left:689px;top:573px" width="10" height="16" viewBox="0 0 10 18"><rect width="10" height="18" fill="#ebe8d8"/><rect x="0.5" y="0.5" width="9" height="8" rx="1.500" fill="#f3f1e6" stroke="#d6d2bf"/><rect x="0.5" y="9.500" width="9" height="8" rx="1.500" fill="#f3f1e6" stroke="#d6d2bf"/><path d="M2.500 6L5 3.500 7.500 6M2.500 12L5 14.500 7.500 12" stroke="#c2beaa" stroke-width="1.300" fill="none"/></svg>
<span class="t d" style="left:703px;top:575px;width:12px">mm<svg width="12" height="12"><use href="#g6d"/><use href="#g6d" x="6"/></svg></span>
<div class="sep" style="left:718px;top:572px;width:2px;height:18px"></div>
<div class="chk" style="left:722px;top:575px;width:13px;height:13px"></div>
<span class="t k" style="left:742px;top:575px;width:24px">旋转<svg width="24" height="12"><use href="#g65cb"/><use href="#g8f6c" x="12"/></svg></span>
<div class="inp" style="left:773px;top:572px;width:51px;height:18px"></div>
<span class="t d" style="left:790px;top:575px;width:30px">0.000<svg width="30" height="12"><use href="#g30"/><use href="#g2e" x="6"/><use href="#g30" x="12"/><use href="#g30" x="18"/><use href="#g30" x="24"/></svg></span>
<svg class="i" style="left:824px;top:573px" width="12" height="16" viewBox="0 0 10 18"><rect width="10" height="18" fill="#ebe8d8"/><rect x="0.5" y="0.5" width="9" height="8" rx="1.500" fill="#f3f1e6" stroke="#d6d2bf"/><rect x="0.5" y="9.500" width="9" height="8" rx="1.500" fill="#f3f1e6" stroke="#d6d2bf"/><path d="M2.500 6L5 3.500 7.500 6M2.500 12L5 14.500 7.500 12" stroke="#c2beaa" stroke-width="1.300" fill="none"/></svg>
<span class="t d" style="left:841px;top:573px;width:6px">°<svg width="6" height="12"><use href="#gb0"/></svg></span>
</div>
<div id="nav">
<div class="tb" style="top:596px;height:28px"></div>
<svg class="i" style="left:6px;top:604px" width="11" height="14" viewBox="6 604 11 14"><rect x="7" y="605" width="2.500" height="11.600" fill="#cdcbc0"/><polygon points="16,605 16,616.600 9.800,610.800" fill="#cdcbc0"/></svg>
<svg class="i" style="left:32px;top:604px" width="8" height="14" viewBox="32 604 8 14"><polygon points="39.200,605.300 39.200,616.300 33,610.800" fill="#cdcbc0"/></svg>
<svg class="i" style="left:55px;top:604px" width="9" height="14" viewBox="55 604 9 14"><polygon points="56,605 62.600,610.800 56,616.600" fill="#5a8ee6"/><polygon points="56.800,606.800 60.500,610.200 56.800,611" fill="#9cbdf4"/></svg>
<svg class="i" style="left:78px;top:604px" width="11" height="14" viewBox="78 604 11 14"><polygon points="79,605 85.200,610.800 79,616.600" fill="#5a8ee6"/><rect x="85.300" y="605" width="2.500" height="11.600" fill="#5a8ee6"/><polygon points="79.800,606.800 83.300,610.200 79.800,611" fill="#9cbdf4"/></svg>
<div class="sep" style="left:96px;top:600px;width:2px;height:20px"></div>
<svg class="i" style="left:104px;top:605px" width="13" height="12" viewBox="104 605 13 12"><polygon points="110,606.600 114.600,611.200 112.300,611.200 112.300,615 107.700,615 107.700,611.200 105.400,611.200" fill="#d3d1c7" stroke="#c6c4b9" stroke-width=".6"/></svg>
<svg class="i" style="left:128px;top:605px" width="13" height="12" viewBox="128 605 13 12"><polygon points="131.700,606.600 136.300,606.600 136.300,610.400 138.600,610.400 134,615 129.400,610.400 131.700,610.400" fill="#6a98e8" stroke="#4f7fd6" stroke-width=".6"/><path d="M132.500 607.300h3v2h-3z" fill="#a5c2f4"/></svg>
<div class="sep" style="left:148px;top:600px;width:2px;height:20px"></div>
<svg class="i" style="left:154px;top:603px" width="18" height="16" viewBox="154 603 18 16"><path d="M155 604.500h5v3h-5M155 614.500h5v3h-5" stroke="#8a8a8a" fill="none"/><rect x="165.500" y="608.500" width="5" height="4" fill="#a9c5ea" stroke="#6f8fc0"/><path d="M166 610.500h-3" stroke="#4f6f9f" stroke-width="1.200"/><polygon points="160.600,610.500 163.800,608.200 163.800,612.800" fill="#4f6f9f"/></svg>
<span class="t k" style="left:175px;top:605px;width:24px">插入<svg width="24" height="12"><use href="#g63d2"/><use href="#g5165" x="12"/></svg></span>
<svg class="i" style="left:205px;top:603px" width="19" height="16" viewBox="205 603 19 16"><path d="M207 604.500h9.500M207 607.500h9.500M207 613.500h9.500M207 616.500h9.500" stroke="#9f9fa8"/><rect x="207" y="609" width="9.500" height="3" fill="#6f9fe8"/><path d="M215 610.500h4.500" stroke="#2c2c2c" stroke-width="1.300"/><polygon points="222.500,610.500 218.800,608 218.800,613" fill="#2c2c2c"/></svg>
<span class="t k" style="left:226px;top:605px;width:24px">删除<svg width="24" height="12"><use href="#g5220"/><use href="#g9664" x="12"/></svg></span>
<svg class="i" style="left:257px;top:603px" width="16" height="16" viewBox="257 603 16 16"><path d="M259.500 607.500v-3h11.500v3" stroke="#cdcbc0" stroke-dasharray="2 1" fill="none"/><path d="M260.500 609v8.500M263 610v7.500M265.500 611v6.500M268 612v5.500M270.500 613v4.500" stroke="#cdcbc0"/></svg>
<span class="t d" style="left:277px;top:605px;width:48px">缩尺配筋<svg width="48" height="12"><use href="#g7f29"/><use href="#g5c3a" x="12"/><use href="#g914d" x="24"/><use href="#g7b4b" x="36"/></svg></span>
<svg class="i" style="left:332px;top:603px" width="16" height="16" viewBox="332 603 16 16"><rect x="336.500" y="608.500" width="9.500" height="9" fill="#d8e5fa" stroke="#7f9fd6"/><path d="M336.500 613h9.500M341.500 608.500v9" stroke="#9fb8e4"/><path d="M334.500 605.500l7.500 7" stroke="#a78455" stroke-width="2.200"/><path d="M340 606l4-1.500M338 604.500l3.500 3" stroke="#8a8f9f" stroke-width="1.200"/></svg>
<span class="t k" style="left:352px;top:605px;width:48px">钢筋信息<svg width="48" height="12"><use href="#g94a2"/><use href="#g7b4b" x="12"/><use href="#g4fe1" x="24"/><use href="#g606f" x="36"/></svg></span>
<svg class="i" style="left:407px;top:603px" width="17" height="16" viewBox="407 603 17 16"><rect x="408.500" y="604.500" width="9.500" height="12" fill="#fff" stroke="#9c9c9c"/><path d="M410 607.500h6.500M410 610.500h4M410 613.500h4" stroke="#a3acbc"/><polygon points="414.500,610.200 418.500,610.200 418.500,607.600 422.600,612.100 418.500,616.600 418.500,614 414.500,614" fill="#4072e4" stroke="#2c50b0" stroke-width=".6"/></svg>
<span class="t k" style="left:427px;top:605px;width:24px">其他<svg width="24" height="12"><use href="#g5176"/><use href="#g4ed6" x="12"/></svg></span>
<svg class="i" style="left:454px;top:610px" width="5" height="3"><path d="M0 0h5v1h-5zM1 1h3v1h-3zM2 2h1v1h-1z" fill="#000"/></svg>
<span class="t k" style="left:468px;top:605px;width:24px">关闭<svg width="24" height="12"><use href="#g5173"/><use href="#g95ed" x="12"/></svg></span>
<div class="sep" style="left:500px;top:600px;width:2px;height:20px"></div>
<span class="t k" style="left:509px;top:605px;width:162px">单构件钢筋总重(kg)：506.565<svg width="162" height="12"><use href="#g5355"/><use href="#g6784" x="12"/><use href="#g4ef6" x="24"/><use href="#g94a2" x="36"/><use href="#g7b4b" x="48"/><use href="#g603b" x="60"/><use href="#g91cd" x="72"/><use href="#g28" x="84"/><use href="#g6b" x="90"/><use href="#g67" x="96"/><use href="#g29" x="102"/><use href="#gff1a" x="108"/><use href="#g35" x="120"/><use href="#g30" x="126"/><use href="#g36" x="132"/><use href="#g2e" x="138"/><use href="#g35" x="144"/><use href="#g36" x="150"/><use href="#g35" x="156"/></svg></span>
</div>
<div id="grid">
<div class="ghead" style="left:0px;top:624px;width:912px;height:21px"></div>
<div class="gsel" style="left:108px;top:625px;width:56px;height:19px"></div>
<div class="gbody" style="left:34px;top:645px;width:878px;height:130px"></div>
<div class="combo" style="left:34px;top:775px;width:878px;height:10px"></div>
<div class="growh" style="left:1px;top:645px;width:33px;height:33px"></div>
<div class="growh" style="left:1px;top:679px;width:33px;height:29px"></div>
<div class="growh" style="left:1px;top:709px;width:33px;height:32px"></div>
<div class="growh" style="left:1px;top:742px;width:33px;height:32px"></div>
<div class="growh" style="left:1px;top:775px;width:33px;height:10px"></div>
<div class="gleft" style="left:0px;top:624px;width:1px;height:160px"></div>
<div class="vl" style="left:34px;top:645px;width:1px;height:140px"></div>
<div class="hvl" style="left:34px;top:626px;width:1px;height:17px"></div>
<div class="vl" style="left:107px;top:645px;width:1px;height:140px"></div>
<div class="hvl" style="left:107px;top:626px;width:1px;height:17px"></div>
<div class="vl" style="left:164px;top:645px;width:1px;height:140px"></div>
<div class="hvl" style="left:164px;top:626px;width:1px;height:17px"></div>
<div class="vl" style="left:199px;top:645px;width:1px;height:140px"></div>
<div class="hvl" style="left:199px;top:626px;width:1px;height:17px"></div>
<div class="vl" style="left:232px;top:645px;width:1px;height:140px"></div>
<div class="hvl" style="left:232px;top:626px;width:1px;height:17px"></div>
<div class="vl" style="left:433px;top:645px;width:1px;height:140px"></div>
<div class="hvl" style="left:433px;top:626px;width:1px;height:17px"></div>
<div class="vl" style="left:600px;top:645px;width:1px;height:140px"></div>
<div class="hvl" style="left:600px;top:626px;width:1px;height:17px"></div>
<div class="vl" style="left:756px;top:645px;width:1px;height:140px"></div>
<div class="hvl" style="left:756px;top:626px;width:1px;height:17px"></div>
<div class="vl" style="left:816px;top:645px;width:1px;height:140px"></div>
<div class="hvl" style="left:816px;top:626px;width:1px;height:17px"></div>
<div class="vl" style="left:855px;top:645px;width:1px;height:140px"></div>
<div class="hvl" style="left:855px;top:626px;width:1px;height:17px"></div>
<div class="vl" style="left:893px;top:645px;width:1px;height:140px"></div>
<div class="hvl" style="left:893px;top:626px;width:1px;height:17px"></div>
<div class="hl" style="left:0px;top:678px;width:912px;height:1px"></div>
<div class="hl" style="left:0px;top:708px;width:912px;height:1px"></div>
<div class="hl" style="left:0px;top:741px;width:912px;height:1px"></div>
<div class="hl" style="left:0px;top:774px;width:912px;height:1px"></div>
<div class="hl" style="left:0px;top:644px;width:912px;height:1px"></div>
<div class="cur" style="left:107px;top:645px;width:1px;height:140px"></div>
<span class="t k" style="left:58px;top:629px;width:24px">筋号<svg width="24" height="12"><use href="#g7b4b"/><use href="#g53f7" x="12"/></svg></span>
<span class="t k" style="left:111px;top:629px;width:48px">直径(mm)<svg width="48" height="12"><use href="#g76f4"/><use href="#g5f84" x="12"/><use href="#g28" x="24"/><use href="#g6d" x="30"/><use href="#g6d" x="36"/><use href="#g29" x="42"/></svg></span>
<span class="t k" style="left:168px;top:629px;width:24px">级别<svg width="24" height="12"><use href="#g7ea7"/><use href="#g522b" x="12"/></svg></span>
<span class="t k" style="left:205px;top:629px;width:24px">图号<svg width="24" height="12"><use href="#g56fe"/><use href="#g53f7" x="12"/></svg></span>
<span class="t k" style="left:321px;top:629px;width:24px">图形<svg width="24" height="12"><use href="#g56fe"/><use href="#g5f62" x="12"/></svg></span>
<span class="t k" style="left:492px;top:629px;width:48px">计算公式<svg width="48" height="12"><use href="#g8ba1"/><use href="#g7b97" x="12"/><use href="#g516c" x="24"/><use href="#g5f0f" x="36"/></svg></span>
<span class="t k" style="left:653px;top:629px;width:48px">公式描述<svg width="48" height="12"><use href="#g516c"/><use href="#g5f0f" x="12"/><use href="#g63cf" x="24"/><use href="#g8ff0" x="36"/></svg></span>
<span class="t k" style="left:762px;top:629px;width:48px">长度(mm)<svg width="48" height="12"><use href="#g957f"/><use href="#g5ea6" x="12"/><use href="#g28" x="24"/><use href="#g6d" x="30"/><use href="#g6d" x="36"/><use href="#g29" x="42"/></svg></span>
<span class="t k" style="left:822px;top:629px;width:24px">根数<svg width="24" height="12"><use href="#g6839"/><use href="#g6570" x="12"/></svg></span>
<span class="t k" style="left:862px;top:629px;width:24px">搭接<svg width="24" height="12"><use href="#g642d"/><use href="#g63a5" x="12"/></svg></span>
<span class="t k" style="left:897px;top:629px;width:24px">损耗<svg width="24" height="12"><use href="#g635f"/><use href="#g8017" x="12"/></svg></span>
<span class="t k" style="left:12px;top:655px;width:6px">4<svg width="6" height="12"><use href="#g34"/></svg></span>
<span class="t k" style="left:37px;top:655px;width:60px">侧面纵筋.2<svg width="60" height="12"><use href="#g4fa7"/><use href="#g9762" x="12"/><use href="#g7eb5" x="24"/><use href="#g7b4b" x="36"/><use href="#g2e" x="48"/><use href="#g32" x="54"/></svg></span>
<span class="t k" style="left:110px;top:655px;width:12px">12<svg width="12" height="12"><use href="#g31"/><use href="#g32" x="6"/></svg></span>
<svg class="i" style="left:176px;top:655px" width="9" height="10" shape-rendering="crispEdges"><path d="M4 0h1v10h-1zM1 3h7v1h-7zM1 7h7v1h-7zM0 4h1v3h-1zM8 4h1v3h-1zM1 9h7v1h-7z" fill="#000"/></svg>
<span class="t k" style="left:202px;top:655px;width:12px">18<svg width="12" height="12"><use href="#g31"/><use href="#g38" x="6"/></svg></span>
<span class="t k" style="left:436px;top:655px;width:156px">4009+15*d-50+max(41*d,250)<svg width="156" height="12"><use href="#g34"/><use href="#g30" x="6"/><use href="#g30" x="12"/><use href="#g39" x="18"/><use href="#g2b" x="24"/><use href="#g31" x="30"/><use href="#g35" x="36"/><use href="#g2a" x="42"/><use href="#g64" x="48"/><use href="#g2d" x="54"/><use href="#g35" x="60"/><use href="#g30" x="66"/><use href="#g2b" x="72"/><use href="#g6d" x="78"/><use href="#g61" x="84"/><use href="#g78" x="90"/><use href="#g28" x="96"/><use href="#g34" x="102"/><use href="#g31" x="108"/><use href="#g2a" x="114"/><use href="#g64" x="120"/><use href="#g2c" x="126"/><use href="#g32" x="132"/><use href="#g35" x="138"/><use href="#g30" x="144"/><use href="#g29" x="150"/></svg></span>
<span class="t k" style="left:602px;top:655px;width:150px">净长+弯折-保护层+锚固长度<svg width="150" height="12"><use href="#g51c0"/><use href="#g957f" x="12"/><use href="#g2b" x="24"/><use href="#g5f2f" x="30"/><use href="#g6298" x="42"/><use href="#g2d" x="54"/><use href="#g4fdd" x="60"/><use href="#g62a4" x="72"/><use href="#g5c42" x="84"/><use href="#g2b" x="96"/><use href="#g951a" x="102"/><use href="#g56fa" x="114"/><use href="#g957f" x="126"/><use href="#g5ea6" x="138"/></svg></span>
<span class="t k" style="left:758px;top:655px;width:24px">4631<svg width="24" height="12"><use href="#g34"/><use href="#g36" x="6"/><use href="#g33" x="12"/><use href="#g31" x="18"/></svg></span>
<span class="t k" style="left:819px;top:655px;width:6px">8<svg width="6" height="12"><use href="#g38"/></svg></span>
<span class="t k" style="left:858px;top:655px;width:6px">0<svg width="6" height="12"><use href="#g30"/></svg></span>
<span class="t k" style="left:896px;top:655px;width:6px">3<svg width="6" height="12"><use href="#g33"/></svg></span>
<span class="t k" style="left:12px;top:687px;width:6px">5<svg width="6" height="12"><use href="#g35"/></svg></span>
<span class="t k" style="left:37px;top:687px;width:60px">侧面纵筋.3<svg width="60" height="12"><use href="#g4fa7"/><use href="#g9762" x="12"/><use href="#g7eb5" x="24"/><use href="#g7b4b" x="36"/><use href="#g2e" x="48"/><use href="#g33" x="54"/></svg></span>
<span class="t k" style="left:110px;top:687px;width:12px">12<svg width="12" height="12"><use href="#g31"/><use href="#g32" x="6"/></svg></span>
<svg class="i" style="left:176px;top:687px" width="9" height="10" shape-rendering="crispEdges"><path d="M4 0h1v10h-1zM1 3h7v1h-7zM1 7h7v1h-7zM0 4h1v3h-1zM8 4h1v3h-1zM1 9h7v1h-7z" fill="#000"/></svg>
<span class="t k" style="left:202px;top:687px;width:6px">1<svg width="6" height="12"><use href="#g31"/></svg></span>
<span class="t k" style="left:436px;top:682px;width:156px">3000+max(41*d,250)+max(41*<svg width="156" height="12"><use href="#g33"/><use href="#g30" x="6"/><use href="#g30" x="12"/><use href="#g30" x="18"/><use href="#g2b" x="24"/><use href="#g6d" x="30"/><use href="#g61" x="36"/><use href="#g78" x="42"/><use href="#g28" x="48"/><use href="#g34" x="54"/><use href="#g31" x="60"/><use href="#g2a" x="66"/><use href="#g64" x="72"/><use href="#g2c" x="78"/><use href="#g32" x="84"/><use href="#g35" x="90"/><use href="#g30" x="96"/><use href="#g29" x="102"/><use href="#g2b" x="108"/><use href="#g6d" x="114"/><use href="#g61" x="120"/><use href="#g78" x="126"/><use href="#g28" x="132"/><use href="#g34" x="138"/><use href="#g31" x="144"/><use href="#g2a" x="150"/></svg></span>
<span class="t k" style="left:436px;top:694px;width:36px">d,250)<svg width="36" height="12"><use href="#g64"/><use href="#g2c" x="6"/><use href="#g32" x="12"/><use href="#g35" x="18"/><use href="#g30" x="24"/><use href="#g29" x="30"/></svg></span>
<span class="t k" style="left:602px;top:687px;width:132px">净长+锚固长度+锚固长度<svg width="132" height="12"><use href="#g51c0"/><use href="#g957f" x="12"/><use href="#g2b" x="24"/><use href="#g951a" x="30"/><use href="#g56fa" x="42"/><use href="#g957f" x="54"/><use href="#g5ea6" x="66"/><use href="#g2b" x="78"/><use href="#g951a" x="84"/><use href="#g56fa" x="96"/><use href="#g957f" x="108"/><use href="#g5ea6" x="120"/></svg></span>
<span class="t k" style="left:758px;top:687px;width:24px">3984<svg width="24" height="12"><use href="#g33"/><use href="#g39" x="6"/><use href="#g38" x="12"/><use href="#g34" x="18"/></svg></span>
<span class="t k" style="left:819px;top:687px;width:6px">8<svg width="6" height="12"><use href="#g38"/></svg></span>
<span class="t k" style="left:858px;top:687px;width:6px">0<svg width="6" height="12"><use href="#g30"/></svg></span>
<span class="t k" style="left:896px;top:687px;width:6px">3<svg width="6" height="12"><use href="#g33"/></svg></span>
<span class="t k" style="left:12px;top:719px;width:6px">6<svg width="6" height="12"><use href="#g36"/></svg></span>
<span class="t k" style="left:37px;top:719px;width:60px">侧面纵筋.4<svg width="60" height="12"><use href="#g4fa7"/><use href="#g9762" x="12"/><use href="#g7eb5" x="24"/><use href="#g7b4b" x="36"/><use href="#g2e" x="48"/><use href="#g34" x="54"/></svg></span>
<span class="t k" style="left:110px;top:719px;width:12px">12<svg width="12" height="12"><use href="#g31"/><use href="#g32" x="6"/></svg></span>
<svg class="i" style="left:176px;top:719px" width="9" height="10" shape-rendering="crispEdges"><path d="M4 0h1v10h-1zM1 3h7v1h-7zM1 7h7v1h-7zM0 4h1v3h-1zM8 4h1v3h-1zM1 9h7v1h-7z" fill="#000"/></svg>
<span class="t k" style="left:202px;top:719px;width:12px">18<svg width="12" height="12"><use href="#g31"/><use href="#g38" x="6"/></svg></span>
<span class="t k" style="left:436px;top:719px;width:156px">4023+15*d-50+max(41*d,250)<svg width="156" height="12"><use href="#g34"/><use href="#g30" x="6"/><use href="#g32" x="12"/><use href="#g33" x="18"/><use href="#g2b" x="24"/><use href="#g31" x="30"/><use href="#g35" x="36"/><use href="#g2a" x="42"/><use href="#g64" x="48"/><use href="#g2d" x="54"/><use href="#g35" x="60"/><use href="#g30" x="66"/><use href="#g2b" x="72"/><use href="#g6d" x="78"/><use href="#g61" x="84"/><use href="#g78" x="90"/><use href="#g28" x="96"/><use href="#g34" x="102"/><use href="#g31" x="108"/><use href="#g2a" x="114"/><use href="#g64" x="120"/><use href="#g2c" x="126"/><use href="#g32" x="132"/><use href="#g35" x="138"/><use href="#g30" x="144"/><use href="#g29" x="150"/></svg></span>
<span class="t k" style="left:602px;top:719px;width:150px">净长+弯折-保护层+锚固长度<svg width="150" height="12"><use href="#g51c0"/><use href="#g957f" x="12"/><use href="#g2b" x="24"/><use href="#g5f2f" x="30"/><use href="#g6298" x="42"/><use href="#g2d" x="54"/><use href="#g4fdd" x="60"/><use href="#g62a4" x="72"/><use href="#g5c42" x="84"/><use href="#g2b" x="96"/><use href="#g951a" x="102"/><use href="#g56fa" x="114"/><use href="#g957f" x="126"/><use href="#g5ea6" x="138"/></svg></span>
<span class="t k" style="left:758px;top:719px;width:24px">4645<svg width="24" height="12"><use href="#g34"/><use href="#g36" x="6"/><use href="#g34" x="12"/><use href="#g35" x="18"/></svg></span>
<span class="t k" style="left:819px;top:719px;width:6px">8<svg width="6" height="12"><use href="#g38"/></svg></span>
<span class="t k" style="left:858px;top:719px;width:6px">0<svg width="6" height="12"><use href="#g30"/></svg></span>
<span class="t k" style="left:896px;top:719px;width:6px">3<svg width="6" height="12"><use href="#g33"/></svg></span>
<span class="t k" style="left:12px;top:752px;width:6px">7<svg width="6" height="12"><use href="#g37"/></svg></span>
<span class="t k" style="left:37px;top:746px;width:66px">U型构造封边<svg width="66" height="12"><use href="#g55"/><use href="#g578b" x="6"/><use href="#g6784" x="18"/><use href="#g9020" x="30"/><use href="#g5c01" x="42"/><use href="#g8fb9" x="54"/></svg></span>
<span class="t k" style="left:37px;top:759px;width:24px">筋.1<svg width="24" height="12"><use href="#g7b4b"/><use href="#g2e" x="12"/><use href="#g31" x="18"/></svg></span>
<span class="t k" style="left:110px;top:752px;width:12px">12<svg width="12" height="12"><use href="#g31"/><use href="#g32" x="6"/></svg></span>
<svg class="i" style="left:176px;top:752px" width="9" height="10" shape-rendering="crispEdges"><path d="M4 0h1v10h-1zM1 3h7v1h-7zM1 7h7v1h-7zM0 4h1v3h-1zM8 4h1v3h-1zM1 9h7v1h-7z" fill="#000"/></svg>
<span class="t k" style="left:202px;top:752px;width:12px">71<svg width="12" height="12"><use href="#g37"/><use href="#g31" x="6"/></svg></span>
<span class="t k" style="left:436px;top:752px;width:96px">1000-50-30+2*200<svg width="96" height="12"><use href="#g31"/><use href="#g30" x="6"/><use href="#g30" x="12"/><use href="#g30" x="18"/><use href="#g2d" x="24"/><use href="#g35" x="30"/><use href="#g30" x="36"/><use href="#g2d" x="42"/><use href="#g33" x="48"/><use href="#g30" x="54"/><use href="#g2b" x="60"/><use href="#g32" x="66"/><use href="#g2a" x="72"/><use href="#g32" x="78"/><use href="#g30" x="84"/><use href="#g30" x="90"/></svg></span>
<span class="t k" style="left:602px;top:752px;width:150px">厚度-保护层-保护层+2*弯折<svg width="150" height="12"><use href="#g539a"/><use href="#g5ea6" x="12"/><use href="#g2d" x="24"/><use href="#g4fdd" x="30"/><use href="#g62a4" x="42"/><use href="#g5c42" x="54"/><use href="#g2d" x="66"/><use href="#g4fdd" x="72"/><use href="#g62a4" x="84"/><use href="#g5c42" x="96"/><use href="#g2b" x="108"/><use href="#g32" x="114"/><use href="#g2a" x="120"/><use href="#g5f2f" x="126"/><use href="#g6298" x="138"/></svg></span>
<span class="t k" style="left:758px;top:752px;width:24px">1320<svg width="24" height="12"><use href="#g31"/><use href="#g33" x="6"/><use href="#g32" x="12"/><use href="#g30" x="18"/></svg></span>
<span class="t k" style="left:819px;top:752px;width:18px">144<svg width="18" height="12"><use href="#g31"/><use href="#g34" x="6"/><use href="#g34" x="12"/></svg></span>
<span class="t k" style="left:858px;top:752px;width:6px">0<svg width="6" height="12"><use href="#g30"/></svg></span>
<span class="t k" style="left:896px;top:752px;width:6px">3<svg width="6" height="12"><use href="#g33"/></svg></span>
<span class="t k" style="left:12px;top:777px;width:6px">8<svg width="6" height="12"><use href="#g38"/></svg></span>
<svg class="i" style="left:232px;top:645px" width="201" height="138" viewBox="232 645 201 138" fill="none" stroke="#000" stroke-width="2" shape-rendering="crispEdges"><path d="M267 653V668H404"/><path d="M256 698H406"/><path d="M267 716V731H404"/><path d="M387 750H291V768H387"/></svg>
<span class="t k" style="left:243px;top:656px;width:18px">180<svg width="18" height="12"><use href="#g31"/><use href="#g38" x="6"/><use href="#g30" x="12"/></svg></span>
<span class="t k" style="left:243px;top:719px;width:18px">180<svg width="18" height="12"><use href="#g31"/><use href="#g38" x="6"/><use href="#g30" x="12"/></svg></span>
<span class="t k" style="left:268px;top:753px;width:18px">920<svg width="18" height="12"><use href="#g39"/><use href="#g32" x="6"/><use href="#g30" x="12"/></svg></span>
<span class="t r" style="left:317px;top:652px;width:24px">4451<svg width="24" height="12"><use href="#g34"/><use href="#g34" x="6"/><use href="#g35" x="12"/><use href="#g31" x="18"/></svg></span>
<span class="t r" style="left:323px;top:686px;width:24px">3984<svg width="24" height="12"><use href="#g33"/><use href="#g39" x="6"/><use href="#g38" x="12"/><use href="#g34" x="18"/></svg></span>
<span class="t r" style="left:317px;top:715px;width:24px">4465<svg width="24" height="12"><use href="#g34"/><use href="#g34" x="6"/><use href="#g36" x="12"/><use href="#g35" x="18"/></svg></span>
<span class="t r" style="left:327px;top:756px;width:18px">200<svg width="18" height="12"><use href="#g32"/><use href="#g30" x="6"/><use href="#g30" x="12"/></svg></span>
</div>
<svg id="anno" width="912" height="783" viewBox="0 0 912 783"><g stroke="#cc2424" stroke-width="1.200" fill="none"><path d="M88 762L427 368.500"/><path d="M437.500 373L365 737"/><path d="M440 377L806 737"/></g><g fill="#f01414"><path d="M434.500 360L420.500 364 431 372z"/><path d="M363 748L357 735.500 370 736z"/><path d="M814 744.500L801 740.500 810 732z"/></g></svg>
</div>
</body></html>
